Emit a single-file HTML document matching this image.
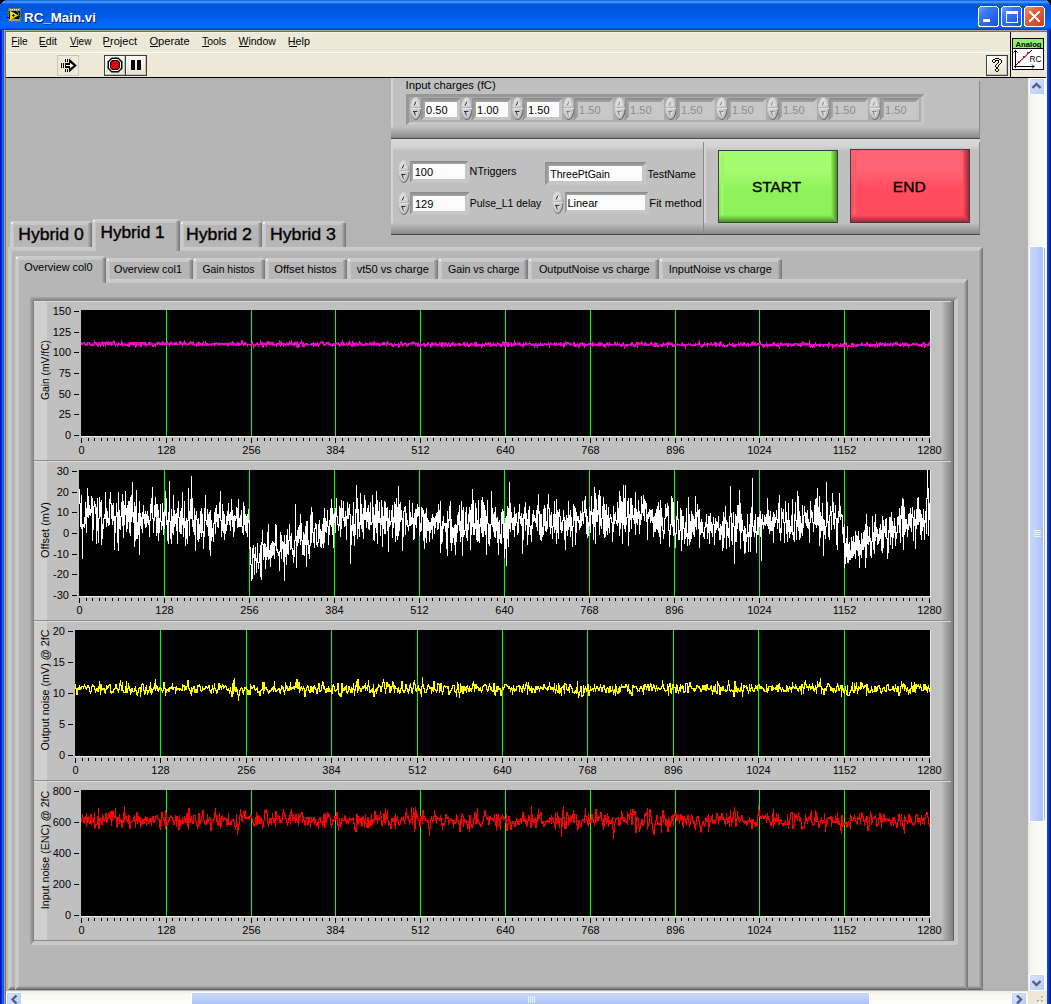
<!DOCTYPE html>
<html><head><meta charset="utf-8"><title>RC_Main.vi</title>
<style>html,body{margin:0;padding:0;background:#000;overflow:hidden;width:1051px;height:1004px}svg{display:block}text{font-family:"Liberation Sans",sans-serif;shape-rendering:auto}</style>
</head><body><svg width="1051" height="1004" viewBox="0 0 1051 1004" shape-rendering="crispEdges"><defs><linearGradient id="g1" x1="0" y1="0" x2="0" y2="1"><stop offset="0" stop-color="#0A3FD8"/><stop offset="0.03333333333333333" stop-color="#3A8DFF"/><stop offset="0.08333333333333333" stop-color="#3D95FF"/><stop offset="0.11666666666666667" stop-color="#0A6EF8"/><stop offset="0.15" stop-color="#0058E0"/><stop offset="0.3" stop-color="#0055DC"/><stop offset="0.6666666666666666" stop-color="#0061EE"/><stop offset="0.7333333333333333" stop-color="#0068FF"/><stop offset="0.9166666666666666" stop-color="#0066FF"/><stop offset="0.95" stop-color="#0052EA"/><stop offset="1" stop-color="#0030C8"/></linearGradient><linearGradient id="g2" x1="0" y1="0" x2="1" y2="0"><stop offset="0" stop-color="#0010D0"/><stop offset="0.25" stop-color="#0010D0"/><stop offset="0.25" stop-color="#0525D0"/><stop offset="0.5" stop-color="#0525D0"/><stop offset="0.5" stop-color="#166AEE"/><stop offset="0.75" stop-color="#166AEE"/><stop offset="0.75" stop-color="#0055E5"/><stop offset="1" stop-color="#0055E5"/></linearGradient><linearGradient id="g3" x1="0" y1="0" x2="1" y2="0"><stop offset="0" stop-color="#0048F0"/><stop offset="0.25" stop-color="#0048F0"/><stop offset="0.25" stop-color="#0040DD"/><stop offset="0.5" stop-color="#0040DD"/><stop offset="0.5" stop-color="#0828B0"/><stop offset="0.75" stop-color="#0828B0"/><stop offset="0.75" stop-color="#001488"/><stop offset="1" stop-color="#001488"/></linearGradient><linearGradient id="g4" x1="0" y1="0" x2="1" y2="1"><stop offset="0" stop-color="#7DA8FF"/><stop offset="0.3" stop-color="#3B78F5"/><stop offset="1" stop-color="#1B4FD8"/></linearGradient><linearGradient id="g5" x1="0" y1="0" x2="1" y2="1"><stop offset="0" stop-color="#7DA8FF"/><stop offset="0.3" stop-color="#3B78F5"/><stop offset="1" stop-color="#1B4FD8"/></linearGradient><linearGradient id="g6" x1="0" y1="0" x2="1" y2="1"><stop offset="0" stop-color="#F39478"/><stop offset="0.35" stop-color="#E3663E"/><stop offset="1" stop-color="#C8401A"/></linearGradient><linearGradient id="g7" x1="0" y1="0" x2="0" y2="1"><stop offset="0" stop-color="#FDFDF8"/><stop offset="1" stop-color="#E6E2D2"/></linearGradient><linearGradient id="g8" x1="0" y1="0" x2="0" y2="1"><stop offset="0" stop-color="#FDFDF8"/><stop offset="1" stop-color="#E6E2D2"/></linearGradient><linearGradient id="g9" x1="0" y1="0" x2="0" y2="1"><stop offset="0" stop-color="#FDFDF8"/><stop offset="1" stop-color="#E6E2D2"/></linearGradient><linearGradient id="g10" x1="0" y1="0" x2="0" y2="1"><stop offset="0" stop-color="#C0C0C0"/><stop offset="1" stop-color="#888888"/></linearGradient><linearGradient id="g11" x1="0" y1="0" x2="0" y2="1"><stop offset="0" stop-color="#D8D8D8"/><stop offset="0.6" stop-color="#D4D4D4"/><stop offset="1" stop-color="#C0C0C0"/></linearGradient><linearGradient id="g12" x1="0" y1="0" x2="0" y2="1"><stop offset="0" stop-color="#C0C0C0"/><stop offset="1" stop-color="#888888"/></linearGradient><linearGradient id="g13" x1="0" y1="0" x2="0" y2="1"><stop offset="0" stop-color="#D8D8D8"/><stop offset="0.6" stop-color="#D4D4D4"/><stop offset="1" stop-color="#C0C0C0"/></linearGradient><linearGradient id="g14" x1="0" y1="0" x2="0" y2="1"><stop offset="0" stop-color="#C0C0C0"/><stop offset="1" stop-color="#888888"/></linearGradient><linearGradient id="g15" x1="0" y1="0" x2="1" y2="1"><stop offset="0" stop-color="#EAEAEA"/><stop offset="0.45" stop-color="#D2D2D2"/><stop offset="1" stop-color="#B0B0B0"/></linearGradient><linearGradient id="g16" x1="0.2" y1="0" x2="0.8" y2="1"><stop offset="0" stop-color="#D8D8D8"/><stop offset="0.5" stop-color="#B0B0B0"/><stop offset="1" stop-color="#404040"/></linearGradient><linearGradient id="g17" x1="0" y1="0" x2="0" y2="1"><stop offset="0" stop-color="#888888"/><stop offset="1" stop-color="#A4A4A4"/></linearGradient><linearGradient id="g18" x1="0" y1="0" x2="1" y2="0"><stop offset="0" stop-color="#909090"/><stop offset="1" stop-color="#A8A8A8"/></linearGradient><linearGradient id="g19" x1="0" y1="0" x2="0" y2="1"><stop offset="0" stop-color="#A4FC70"/><stop offset="0.3" stop-color="#A4FC70"/><stop offset="0.55" stop-color="#8EF25A"/><stop offset="1" stop-color="#8EF25A"/></linearGradient><linearGradient id="g20" x1="0" y1="0" x2="1" y2="0"><stop offset="0" stop-color="#8EF25A"/><stop offset="0.5" stop-color="#A4FC70"/><stop offset="1" stop-color="#8EF25A"/></linearGradient><linearGradient id="g21" x1="0" y1="0" x2="0" y2="1"><stop offset="0" stop-color="#8EF25A"/><stop offset="1" stop-color="#4A9020"/></linearGradient><linearGradient id="g22" x1="0" y1="0" x2="1" y2="0"><stop offset="0" stop-color="#8EF25A"/><stop offset="1" stop-color="#4A9020"/></linearGradient><linearGradient id="g23" x1="0" y1="0" x2="0" y2="1"><stop offset="0" stop-color="#FF6272"/><stop offset="0.3" stop-color="#FF6272"/><stop offset="0.55" stop-color="#FF4C5E"/><stop offset="1" stop-color="#FF4C5E"/></linearGradient><linearGradient id="g24" x1="0" y1="0" x2="1" y2="0"><stop offset="0" stop-color="#FF4C5E"/><stop offset="0.5" stop-color="#FF6272"/><stop offset="1" stop-color="#FF4C5E"/></linearGradient><linearGradient id="g25" x1="0" y1="0" x2="0" y2="1"><stop offset="0" stop-color="#FF4C5E"/><stop offset="1" stop-color="#A02838"/></linearGradient><linearGradient id="g26" x1="0" y1="0" x2="1" y2="0"><stop offset="0" stop-color="#FF4C5E"/><stop offset="1" stop-color="#A02838"/></linearGradient><linearGradient id="g27" x1="0" y1="0" x2="0" y2="1"><stop offset="0" stop-color="#CDCDCD"/><stop offset="1" stop-color="#C6C6C6"/></linearGradient><linearGradient id="g28" x1="0" y1="0" x2="1" y2="0"><stop offset="0" stop-color="#C6C6C6"/><stop offset="0.5" stop-color="#CECECE"/><stop offset="1" stop-color="#C2C2C2"/></linearGradient><linearGradient id="g29" x1="0" y1="0" x2="1" y2="0"><stop offset="0" stop-color="#B0B0B0"/><stop offset="1" stop-color="#727272"/></linearGradient><linearGradient id="g30" x1="0" y1="0" x2="0" y2="1"><stop offset="0" stop-color="#B4B4B4"/><stop offset="1" stop-color="#5C5C5C"/></linearGradient><linearGradient id="g31" x1="0" y1="0" x2="0" y2="1"><stop offset="0" stop-color="#CDCDCD"/><stop offset="1" stop-color="#C6C6C6"/></linearGradient><linearGradient id="g32" x1="0" y1="0" x2="1" y2="0"><stop offset="0" stop-color="#C6C6C6"/><stop offset="0.5" stop-color="#CECECE"/><stop offset="1" stop-color="#C2C2C2"/></linearGradient><linearGradient id="g33" x1="0" y1="0" x2="1" y2="0"><stop offset="0" stop-color="#B0B0B0"/><stop offset="1" stop-color="#747474"/></linearGradient><linearGradient id="g34" x1="0" y1="0" x2="0" y2="1"><stop offset="0" stop-color="#CDCDCD"/><stop offset="1" stop-color="#C6C6C6"/></linearGradient><linearGradient id="g35" x1="0" y1="0" x2="1" y2="0"><stop offset="0" stop-color="#C6C6C6"/><stop offset="0.5" stop-color="#CECECE"/><stop offset="1" stop-color="#C2C2C2"/></linearGradient><linearGradient id="g36" x1="0" y1="0" x2="1" y2="0"><stop offset="0" stop-color="#B0B0B0"/><stop offset="1" stop-color="#747474"/></linearGradient><linearGradient id="g37" x1="0" y1="0" x2="0" y2="1"><stop offset="0" stop-color="#CDCDCD"/><stop offset="1" stop-color="#C6C6C6"/></linearGradient><linearGradient id="g38" x1="0" y1="0" x2="1" y2="0"><stop offset="0" stop-color="#C6C6C6"/><stop offset="0.5" stop-color="#CECECE"/><stop offset="1" stop-color="#C2C2C2"/></linearGradient><linearGradient id="g39" x1="0" y1="0" x2="1" y2="0"><stop offset="0" stop-color="#B0B0B0"/><stop offset="1" stop-color="#747474"/></linearGradient><linearGradient id="g40" x1="0" y1="0" x2="0" y2="1"><stop offset="0" stop-color="#CDCDCD"/><stop offset="1" stop-color="#C6C6C6"/></linearGradient><linearGradient id="g41" x1="0" y1="0" x2="1" y2="0"><stop offset="0" stop-color="#C6C6C6"/><stop offset="0.5" stop-color="#CECECE"/><stop offset="1" stop-color="#C2C2C2"/></linearGradient><linearGradient id="g42" x1="0" y1="0" x2="1" y2="0"><stop offset="0" stop-color="#B0B0B0"/><stop offset="1" stop-color="#747474"/></linearGradient><linearGradient id="g43" x1="0" y1="0" x2="0" y2="1"><stop offset="0" stop-color="#CDCDCD"/><stop offset="1" stop-color="#C6C6C6"/></linearGradient><linearGradient id="g44" x1="0" y1="0" x2="1" y2="0"><stop offset="0" stop-color="#C6C6C6"/><stop offset="0.5" stop-color="#CECECE"/><stop offset="1" stop-color="#C2C2C2"/></linearGradient><linearGradient id="g45" x1="0" y1="0" x2="1" y2="0"><stop offset="0" stop-color="#B0B0B0"/><stop offset="1" stop-color="#727272"/></linearGradient><linearGradient id="g46" x1="0" y1="0" x2="0" y2="1"><stop offset="0" stop-color="#B4B4B4"/><stop offset="1" stop-color="#5C5C5C"/></linearGradient><linearGradient id="g47" x1="0" y1="0" x2="0" y2="1"><stop offset="0" stop-color="#CDCDCD"/><stop offset="1" stop-color="#C6C6C6"/></linearGradient><linearGradient id="g48" x1="0" y1="0" x2="1" y2="0"><stop offset="0" stop-color="#C6C6C6"/><stop offset="0.5" stop-color="#CECECE"/><stop offset="1" stop-color="#C2C2C2"/></linearGradient><linearGradient id="g49" x1="0" y1="0" x2="1" y2="0"><stop offset="0" stop-color="#B0B0B0"/><stop offset="1" stop-color="#747474"/></linearGradient><linearGradient id="g50" x1="0" y1="0" x2="0" y2="1"><stop offset="0" stop-color="#CDCDCD"/><stop offset="1" stop-color="#C6C6C6"/></linearGradient><linearGradient id="g51" x1="0" y1="0" x2="1" y2="0"><stop offset="0" stop-color="#C6C6C6"/><stop offset="0.5" stop-color="#CECECE"/><stop offset="1" stop-color="#C2C2C2"/></linearGradient><linearGradient id="g52" x1="0" y1="0" x2="1" y2="0"><stop offset="0" stop-color="#B0B0B0"/><stop offset="1" stop-color="#747474"/></linearGradient><linearGradient id="g53" x1="0" y1="0" x2="0" y2="1"><stop offset="0" stop-color="#CDCDCD"/><stop offset="1" stop-color="#C6C6C6"/></linearGradient><linearGradient id="g54" x1="0" y1="0" x2="1" y2="0"><stop offset="0" stop-color="#C6C6C6"/><stop offset="0.5" stop-color="#CECECE"/><stop offset="1" stop-color="#C2C2C2"/></linearGradient><linearGradient id="g55" x1="0" y1="0" x2="1" y2="0"><stop offset="0" stop-color="#B0B0B0"/><stop offset="1" stop-color="#747474"/></linearGradient><linearGradient id="g56" x1="0" y1="0" x2="0" y2="1"><stop offset="0" stop-color="#CDCDCD"/><stop offset="1" stop-color="#C6C6C6"/></linearGradient><linearGradient id="g57" x1="0" y1="0" x2="1" y2="0"><stop offset="0" stop-color="#C6C6C6"/><stop offset="0.5" stop-color="#CECECE"/><stop offset="1" stop-color="#C2C2C2"/></linearGradient><linearGradient id="g58" x1="0" y1="0" x2="1" y2="0"><stop offset="0" stop-color="#B0B0B0"/><stop offset="1" stop-color="#747474"/></linearGradient><linearGradient id="g59" x1="0" y1="0" x2="0" y2="1"><stop offset="0" stop-color="#CDCDCD"/><stop offset="1" stop-color="#C6C6C6"/></linearGradient><linearGradient id="g60" x1="0" y1="0" x2="1" y2="0"><stop offset="0" stop-color="#C6C6C6"/><stop offset="0.5" stop-color="#CECECE"/><stop offset="1" stop-color="#C2C2C2"/></linearGradient><linearGradient id="g61" x1="0" y1="0" x2="1" y2="0"><stop offset="0" stop-color="#B0B0B0"/><stop offset="1" stop-color="#747474"/></linearGradient><linearGradient id="g62" x1="0" y1="0" x2="0" y2="1"><stop offset="0" stop-color="#CDCDCD"/><stop offset="1" stop-color="#C6C6C6"/></linearGradient><linearGradient id="g63" x1="0" y1="0" x2="1" y2="0"><stop offset="0" stop-color="#C6C6C6"/><stop offset="0.5" stop-color="#CECECE"/><stop offset="1" stop-color="#C2C2C2"/></linearGradient><linearGradient id="g64" x1="0" y1="0" x2="1" y2="0"><stop offset="0" stop-color="#B0B0B0"/><stop offset="1" stop-color="#747474"/></linearGradient><linearGradient id="g65" x1="0" y1="0" x2="0" y2="1"><stop offset="0" stop-color="#CDCDCD"/><stop offset="1" stop-color="#C6C6C6"/></linearGradient><linearGradient id="g66" x1="0" y1="0" x2="1" y2="0"><stop offset="0" stop-color="#C6C6C6"/><stop offset="0.5" stop-color="#CECECE"/><stop offset="1" stop-color="#C2C2C2"/></linearGradient><linearGradient id="g67" x1="0" y1="0" x2="1" y2="0"><stop offset="0" stop-color="#B0B0B0"/><stop offset="1" stop-color="#747474"/></linearGradient><linearGradient id="g68" x1="0" y1="0" x2="0" y2="1"><stop offset="0" stop-color="#CDCDCD"/><stop offset="1" stop-color="#C6C6C6"/></linearGradient><linearGradient id="g69" x1="0" y1="0" x2="1" y2="0"><stop offset="0" stop-color="#C6C6C6"/><stop offset="0.5" stop-color="#CECECE"/><stop offset="1" stop-color="#C2C2C2"/></linearGradient><linearGradient id="g70" x1="0" y1="0" x2="1" y2="0"><stop offset="0" stop-color="#B0B0B0"/><stop offset="1" stop-color="#747474"/></linearGradient><linearGradient id="g71" x1="0" y1="0" x2="1" y2="0"><stop offset="0" stop-color="#C0C0C0"/><stop offset="1" stop-color="#7A7A7A"/></linearGradient><linearGradient id="g72" x1="0" y1="0" x2="1" y2="0"><stop offset="0" stop-color="#C0C0C0"/><stop offset="1" stop-color="#7A7A7A"/></linearGradient><linearGradient id="g73" x1="0" y1="0" x2="1" y2="0"><stop offset="0" stop-color="#C0C0C0"/><stop offset="1" stop-color="#7A7A7A"/></linearGradient><linearGradient id="g74" x1="0" y1="0" x2="1" y2="0"><stop offset="0" stop-color="#C0C0C0"/><stop offset="1" stop-color="#7A7A7A"/></linearGradient><linearGradient id="g75" x1="0" y1="0" x2="0" y2="1"><stop offset="0" stop-color="#A8A8A8"/><stop offset="1" stop-color="#7E7E7E"/></linearGradient><linearGradient id="g76" x1="0" y1="0" x2="1" y2="0"><stop offset="0" stop-color="#A8A8A8"/><stop offset="1" stop-color="#7E7E7E"/></linearGradient><linearGradient id="g77" x1="0" y1="0" x2="1" y2="0"><stop offset="0" stop-color="#EEEDE5"/><stop offset="0.3" stop-color="#F8F8F2"/><stop offset="1" stop-color="#FEFEFB"/></linearGradient><linearGradient id="g78" x1="0" y1="0" x2="0" y2="1"><stop offset="0" stop-color="#EEEDE5"/><stop offset="0.3" stop-color="#F8F8F2"/><stop offset="1" stop-color="#FEFEFB"/></linearGradient><linearGradient id="g79" x1="0" y1="0" x2="1" y2="1"><stop offset="0" stop-color="#DCE6FE"/><stop offset="1" stop-color="#B6CBF7"/></linearGradient><linearGradient id="g80" x1="0" y1="0" x2="1" y2="1"><stop offset="0" stop-color="#DCE6FE"/><stop offset="1" stop-color="#B6CBF7"/></linearGradient><linearGradient id="g81" x1="0" y1="0" x2="1" y2="0"><stop offset="0" stop-color="#C9D8FC"/><stop offset="0.5" stop-color="#BCCEFA"/><stop offset="1" stop-color="#A9BFF2"/></linearGradient><linearGradient id="g82" x1="0" y1="0" x2="1" y2="1"><stop offset="0" stop-color="#DCE6FE"/><stop offset="1" stop-color="#B6CBF7"/></linearGradient><linearGradient id="g83" x1="0" y1="0" x2="1" y2="1"><stop offset="0" stop-color="#DCE6FE"/><stop offset="1" stop-color="#B6CBF7"/></linearGradient><linearGradient id="g84" x1="0" y1="0" x2="0" y2="1"><stop offset="0" stop-color="#C9D8FC"/><stop offset="0.5" stop-color="#BCCEFA"/><stop offset="1" stop-color="#A9BFF2"/></linearGradient></defs><rect x="0" y="0" width="1051" height="1004" fill="#000" /><path d="M0,30 L0,8 Q0,0 8,0 L1043,0 Q1051,0 1051,8 L1051,30 Z" fill="url(#g1)"/><rect x="0" y="30" width="4" height="974" fill="url(#g2)" /><rect x="1047" y="30" width="4" height="974" fill="url(#g3)" /><rect x="4" y="30" width="1043" height="1" fill="#ACA88F" /><rect x="4" y="31" width="1043" height="1" fill="#716F64" /><rect x="4" y="30" width="1" height="974" fill="#ACA88F" /><rect x="5" y="31" width="1" height="973" fill="#716F64" /><rect x="6" y="32" width="1041" height="20" fill="#ECE9D8" /><rect x="6" y="32" width="1041" height="1" fill="#F5F3EA" /><rect x="6" y="52" width="1005" height="25" fill="#ECE9D8" /><rect x="6" y="52" width="1005" height="1" fill="#FFFFFF" /><rect x="6" y="77" width="1005" height="1" fill="#000000" /><rect x="1011" y="32" width="36" height="46" fill="#ECE9D8" /><rect x="1010" y="32" width="1" height="46" fill="#000000" /><rect x="6" y="77" width="1040" height="1" fill="#000000" /><text x="25.06" y="23" font-family="Liberation Sans" font-size="13" font-weight="bold" fill="#0A1A6A" text-anchor="start" textLength="71.85" lengthAdjust="spacingAndGlyphs" >RC_Main.vi</text><text x="24.06" y="22" font-family="Liberation Sans" font-size="13" font-weight="bold" fill="#FFFFFF" text-anchor="start" textLength="71.85" lengthAdjust="spacingAndGlyphs" >RC_Main.vi</text><rect x="8" y="8" width="13" height="14" fill="#6E6A60" /><rect x="9" y="9" width="11" height="2" fill="#9C9890" /><rect x="10" y="9" width="1" height="1" fill="#F0F0F0" /><rect x="10" y="20" width="1" height="1" fill="#F0F0F0" /><rect x="12" y="9" width="1" height="1" fill="#F0F0F0" /><rect x="12" y="20" width="1" height="1" fill="#F0F0F0" /><rect x="14" y="9" width="1" height="1" fill="#F0F0F0" /><rect x="14" y="20" width="1" height="1" fill="#F0F0F0" /><rect x="16" y="9" width="1" height="1" fill="#F0F0F0" /><rect x="16" y="20" width="1" height="1" fill="#F0F0F0" /><rect x="18" y="9" width="1" height="1" fill="#F0F0F0" /><rect x="18" y="20" width="1" height="1" fill="#F0F0F0" /><rect x="9" y="19" width="11" height="2" fill="#9C9890" /><rect x="9" y="11" width="11" height="8" fill="#000" /><path d="M10,10.5 L18.5,15.5 L10,20 Z" fill="#F8D820" shape-rendering="auto"/><rect x="13" y="14" width="1" height="3" fill="#202020" /><rect x="12" y="15" width="3" height="1" fill="#202020" /><rect x="16" y="11" width="2" height="1" fill="#10A010" /><rect x="18" y="12" width="1" height="3" fill="#10A010" /><rect x="13" y="18" width="2" height="1" fill="#10A010" /><rect x="19" y="17" width="1" height="2" fill="#10A010" /><rect x="6" y="13" width="4" height="1" fill="#FF0000" /><rect x="6" y="17" width="4" height="1" fill="#0000FF" /><rect x="18" y="15" width="4" height="1" fill="#FF0000" /><rect x="978.5" y="6.5" width="20" height="20" rx="3" ry="3" fill="url(#g4)" stroke="#FFFFFF" stroke-width="1"/><rect x="983" y="19" width="7" height="3" fill="#FFFFFF" /><rect x="1001.5" y="6.5" width="20" height="20" rx="3" ry="3" fill="url(#g5)" stroke="#FFFFFF" stroke-width="1"/><rect x="1006" y="11" width="11" height="11" fill="none" stroke="#FFFFFF" stroke-width="1"/><rect x="1006" y="11" width="11" height="3" fill="#FFFFFF" /><rect x="1024.5" y="6.5" width="20" height="20" rx="3" ry="3" fill="url(#g6)" stroke="#FFFFFF" stroke-width="1"/><path d="M1030,12 L1039,21 M1039,12 L1030,21" stroke="#FFFFFF" stroke-width="2.2" stroke-linecap="square"/><text x="11.16" y="45" font-family="Liberation Sans" font-size="11" font-weight="normal" fill="#000" text-anchor="start" textLength="16.51" lengthAdjust="spacingAndGlyphs" >File</text><rect x="12" y="46" width="7" height="1" fill="#000" /><text x="38.84" y="45" font-family="Liberation Sans" font-size="11" font-weight="normal" fill="#000" text-anchor="start" textLength="18.13" lengthAdjust="spacingAndGlyphs" >Edit</text><rect x="40" y="46" width="7" height="1" fill="#000" /><text x="69.96" y="45" font-family="Liberation Sans" font-size="11" font-weight="normal" fill="#000" text-anchor="start" textLength="21.4" lengthAdjust="spacingAndGlyphs" >View</text><rect x="70" y="46" width="8" height="1" fill="#000" /><text x="102.64" y="45" font-family="Liberation Sans" font-size="11" font-weight="normal" fill="#000" text-anchor="start" textLength="34.36" lengthAdjust="spacingAndGlyphs" >Project</text><rect x="104" y="46" width="7" height="1" fill="#000" /><text x="149.42" y="45" font-family="Liberation Sans" font-size="11" font-weight="normal" fill="#000" text-anchor="start" textLength="40.2" lengthAdjust="spacingAndGlyphs" >Operate</text><rect x="150" y="46" width="8" height="1" fill="#000" /><text x="201.92" y="45" font-family="Liberation Sans" font-size="11" font-weight="normal" fill="#000" text-anchor="start" textLength="24.42" lengthAdjust="spacingAndGlyphs" >Tools</text><rect x="202" y="46" width="7" height="1" fill="#000" /><text x="238.49" y="45" font-family="Liberation Sans" font-size="11" font-weight="normal" fill="#000" text-anchor="start" textLength="37.39" lengthAdjust="spacingAndGlyphs" >Window</text><rect x="239" y="46" width="10" height="1" fill="#000" /><text x="287.87" y="45" font-family="Liberation Sans" font-size="11" font-weight="normal" fill="#000" text-anchor="start" textLength="22.08" lengthAdjust="spacingAndGlyphs" >Help</text><rect x="289" y="46" width="8" height="1" fill="#000" /><rect x="57" y="55" width="22" height="21" fill="#ECE9D8" /><rect x="57.5" y="55.5" width="21" height="20" fill="none" stroke="#CAC6B4"/><rect x="61" y="63" width="1" height="5" fill="#000" /><rect x="63" y="63" width="1" height="5" fill="#000" /><rect x="65" y="59" width="1" height="3" fill="#000" /><rect x="67" y="59" width="1" height="3" fill="#000" /><rect x="65" y="69" width="1" height="3" fill="#000" /><rect x="67" y="69" width="1" height="3" fill="#000" /><rect x="65" y="63" width="5" height="5" fill="#000" /><path d="M69,58.5 L76.8,65.5 L69,72.5 Z" fill="#000" shape-rendering="auto"/><rect x="66" y="65" width="5" height="1" fill="#FFF" /><path d="M70,62.8 L73.6,65.5 L70,68.2 Z" fill="#FFF" shape-rendering="auto"/><rect x="104" y="55" width="22" height="21" fill="#3C3C3C" /><rect x="105" y="56" width="20" height="19" fill="url(#g7)" /><rect x="105" y="56" width="20" height="1" fill="#FFFFFF" /><rect x="105" y="56" width="1" height="19" fill="#FFFFFF" /><rect x="105" y="74" width="20" height="1" fill="#C8C4B4" /><rect x="124" y="56" width="1" height="19" fill="#C8C4B4" /><rect x="125" y="55" width="22" height="21" fill="#3C3C3C" /><rect x="126" y="56" width="20" height="19" fill="url(#g8)" /><rect x="126" y="56" width="20" height="1" fill="#FFFFFF" /><rect x="126" y="56" width="1" height="19" fill="#FFFFFF" /><rect x="126" y="74" width="20" height="1" fill="#C8C4B4" /><rect x="145" y="56" width="1" height="19" fill="#C8C4B4" /><rect x="125" y="55" width="1" height="21" fill="#3C3C3C" /><path d="M111.5,57.5 L118.5,57.5 L122.5,61.5 L122.5,68.5 L118.5,72.5 L111.5,72.5 L107.5,68.5 L107.5,61.5 Z" fill="#000" shape-rendering="auto"/><path d="M112,59 L118,59 L121,62 L121,68 L118,71 L112,71 L109,68 L109,62 Z" fill="#FFF" shape-rendering="auto"/><path d="M112.3,60 L117.7,60 L120,62.3 L120,67.7 L117.7,70 L112.3,70 L110,67.7 L110,62.3 Z" fill="#000" shape-rendering="auto"/><path d="M112.7,61 L117.3,61 L119,62.7 L119,67.3 L117.3,69 L112.7,69 L111,67.3 L111,62.7 Z" fill="#E00000" shape-rendering="auto"/><rect x="131" y="60" width="4" height="10" fill="#000" /><rect x="137" y="60" width="4" height="10" fill="#000" /><rect x="986" y="55" width="22" height="21" fill="#3C3C3C" /><rect x="987" y="56" width="20" height="19" fill="url(#g9)" /><rect x="987" y="56" width="20" height="1" fill="#FFFFFF" /><rect x="987" y="56" width="1" height="19" fill="#FFFFFF" /><rect x="987" y="74" width="20" height="1" fill="#C8C4B4" /><rect x="1006" y="56" width="1" height="19" fill="#C8C4B4" /><rect x="995" y="58" width="1" height="1" fill="#000" /><rect x="996" y="58" width="1" height="1" fill="#000" /><rect x="997" y="58" width="1" height="1" fill="#000" /><rect x="998" y="58" width="1" height="1" fill="#000" /><rect x="993" y="59" width="1" height="1" fill="#000" /><rect x="994" y="59" width="1" height="1" fill="#000" /><rect x="995" y="59" width="1" height="1" fill="#F8F890" /><rect x="996" y="59" width="1" height="1" fill="#F8F890" /><rect x="997" y="59" width="1" height="1" fill="#F8F890" /><rect x="998" y="59" width="1" height="1" fill="#F8F890" /><rect x="999" y="59" width="1" height="1" fill="#000" /><rect x="1000" y="59" width="1" height="1" fill="#000" /><rect x="992" y="60" width="1" height="1" fill="#000" /><rect x="993" y="60" width="1" height="1" fill="#F8F890" /><rect x="994" y="60" width="1" height="1" fill="#F8F890" /><rect x="995" y="60" width="1" height="1" fill="#000" /><rect x="996" y="60" width="1" height="1" fill="#000" /><rect x="997" y="60" width="1" height="1" fill="#000" /><rect x="998" y="60" width="1" height="1" fill="#000" /><rect x="999" y="60" width="1" height="1" fill="#F8F890" /><rect x="1000" y="60" width="1" height="1" fill="#F8F890" /><rect x="1001" y="60" width="1" height="1" fill="#000" /><rect x="992" y="61" width="1" height="1" fill="#000" /><rect x="993" y="61" width="1" height="1" fill="#F8F890" /><rect x="994" y="61" width="1" height="1" fill="#F8F890" /><rect x="995" y="61" width="1" height="1" fill="#000" /><rect x="998" y="61" width="1" height="1" fill="#000" /><rect x="999" y="61" width="1" height="1" fill="#F8F890" /><rect x="1000" y="61" width="1" height="1" fill="#F8F890" /><rect x="1001" y="61" width="1" height="1" fill="#000" /><rect x="993" y="62" width="1" height="1" fill="#000" /><rect x="994" y="62" width="1" height="1" fill="#000" /><rect x="998" y="62" width="1" height="1" fill="#000" /><rect x="999" y="62" width="1" height="1" fill="#F8F890" /><rect x="1000" y="62" width="1" height="1" fill="#F8F890" /><rect x="1001" y="62" width="1" height="1" fill="#000" /><rect x="997" y="63" width="1" height="1" fill="#000" /><rect x="998" y="63" width="1" height="1" fill="#F8F890" /><rect x="999" y="63" width="1" height="1" fill="#F8F890" /><rect x="1000" y="63" width="1" height="1" fill="#000" /><rect x="996" y="64" width="1" height="1" fill="#000" /><rect x="997" y="64" width="1" height="1" fill="#F8F890" /><rect x="998" y="64" width="1" height="1" fill="#F8F890" /><rect x="999" y="64" width="1" height="1" fill="#000" /><rect x="995" y="65" width="1" height="1" fill="#000" /><rect x="996" y="65" width="1" height="1" fill="#F8F890" /><rect x="997" y="65" width="1" height="1" fill="#F8F890" /><rect x="998" y="65" width="1" height="1" fill="#000" /><rect x="995" y="66" width="1" height="1" fill="#000" /><rect x="996" y="66" width="1" height="1" fill="#F8F890" /><rect x="997" y="66" width="1" height="1" fill="#F8F890" /><rect x="998" y="66" width="1" height="1" fill="#000" /><rect x="996" y="67" width="1" height="1" fill="#000" /><rect x="997" y="67" width="1" height="1" fill="#000" /><rect x="996" y="68" width="1" height="1" fill="#000" /><rect x="997" y="68" width="1" height="1" fill="#000" /><rect x="995" y="69" width="1" height="1" fill="#000" /><rect x="996" y="69" width="1" height="1" fill="#F8F890" /><rect x="997" y="69" width="1" height="1" fill="#F8F890" /><rect x="998" y="69" width="1" height="1" fill="#000" /><rect x="995" y="70" width="1" height="1" fill="#000" /><rect x="996" y="70" width="1" height="1" fill="#F8F890" /><rect x="997" y="70" width="1" height="1" fill="#F8F890" /><rect x="998" y="70" width="1" height="1" fill="#000" /><rect x="996" y="71" width="1" height="1" fill="#000" /><rect x="997" y="71" width="1" height="1" fill="#000" /><rect x="1012" y="38" width="32" height="32" fill="#000"/><rect x="1013" y="39" width="30" height="9" fill="#90F070"/><rect x="1013" y="49" width="30" height="20" fill="#FFF"/><path d="M1015.5,50 L1015.5,68 M1013.5,52.5 L1015.5,50.5 L1017.5,52.5 M1014,66.5 L1034,66.5 M1032,64.5 L1034,66.5 L1032,68.5 M1016,65 L1032,50" stroke="#000" stroke-width="1" fill="none" shape-rendering="auto"/><rect x="1018" y="61" width="2" height="2" fill="#FF0000" /><rect x="1023" y="56" width="2" height="2" fill="#FF0000" /><rect x="1027" y="52" width="2" height="2" fill="#FF0000" /><text x="1015.57" y="47" font-family="Liberation Sans" font-size="8" font-weight="bold" fill="#000" text-anchor="start" textLength="25.98" lengthAdjust="spacingAndGlyphs" >Analog</text><text x="1029.49" y="62" font-family="Liberation Sans" font-size="8.5" font-weight="normal" fill="#000" text-anchor="start" textLength="11.97" lengthAdjust="spacingAndGlyphs" >RC</text><rect x="6" y="78" width="1022" height="913" fill="#B4B4B4" /><rect x="391" y="78" width="589" height="61" fill="#C0C0C0" /><rect x="391" y="78" width="2" height="61" fill="#D4D4D4" /><rect x="391" y="127" width="589" height="11" fill="url(#g10)" /><rect x="391" y="138" width="589" height="1" fill="#484848" /><rect x="979" y="81" width="1" height="57" fill="#8A8A8A" /><rect x="391" y="139" width="313" height="96" fill="#C0C0C0" /><rect x="391" y="139" width="313" height="12" fill="url(#g11)" /><rect x="391" y="139" width="2" height="96" fill="#D4D4D4" /><rect x="391" y="223" width="313" height="11" fill="url(#g12)" /><rect x="391" y="234" width="313" height="1" fill="#484848" /><rect x="703" y="142" width="1" height="92" fill="#8A8A8A" /><rect x="704" y="139" width="276" height="96" fill="#C0C0C0" /><rect x="704" y="139" width="276" height="12" fill="url(#g13)" /><rect x="704" y="139" width="2" height="96" fill="#D4D4D4" /><rect x="704" y="223" width="276" height="11" fill="url(#g14)" /><rect x="704" y="234" width="276" height="1" fill="#484848" /><rect x="979" y="142" width="1" height="92" fill="#8A8A8A" /><text x="405.64" y="89" font-family="Liberation Sans" font-size="11" font-weight="normal" fill="#000" text-anchor="start" textLength="90.11" lengthAdjust="spacingAndGlyphs" >Input charges (fC)</text><rect x="406" y="94" width="518" height="31" fill="#ACACAC" /><path d="M406,94 L924,94 L921,97 L409,97 L409,122 L406,125 Z" fill="#979797"/><path d="M924,94 L924,125 L406,125 L409,122 L921,122 L921,97 Z" fill="#C8C8C8"/><ellipse cx="415.75" cy="108.5" rx="5.25" ry="11" fill="url(#g15)" stroke="url(#g16)" stroke-width="1" shape-rendering="auto"/><rect x="411" y="107" width="10" height="1" fill="#B4B4B4"/><rect x="411" y="108" width="10" height="1" fill="#E4E4E4"/><path d="M414,105.5 L416,101.5" stroke="#303030" stroke-width="1" shape-rendering="auto"/><path d="M416,101.5 L418,105.5" stroke="#F0F0F0" stroke-width="1" shape-rendering="auto"/><rect x="413" y="111" width="5" height="1" fill="#303030" /><path d="M414,111.5 L415.5,115.5" stroke="#303030" stroke-width="1" shape-rendering="auto"/><path d="M417.5,111.5 L416,115.5" stroke="#F0F0F0" stroke-width="1" shape-rendering="auto"/><rect x="421" y="98" width="39" height="22" fill="#B4B4B4" /><path d="M460,98 L460,120 L421,120 L425,117 L457,117 L457,102 Z" fill="#C6C6C6"/><path d="M421,98 L460,98 L457,102 L421,102 Z" fill="url(#g17)"/><path d="M421,98 L425,102 L425,117 L421,120 Z" fill="url(#g18)"/><rect x="425" y="102" width="32" height="15" fill="#FBFBFB" /><text x="426.09999999999997" y="114" font-family="Liberation Sans" font-size="11" font-weight="normal" fill="#000" text-anchor="start" >0.50</text><ellipse cx="466.75" cy="108.5" rx="5.25" ry="11" fill="url(#g15)" stroke="url(#g16)" stroke-width="1" shape-rendering="auto"/><rect x="462" y="107" width="10" height="1" fill="#B4B4B4"/><rect x="462" y="108" width="10" height="1" fill="#E4E4E4"/><path d="M465,105.5 L467,101.5" stroke="#303030" stroke-width="1" shape-rendering="auto"/><path d="M467,101.5 L469,105.5" stroke="#F0F0F0" stroke-width="1" shape-rendering="auto"/><rect x="464" y="111" width="5" height="1" fill="#303030" /><path d="M465,111.5 L466.5,115.5" stroke="#303030" stroke-width="1" shape-rendering="auto"/><path d="M468.5,111.5 L467,115.5" stroke="#F0F0F0" stroke-width="1" shape-rendering="auto"/><rect x="472" y="98" width="39" height="22" fill="#B4B4B4" /><path d="M511,98 L511,120 L472,120 L476,117 L508,117 L508,102 Z" fill="#C6C6C6"/><path d="M472,98 L511,98 L508,102 L472,102 Z" fill="url(#g17)"/><path d="M472,98 L476,102 L476,117 L472,120 Z" fill="url(#g18)"/><rect x="476" y="102" width="32" height="15" fill="#FBFBFB" /><text x="477.09999999999997" y="114" font-family="Liberation Sans" font-size="11" font-weight="normal" fill="#000" text-anchor="start" >1.00</text><ellipse cx="517.75" cy="108.5" rx="5.25" ry="11" fill="url(#g15)" stroke="url(#g16)" stroke-width="1" shape-rendering="auto"/><rect x="513" y="107" width="10" height="1" fill="#B4B4B4"/><rect x="513" y="108" width="10" height="1" fill="#E4E4E4"/><path d="M516,105.5 L518,101.5" stroke="#303030" stroke-width="1" shape-rendering="auto"/><path d="M518,101.5 L520,105.5" stroke="#F0F0F0" stroke-width="1" shape-rendering="auto"/><rect x="515" y="111" width="5" height="1" fill="#303030" /><path d="M516,111.5 L517.5,115.5" stroke="#303030" stroke-width="1" shape-rendering="auto"/><path d="M519.5,111.5 L518,115.5" stroke="#F0F0F0" stroke-width="1" shape-rendering="auto"/><rect x="523" y="98" width="39" height="22" fill="#B4B4B4" /><path d="M562,98 L562,120 L523,120 L527,117 L559,117 L559,102 Z" fill="#C6C6C6"/><path d="M523,98 L562,98 L559,102 L523,102 Z" fill="url(#g17)"/><path d="M523,98 L527,102 L527,117 L523,120 Z" fill="url(#g18)"/><rect x="527" y="102" width="32" height="15" fill="#FBFBFB" /><text x="528.1" y="114" font-family="Liberation Sans" font-size="11" font-weight="normal" fill="#000" text-anchor="start" >1.50</text><ellipse cx="568.75" cy="108.5" rx="5.25" ry="11" fill="url(#g15)" stroke="url(#g16)" stroke-width="1" shape-rendering="auto"/><rect x="564" y="107" width="10" height="1" fill="#B4B4B4"/><rect x="564" y="108" width="10" height="1" fill="#E4E4E4"/><path d="M567,105.5 L569,101.5" stroke="#8A8A8A" stroke-width="1" shape-rendering="auto"/><path d="M569,101.5 L571,105.5" stroke="#F0F0F0" stroke-width="1" shape-rendering="auto"/><rect x="566" y="111" width="5" height="1" fill="#8A8A8A" /><path d="M567,111.5 L568.5,115.5" stroke="#8A8A8A" stroke-width="1" shape-rendering="auto"/><path d="M570.5,111.5 L569,115.5" stroke="#F0F0F0" stroke-width="1" shape-rendering="auto"/><rect x="574" y="98" width="39" height="22" fill="#B4B4B4" /><path d="M613,98 L613,120 L574,120 L578,117 L610,117 L610,102 Z" fill="#C6C6C6"/><path d="M574,98 L613,98 L610,102 L574,102 Z" fill="url(#g17)"/><path d="M574,98 L578,102 L578,117 L574,120 Z" fill="url(#g18)"/><rect x="578" y="102" width="32" height="15" fill="#C8C8C8" /><text x="579.1" y="114" font-family="Liberation Sans" font-size="11" font-weight="normal" fill="#8C8C8C" text-anchor="start" >1.50</text><ellipse cx="619.75" cy="108.5" rx="5.25" ry="11" fill="url(#g15)" stroke="url(#g16)" stroke-width="1" shape-rendering="auto"/><rect x="615" y="107" width="10" height="1" fill="#B4B4B4"/><rect x="615" y="108" width="10" height="1" fill="#E4E4E4"/><path d="M618,105.5 L620,101.5" stroke="#8A8A8A" stroke-width="1" shape-rendering="auto"/><path d="M620,101.5 L622,105.5" stroke="#F0F0F0" stroke-width="1" shape-rendering="auto"/><rect x="617" y="111" width="5" height="1" fill="#8A8A8A" /><path d="M618,111.5 L619.5,115.5" stroke="#8A8A8A" stroke-width="1" shape-rendering="auto"/><path d="M621.5,111.5 L620,115.5" stroke="#F0F0F0" stroke-width="1" shape-rendering="auto"/><rect x="625" y="98" width="39" height="22" fill="#B4B4B4" /><path d="M664,98 L664,120 L625,120 L629,117 L661,117 L661,102 Z" fill="#C6C6C6"/><path d="M625,98 L664,98 L661,102 L625,102 Z" fill="url(#g17)"/><path d="M625,98 L629,102 L629,117 L625,120 Z" fill="url(#g18)"/><rect x="629" y="102" width="32" height="15" fill="#C8C8C8" /><text x="630.1" y="114" font-family="Liberation Sans" font-size="11" font-weight="normal" fill="#8C8C8C" text-anchor="start" >1.50</text><ellipse cx="670.75" cy="108.5" rx="5.25" ry="11" fill="url(#g15)" stroke="url(#g16)" stroke-width="1" shape-rendering="auto"/><rect x="666" y="107" width="10" height="1" fill="#B4B4B4"/><rect x="666" y="108" width="10" height="1" fill="#E4E4E4"/><path d="M669,105.5 L671,101.5" stroke="#8A8A8A" stroke-width="1" shape-rendering="auto"/><path d="M671,101.5 L673,105.5" stroke="#F0F0F0" stroke-width="1" shape-rendering="auto"/><rect x="668" y="111" width="5" height="1" fill="#8A8A8A" /><path d="M669,111.5 L670.5,115.5" stroke="#8A8A8A" stroke-width="1" shape-rendering="auto"/><path d="M672.5,111.5 L671,115.5" stroke="#F0F0F0" stroke-width="1" shape-rendering="auto"/><rect x="676" y="98" width="39" height="22" fill="#B4B4B4" /><path d="M715,98 L715,120 L676,120 L680,117 L712,117 L712,102 Z" fill="#C6C6C6"/><path d="M676,98 L715,98 L712,102 L676,102 Z" fill="url(#g17)"/><path d="M676,98 L680,102 L680,117 L676,120 Z" fill="url(#g18)"/><rect x="680" y="102" width="32" height="15" fill="#C8C8C8" /><text x="681.1" y="114" font-family="Liberation Sans" font-size="11" font-weight="normal" fill="#8C8C8C" text-anchor="start" >1.50</text><ellipse cx="721.75" cy="108.5" rx="5.25" ry="11" fill="url(#g15)" stroke="url(#g16)" stroke-width="1" shape-rendering="auto"/><rect x="717" y="107" width="10" height="1" fill="#B4B4B4"/><rect x="717" y="108" width="10" height="1" fill="#E4E4E4"/><path d="M720,105.5 L722,101.5" stroke="#8A8A8A" stroke-width="1" shape-rendering="auto"/><path d="M722,101.5 L724,105.5" stroke="#F0F0F0" stroke-width="1" shape-rendering="auto"/><rect x="719" y="111" width="5" height="1" fill="#8A8A8A" /><path d="M720,111.5 L721.5,115.5" stroke="#8A8A8A" stroke-width="1" shape-rendering="auto"/><path d="M723.5,111.5 L722,115.5" stroke="#F0F0F0" stroke-width="1" shape-rendering="auto"/><rect x="727" y="98" width="39" height="22" fill="#B4B4B4" /><path d="M766,98 L766,120 L727,120 L731,117 L763,117 L763,102 Z" fill="#C6C6C6"/><path d="M727,98 L766,98 L763,102 L727,102 Z" fill="url(#g17)"/><path d="M727,98 L731,102 L731,117 L727,120 Z" fill="url(#g18)"/><rect x="731" y="102" width="32" height="15" fill="#C8C8C8" /><text x="732.1" y="114" font-family="Liberation Sans" font-size="11" font-weight="normal" fill="#8C8C8C" text-anchor="start" >1.50</text><ellipse cx="772.75" cy="108.5" rx="5.25" ry="11" fill="url(#g15)" stroke="url(#g16)" stroke-width="1" shape-rendering="auto"/><rect x="768" y="107" width="10" height="1" fill="#B4B4B4"/><rect x="768" y="108" width="10" height="1" fill="#E4E4E4"/><path d="M771,105.5 L773,101.5" stroke="#8A8A8A" stroke-width="1" shape-rendering="auto"/><path d="M773,101.5 L775,105.5" stroke="#F0F0F0" stroke-width="1" shape-rendering="auto"/><rect x="770" y="111" width="5" height="1" fill="#8A8A8A" /><path d="M771,111.5 L772.5,115.5" stroke="#8A8A8A" stroke-width="1" shape-rendering="auto"/><path d="M774.5,111.5 L773,115.5" stroke="#F0F0F0" stroke-width="1" shape-rendering="auto"/><rect x="778" y="98" width="39" height="22" fill="#B4B4B4" /><path d="M817,98 L817,120 L778,120 L782,117 L814,117 L814,102 Z" fill="#C6C6C6"/><path d="M778,98 L817,98 L814,102 L778,102 Z" fill="url(#g17)"/><path d="M778,98 L782,102 L782,117 L778,120 Z" fill="url(#g18)"/><rect x="782" y="102" width="32" height="15" fill="#C8C8C8" /><text x="783.1" y="114" font-family="Liberation Sans" font-size="11" font-weight="normal" fill="#8C8C8C" text-anchor="start" >1.50</text><ellipse cx="823.75" cy="108.5" rx="5.25" ry="11" fill="url(#g15)" stroke="url(#g16)" stroke-width="1" shape-rendering="auto"/><rect x="819" y="107" width="10" height="1" fill="#B4B4B4"/><rect x="819" y="108" width="10" height="1" fill="#E4E4E4"/><path d="M822,105.5 L824,101.5" stroke="#8A8A8A" stroke-width="1" shape-rendering="auto"/><path d="M824,101.5 L826,105.5" stroke="#F0F0F0" stroke-width="1" shape-rendering="auto"/><rect x="821" y="111" width="5" height="1" fill="#8A8A8A" /><path d="M822,111.5 L823.5,115.5" stroke="#8A8A8A" stroke-width="1" shape-rendering="auto"/><path d="M825.5,111.5 L824,115.5" stroke="#F0F0F0" stroke-width="1" shape-rendering="auto"/><rect x="829" y="98" width="39" height="22" fill="#B4B4B4" /><path d="M868,98 L868,120 L829,120 L833,117 L865,117 L865,102 Z" fill="#C6C6C6"/><path d="M829,98 L868,98 L865,102 L829,102 Z" fill="url(#g17)"/><path d="M829,98 L833,102 L833,117 L829,120 Z" fill="url(#g18)"/><rect x="833" y="102" width="32" height="15" fill="#C8C8C8" /><text x="834.1" y="114" font-family="Liberation Sans" font-size="11" font-weight="normal" fill="#8C8C8C" text-anchor="start" >1.50</text><ellipse cx="874.75" cy="108.5" rx="5.25" ry="11" fill="url(#g15)" stroke="url(#g16)" stroke-width="1" shape-rendering="auto"/><rect x="870" y="107" width="10" height="1" fill="#B4B4B4"/><rect x="870" y="108" width="10" height="1" fill="#E4E4E4"/><path d="M873,105.5 L875,101.5" stroke="#8A8A8A" stroke-width="1" shape-rendering="auto"/><path d="M875,101.5 L877,105.5" stroke="#F0F0F0" stroke-width="1" shape-rendering="auto"/><rect x="872" y="111" width="5" height="1" fill="#8A8A8A" /><path d="M873,111.5 L874.5,115.5" stroke="#8A8A8A" stroke-width="1" shape-rendering="auto"/><path d="M876.5,111.5 L875,115.5" stroke="#F0F0F0" stroke-width="1" shape-rendering="auto"/><rect x="880" y="98" width="39" height="22" fill="#B4B4B4" /><path d="M919,98 L919,120 L880,120 L884,117 L916,117 L916,102 Z" fill="#C6C6C6"/><path d="M880,98 L919,98 L916,102 L880,102 Z" fill="url(#g17)"/><path d="M880,98 L884,102 L884,117 L880,120 Z" fill="url(#g18)"/><rect x="884" y="102" width="32" height="15" fill="#C8C8C8" /><text x="885.1" y="114" font-family="Liberation Sans" font-size="11" font-weight="normal" fill="#8C8C8C" text-anchor="start" >1.50</text><ellipse cx="403.75" cy="171.5" rx="5.25" ry="11" fill="url(#g15)" stroke="url(#g16)" stroke-width="1" shape-rendering="auto"/><rect x="399" y="170" width="10" height="1" fill="#B4B4B4"/><rect x="399" y="171" width="10" height="1" fill="#E4E4E4"/><path d="M402,168.5 L404,164.5" stroke="#303030" stroke-width="1" shape-rendering="auto"/><path d="M404,164.5 L406,168.5" stroke="#F0F0F0" stroke-width="1" shape-rendering="auto"/><rect x="401" y="174" width="5" height="1" fill="#303030" /><path d="M402,174.5 L403.5,178.5" stroke="#303030" stroke-width="1" shape-rendering="auto"/><path d="M405.5,174.5 L404,178.5" stroke="#F0F0F0" stroke-width="1" shape-rendering="auto"/><rect x="410" y="161" width="59" height="22" fill="#B4B4B4" /><path d="M469,161 L469,183 L410,183 L413,179 L465,179 L465,164 Z" fill="#C6C6C6"/><path d="M410,161 L469,161 L465,164 L410,164 Z" fill="url(#g17)"/><path d="M410,161 L413,164 L413,179 L410,183 Z" fill="url(#g18)"/><rect x="413" y="164" width="52" height="15" fill="#FBFBFB" /><text x="414.7" y="176" font-family="Liberation Sans" font-size="11" font-weight="normal" fill="#000" text-anchor="start" >100</text><text x="469.62" y="175" font-family="Liberation Sans" font-size="11" font-weight="normal" fill="#000" text-anchor="start" textLength="46.91" lengthAdjust="spacingAndGlyphs" >NTriggers</text><ellipse cx="403.75" cy="203.5" rx="5.25" ry="11" fill="url(#g15)" stroke="url(#g16)" stroke-width="1" shape-rendering="auto"/><rect x="399" y="202" width="10" height="1" fill="#B4B4B4"/><rect x="399" y="203" width="10" height="1" fill="#E4E4E4"/><path d="M402,200.5 L404,196.5" stroke="#303030" stroke-width="1" shape-rendering="auto"/><path d="M404,196.5 L406,200.5" stroke="#F0F0F0" stroke-width="1" shape-rendering="auto"/><rect x="401" y="206" width="5" height="1" fill="#303030" /><path d="M402,206.5 L403.5,210.5" stroke="#303030" stroke-width="1" shape-rendering="auto"/><path d="M405.5,206.5 L404,210.5" stroke="#F0F0F0" stroke-width="1" shape-rendering="auto"/><rect x="410" y="192" width="59" height="23" fill="#B4B4B4" /><path d="M469,192 L469,215 L410,215 L413,211 L465,211 L465,196 Z" fill="#C6C6C6"/><path d="M410,192 L469,192 L465,196 L410,196 Z" fill="url(#g17)"/><path d="M410,192 L413,196 L413,211 L410,215 Z" fill="url(#g18)"/><rect x="413" y="196" width="52" height="15" fill="#FBFBFB" /><text x="414.9" y="208" font-family="Liberation Sans" font-size="11" font-weight="normal" fill="#000" text-anchor="start" >129</text><text x="469.8" y="207" font-family="Liberation Sans" font-size="11" font-weight="normal" fill="#000" text-anchor="start" textLength="71.51" lengthAdjust="spacingAndGlyphs" >Pulse_L1 delay</text><rect x="545" y="162" width="101" height="23" fill="#B4B4B4" /><path d="M646,162 L646,185 L545,185 L549,181 L642,181 L642,166 Z" fill="#C6C6C6"/><path d="M545,162 L646,162 L642,166 L545,166 Z" fill="url(#g17)"/><path d="M545,162 L549,166 L549,181 L545,185 Z" fill="url(#g18)"/><rect x="549" y="166" width="93" height="15" fill="#FBFBFB" /><text x="550.31" y="178" font-family="Liberation Sans" font-size="11" font-weight="normal" fill="#000" text-anchor="start" textLength="59.58" lengthAdjust="spacingAndGlyphs" >ThreePtGain</text><text x="647.51" y="178" font-family="Liberation Sans" font-size="11" font-weight="normal" fill="#000" text-anchor="start" textLength="48.16" lengthAdjust="spacingAndGlyphs" >TestName</text><ellipse cx="557.75" cy="202.5" rx="5.25" ry="11" fill="url(#g15)" stroke="url(#g16)" stroke-width="1" shape-rendering="auto"/><rect x="553" y="201" width="10" height="1" fill="#B4B4B4"/><rect x="553" y="202" width="10" height="1" fill="#E4E4E4"/><path d="M556,199.5 L558,195.5" stroke="#303030" stroke-width="1" shape-rendering="auto"/><path d="M558,195.5 L560,199.5" stroke="#F0F0F0" stroke-width="1" shape-rendering="auto"/><rect x="555" y="205" width="5" height="1" fill="#303030" /><path d="M556,205.5 L557.5,209.5" stroke="#303030" stroke-width="1" shape-rendering="auto"/><path d="M559.5,205.5 L558,209.5" stroke="#F0F0F0" stroke-width="1" shape-rendering="auto"/><rect x="565" y="192" width="84" height="22" fill="#B4B4B4" /><path d="M649,192 L649,214 L565,214 L567,210 L645,210 L645,195 Z" fill="#C6C6C6"/><path d="M565,192 L649,192 L645,195 L565,195 Z" fill="url(#g17)"/><path d="M565,192 L567,195 L567,210 L565,214 Z" fill="url(#g18)"/><rect x="567" y="195" width="78" height="15" fill="#FBFBFB" /><text x="567.4" y="207" font-family="Liberation Sans" font-size="11" font-weight="normal" fill="#000" text-anchor="start" >Linear</text><text x="649.39" y="207" font-family="Liberation Sans" font-size="11" font-weight="normal" fill="#000" text-anchor="start" textLength="52.36" lengthAdjust="spacingAndGlyphs" >Fit method</text><rect x="718" y="150" width="120" height="73" fill="#3E3A44" /><rect x="719" y="151" width="118" height="71" fill="url(#g19)" /><rect x="721" y="154" width="3" height="61" fill="url(#g20)" /><path d="M719,222 L837,222 L831,215 L719,215 Z" fill="url(#g21)" shape-rendering="auto"/><path d="M837,151 L837,222 L831,215 L831,151 Z" fill="url(#g22)" shape-rendering="auto"/><text x="752.04" y="192" font-family="Liberation Sans" font-size="15" font-weight="normal" fill="#000" text-anchor="start" textLength="49.06" lengthAdjust="spacingAndGlyphs" stroke="#000" stroke-width="0.35">START</text><rect x="850" y="149" width="120" height="74" fill="#3E3A44" /><rect x="851" y="150" width="118" height="72" fill="url(#g23)" /><rect x="853" y="153" width="3" height="62" fill="url(#g24)" /><path d="M851,222 L969,222 L963,215 L851,215 Z" fill="url(#g25)" shape-rendering="auto"/><path d="M969,150 L969,222 L963,215 L963,150 Z" fill="url(#g26)" shape-rendering="auto"/><text x="892.84" y="192" font-family="Liberation Sans" font-size="15" font-weight="normal" fill="#000" text-anchor="start" textLength="32.89" lengthAdjust="spacingAndGlyphs" stroke="#000" stroke-width="0.35">END</text><rect x="8" y="247" width="975" height="743" fill="#B6B6B6" /><path d="M8,247 L983,247 L979,251 L12,251 Z" fill="url(#g27)" shape-rendering="auto"/><path d="M8,247 L12,251 L12,986 L8,990 Z" fill="url(#g28)" shape-rendering="auto"/><path d="M983,247 L983,990 L979,986 L979,251 Z" fill="url(#g29)" shape-rendering="auto"/><path d="M8,990 L983,990 L979,986 L12,986 Z" fill="url(#g30)" shape-rendering="auto"/><path d="M10,247 L10,223 Q10,221 12,221 L90,221 Q92,221 92,223 L92,247 Z" fill="#B6B6B6"/><rect x="11" y="221" width="79" height="4" fill="url(#g31)" /><rect x="10" y="222" width="4" height="25" fill="url(#g32)" /><rect x="11" y="222" width="2" height="2" fill="#F0F0F0" /><rect x="88" y="223" width="4" height="24" fill="url(#g33)" /><text x="18.22" y="240" font-family="Liberation Sans" font-size="16" font-weight="normal" fill="#000" text-anchor="start" textLength="65.48" lengthAdjust="spacingAndGlyphs" stroke="#000" stroke-width="0.35">Hybrid 0</text><path d="M180,247 L180,223 Q180,221 182,221 L260,221 Q262,221 262,223 L262,247 Z" fill="#B6B6B6"/><rect x="181" y="221" width="79" height="4" fill="url(#g34)" /><rect x="180" y="222" width="4" height="25" fill="url(#g35)" /><rect x="181" y="222" width="2" height="2" fill="#F0F0F0" /><rect x="258" y="223" width="4" height="24" fill="url(#g36)" /><text x="185.91" y="240" font-family="Liberation Sans" font-size="16" font-weight="normal" fill="#000" text-anchor="start" textLength="65.91" lengthAdjust="spacingAndGlyphs" stroke="#000" stroke-width="0.35">Hybrid 2</text><path d="M262,247 L262,223 Q262,221 264,221 L344,221 Q346,221 346,223 L346,247 Z" fill="#B6B6B6"/><rect x="263" y="221" width="81" height="4" fill="url(#g37)" /><rect x="262" y="222" width="4" height="25" fill="url(#g38)" /><rect x="263" y="222" width="2" height="2" fill="#F0F0F0" /><rect x="342" y="223" width="4" height="24" fill="url(#g39)" /><text x="269.92" y="240" font-family="Liberation Sans" font-size="16" font-weight="normal" fill="#000" text-anchor="start" textLength="66.05" lengthAdjust="spacingAndGlyphs" stroke="#000" stroke-width="0.35">Hybrid 3</text><rect x="92" y="247" width="88" height="5" fill="#B6B6B6" /><path d="M92,251 L92,221 Q92,219 94,219 L178,219 Q180,219 180,221 L180,251 Z" fill="#B6B6B6"/><rect x="93" y="219" width="85" height="4" fill="url(#g40)" /><rect x="92" y="220" width="4" height="31" fill="url(#g41)" /><rect x="93" y="220" width="2" height="2" fill="#F0F0F0" /><rect x="176" y="221" width="4" height="30" fill="url(#g42)" /><text x="100.43" y="238" font-family="Liberation Sans" font-size="16" font-weight="normal" fill="#000" text-anchor="start" textLength="64.26" lengthAdjust="spacingAndGlyphs" stroke="#000" stroke-width="0.35">Hybrid 1</text><rect x="15" y="279" width="953" height="711" fill="#B6B6B6" /><path d="M15,279 L968,279 L964,283 L19,283 Z" fill="url(#g43)" shape-rendering="auto"/><path d="M15,279 L19,283 L19,986 L15,990 Z" fill="url(#g44)" shape-rendering="auto"/><path d="M968,279 L968,990 L964,986 L964,283 Z" fill="url(#g45)" shape-rendering="auto"/><path d="M15,990 L968,990 L964,986 L19,986 Z" fill="url(#g46)" shape-rendering="auto"/><path d="M106,279 L106,260 Q106,258 108,258 L191,258 Q193,258 193,260 L193,279 Z" fill="#B6B6B6"/><rect x="107" y="258" width="84" height="4" fill="url(#g47)" /><rect x="106" y="259" width="4" height="20" fill="url(#g48)" /><rect x="107" y="259" width="2" height="2" fill="#F0F0F0" /><rect x="189" y="260" width="4" height="19" fill="url(#g49)" /><text x="114.06" y="273" font-family="Liberation Sans" font-size="11" font-weight="normal" fill="#000" text-anchor="start" textLength="67.88" lengthAdjust="spacingAndGlyphs" >Overview col1</text><path d="M193,279 L193,260 Q193,258 195,258 L263,258 Q265,258 265,260 L265,279 Z" fill="#B6B6B6"/><rect x="194" y="258" width="69" height="4" fill="url(#g50)" /><rect x="193" y="259" width="4" height="20" fill="url(#g51)" /><rect x="194" y="259" width="2" height="2" fill="#F0F0F0" /><rect x="261" y="260" width="4" height="19" fill="url(#g52)" /><text x="202.49" y="273" font-family="Liberation Sans" font-size="11" font-weight="normal" fill="#000" text-anchor="start" textLength="52.06" lengthAdjust="spacingAndGlyphs" >Gain histos</text><path d="M265,279 L265,260 Q265,258 267,258 L345,258 Q347,258 347,260 L347,279 Z" fill="#B6B6B6"/><rect x="266" y="258" width="79" height="4" fill="url(#g53)" /><rect x="265" y="259" width="4" height="20" fill="url(#g54)" /><rect x="266" y="259" width="2" height="2" fill="#F0F0F0" /><rect x="343" y="260" width="4" height="19" fill="url(#g55)" /><text x="274.24" y="273" font-family="Liberation Sans" font-size="11" font-weight="normal" fill="#000" text-anchor="start" textLength="62.5" lengthAdjust="spacingAndGlyphs" >Offset histos</text><path d="M347,279 L347,260 Q347,258 349,258 L436,258 Q438,258 438,260 L438,279 Z" fill="#B6B6B6"/><rect x="348" y="258" width="88" height="4" fill="url(#g56)" /><rect x="347" y="259" width="4" height="20" fill="url(#g57)" /><rect x="348" y="259" width="2" height="2" fill="#F0F0F0" /><rect x="434" y="260" width="4" height="19" fill="url(#g58)" /><text x="356.7" y="273" font-family="Liberation Sans" font-size="11" font-weight="normal" fill="#000" text-anchor="start" textLength="72.14" lengthAdjust="spacingAndGlyphs" >vt50 vs charge</text><path d="M438,279 L438,260 Q438,258 440,258 L526,258 Q528,258 528,260 L528,279 Z" fill="#B6B6B6"/><rect x="439" y="258" width="87" height="4" fill="url(#g59)" /><rect x="438" y="259" width="4" height="20" fill="url(#g60)" /><rect x="439" y="259" width="2" height="2" fill="#F0F0F0" /><rect x="524" y="260" width="4" height="19" fill="url(#g61)" /><text x="447.93" y="273" font-family="Liberation Sans" font-size="11" font-weight="normal" fill="#000" text-anchor="start" textLength="71.61" lengthAdjust="spacingAndGlyphs" >Gain vs charge</text><path d="M528,279 L528,260 Q528,258 530,258 L657,258 Q659,258 659,260 L659,279 Z" fill="#B6B6B6"/><rect x="529" y="258" width="128" height="4" fill="url(#g62)" /><rect x="528" y="259" width="4" height="20" fill="url(#g63)" /><rect x="529" y="259" width="2" height="2" fill="#F0F0F0" /><rect x="655" y="260" width="4" height="19" fill="url(#g64)" /><text x="538.88" y="273" font-family="Liberation Sans" font-size="11" font-weight="normal" fill="#000" text-anchor="start" textLength="110.8" lengthAdjust="spacingAndGlyphs" >OutputNoise vs charge</text><path d="M659,279 L659,260 Q659,258 661,258 L780,258 Q782,258 782,260 L782,279 Z" fill="#B6B6B6"/><rect x="660" y="258" width="120" height="4" fill="url(#g65)" /><rect x="659" y="259" width="4" height="20" fill="url(#g66)" /><rect x="660" y="259" width="2" height="2" fill="#F0F0F0" /><rect x="778" y="260" width="4" height="19" fill="url(#g67)" /><text x="668.66" y="273" font-family="Liberation Sans" font-size="11" font-weight="normal" fill="#000" text-anchor="start" textLength="103.09" lengthAdjust="spacingAndGlyphs" >InputNoise vs charge</text><rect x="15" y="279" width="91" height="5" fill="#B6B6B6" /><path d="M15,287 L15,258 Q15,256 17,256 L104,256 Q106,256 106,258 L106,287 Z" fill="#B6B6B6"/><rect x="16" y="256" width="88" height="4" fill="url(#g68)" /><rect x="15" y="257" width="4" height="30" fill="url(#g69)" /><rect x="16" y="257" width="2" height="2" fill="#F0F0F0" /><rect x="102" y="258" width="4" height="25" fill="url(#g70)" /><text x="24.16" y="271" font-family="Liberation Sans" font-size="11" font-weight="normal" fill="#000" text-anchor="start" textLength="68.45" lengthAdjust="spacingAndGlyphs" >Overview col0</text><rect x="30" y="297" width="927" height="648" fill="#C6C6C6" /><rect x="34" y="301" width="920" height="160" fill="#C0C0C0" /><rect x="34" y="301" width="13" height="160" fill="#D0D0D0" /><rect x="941" y="301" width="13" height="160" fill="url(#g71)" /><rect x="34" y="301" width="917" height="1" fill="#DCDCDC" /><rect x="34" y="460" width="920" height="1" fill="#8C8C8C" /><rect x="81" y="310" width="849" height="126" fill="#000" /><rect x="930" y="310" width="1" height="127" fill="#E4E4E4" /><rect x="81" y="436" width="850" height="1" fill="#E4E4E4" /><rect x="166" y="310" width="1" height="126" fill="#00FF00" /><rect x="251" y="310" width="1" height="126" fill="#00FF00" /><rect x="335" y="310" width="1" height="126" fill="#00FF00" /><rect x="420" y="310" width="1" height="126" fill="#00FF00" /><rect x="505" y="310" width="1" height="126" fill="#00FF00" /><rect x="590" y="310" width="1" height="126" fill="#00FF00" /><rect x="675" y="310" width="1" height="126" fill="#00FF00" /><rect x="759" y="310" width="1" height="126" fill="#00FF00" /><rect x="844" y="310" width="1" height="126" fill="#00FF00" /><path d="M81,342h1v3h-1zM82,343h1v2h-1zM83,342h1v2h-1zM84,342h1v3h-1zM85,344h1v2h-1zM86,343h1v2h-1zM87,342h1v4h-1zM88,342h1v1h-1zM89,342h1v3h-1zM90,343h1v3h-1zM91,344h1v2h-1zM92,343h1v3h-1zM93,344h1v2h-1zM94,340h1v5h-1zM95,342h1v2h-1zM96,342h1v3h-1zM97,344h1v2h-1zM98,342h1v5h-1zM99,342h1v3h-1zM100,344h1v3h-1zM101,342h1v3h-1zM102,341h1v4h-1zM103,342h1v5h-1zM104,342h1v2h-1zM105,342h1v5h-1zM106,341h1v4h-1zM107,342h1v3h-1zM108,341h1v4h-1zM109,342h1v3h-1zM110,342h1v3h-1zM111,342h1v4h-1zM112,342h1v3h-1zM113,340h1v3h-1zM114,341h1v4h-1zM115,344h1v2h-1zM116,343h1v2h-1zM117,344h1v3h-1zM118,342h1v3h-1zM119,343h1v2h-1zM120,344h1v2h-1zM121,340h1v5h-1zM122,342h1v5h-1zM123,344h1v2h-1zM124,343h1v2h-1zM125,344h1v2h-1zM126,343h1v3h-1zM127,344h1v2h-1zM128,343h1v4h-1zM129,342h1v5h-1zM130,342h1v3h-1zM131,342h1v3h-1zM132,342h1v3h-1zM133,342h1v4h-1zM134,342h1v3h-1zM135,342h1v6h-1zM136,342h1v5h-1zM137,342h1v3h-1zM138,344h1v2h-1zM139,342h1v3h-1zM140,342h1v5h-1zM141,342h1v5h-1zM142,342h1v2h-1zM143,342h1v3h-1zM144,342h1v3h-1zM145,342h1v5h-1zM146,344h1v2h-1zM147,344h1v2h-1zM148,342h1v3h-1zM149,342h1v3h-1zM150,342h1v3h-1zM151,343h1v2h-1zM152,343h1v4h-1zM153,345h1v2h-1zM154,343h1v3h-1zM155,344h1v3h-1zM156,343h1v2h-1zM157,342h1v3h-1zM158,342h1v2h-1zM159,342h1v3h-1zM160,343h1v2h-1zM161,342h1v3h-1zM162,341h1v4h-1zM163,342h1v3h-1zM164,343h1v2h-1zM165,342h1v3h-1zM166,342h1v3h-1zM167,341h1v4h-1zM168,343h1v2h-1zM169,343h1v4h-1zM170,341h1v4h-1zM171,342h1v2h-1zM172,343h1v2h-1zM173,343h1v2h-1zM174,342h1v3h-1zM175,342h1v3h-1zM176,342h1v3h-1zM177,343h1v2h-1zM178,344h1v1h-1zM179,341h1v4h-1zM180,341h1v3h-1zM181,342h1v3h-1zM182,343h1v4h-1zM183,342h1v3h-1zM184,340h1v5h-1zM185,342h1v2h-1zM186,343h1v2h-1zM187,344h1v2h-1zM188,343h1v2h-1zM189,342h1v3h-1zM190,341h1v3h-1zM191,342h1v2h-1zM192,342h1v3h-1zM193,341h1v4h-1zM194,344h1v2h-1zM195,344h1v1h-1zM196,343h1v4h-1zM197,342h1v4h-1zM198,342h1v4h-1zM199,342h1v4h-1zM200,343h1v2h-1zM201,343h1v3h-1zM202,343h1v3h-1zM203,341h1v4h-1zM204,344h1v2h-1zM205,341h1v4h-1zM206,343h1v3h-1zM207,343h1v3h-1zM208,344h1v2h-1zM209,343h1v2h-1zM210,344h1v2h-1zM211,343h1v3h-1zM212,343h1v2h-1zM213,343h1v2h-1zM214,342h1v5h-1zM215,343h1v2h-1zM216,342h1v2h-1zM217,343h1v2h-1zM218,343h1v2h-1zM219,342h1v4h-1zM220,343h1v2h-1zM221,343h1v2h-1zM222,343h1v2h-1zM223,343h1v2h-1zM224,343h1v2h-1zM225,343h1v2h-1zM226,343h1v2h-1zM227,343h1v4h-1zM228,343h1v3h-1zM229,342h1v3h-1zM230,344h1v1h-1zM231,342h1v3h-1zM232,341h1v4h-1zM233,342h1v4h-1zM234,343h1v2h-1zM235,344h1v2h-1zM236,343h1v3h-1zM237,342h1v3h-1zM238,342h1v4h-1zM239,343h1v3h-1zM240,343h1v2h-1zM241,340h1v5h-1zM242,340h1v4h-1zM243,343h1v3h-1zM244,342h1v3h-1zM245,342h1v3h-1zM246,343h1v2h-1zM247,344h1v3h-1zM248,344h1v1h-1zM249,344h1v1h-1zM250,344h1v2h-1zM251,343h1v2h-1zM252,341h1v4h-1zM253,344h1v5h-1zM254,345h1v2h-1zM255,344h1v2h-1zM256,343h1v2h-1zM257,342h1v3h-1zM258,344h1v3h-1zM259,344h1v1h-1zM260,340h1v5h-1zM261,342h1v3h-1zM262,342h1v5h-1zM263,343h1v5h-1zM264,343h1v2h-1zM265,343h1v3h-1zM266,342h1v5h-1zM267,341h1v4h-1zM268,341h1v3h-1zM269,342h1v3h-1zM270,342h1v3h-1zM271,342h1v3h-1zM272,342h1v4h-1zM273,342h1v3h-1zM274,344h1v2h-1zM275,344h1v2h-1zM276,343h1v4h-1zM277,343h1v2h-1zM278,343h1v2h-1zM279,340h1v5h-1zM280,342h1v5h-1zM281,341h1v4h-1zM282,343h1v2h-1zM283,343h1v4h-1zM284,343h1v2h-1zM285,344h1v2h-1zM286,342h1v4h-1zM287,343h1v2h-1zM288,343h1v3h-1zM289,341h1v4h-1zM290,342h1v3h-1zM291,340h1v5h-1zM292,343h1v2h-1zM293,343h1v3h-1zM294,342h1v4h-1zM295,342h1v3h-1zM296,342h1v5h-1zM297,341h1v7h-1zM298,344h1v4h-1zM299,343h1v4h-1zM300,342h1v2h-1zM301,340h1v4h-1zM302,342h1v5h-1zM303,342h1v5h-1zM304,344h1v3h-1zM305,343h1v2h-1zM306,343h1v2h-1zM307,343h1v3h-1zM308,344h1v1h-1zM309,344h1v1h-1zM310,344h1v1h-1zM311,343h1v3h-1zM312,343h1v2h-1zM313,342h1v5h-1zM314,343h1v3h-1zM315,343h1v3h-1zM316,343h1v3h-1zM317,342h1v4h-1zM318,344h1v3h-1zM319,343h1v2h-1zM320,342h1v2h-1zM321,341h1v2h-1zM322,341h1v3h-1zM323,342h1v4h-1zM324,344h1v2h-1zM325,343h1v2h-1zM326,342h1v3h-1zM327,342h1v2h-1zM328,342h1v3h-1zM329,343h1v2h-1zM330,343h1v3h-1zM331,344h1v2h-1zM332,344h1v3h-1zM333,343h1v3h-1zM334,343h1v3h-1zM335,343h1v2h-1zM336,342h1v2h-1zM337,343h1v2h-1zM338,342h1v3h-1zM339,344h1v3h-1zM340,343h1v3h-1zM341,342h1v4h-1zM342,340h1v5h-1zM343,342h1v4h-1zM344,343h1v2h-1zM345,344h1v2h-1zM346,342h1v3h-1zM347,344h1v2h-1zM348,342h1v3h-1zM349,340h1v5h-1zM350,342h1v3h-1zM351,344h1v3h-1zM352,341h1v6h-1zM353,342h1v4h-1zM354,343h1v3h-1zM355,343h1v4h-1zM356,342h1v3h-1zM357,344h1v2h-1zM358,343h1v3h-1zM359,341h1v3h-1zM360,342h1v3h-1zM361,343h1v3h-1zM362,344h1v2h-1zM363,344h1v2h-1zM364,344h1v2h-1zM365,342h1v3h-1zM366,343h1v3h-1zM367,343h1v2h-1zM368,344h1v1h-1zM369,342h1v3h-1zM370,342h1v3h-1zM371,344h1v2h-1zM372,342h1v3h-1zM373,342h1v4h-1zM374,341h1v4h-1zM375,343h1v2h-1zM376,343h1v3h-1zM377,342h1v3h-1zM378,343h1v3h-1zM379,343h1v4h-1zM380,344h1v2h-1zM381,343h1v2h-1zM382,342h1v3h-1zM383,342h1v3h-1zM384,342h1v3h-1zM385,343h1v2h-1zM386,343h1v4h-1zM387,341h1v3h-1zM388,342h1v3h-1zM389,344h1v1h-1zM390,343h1v2h-1zM391,343h1v3h-1zM392,344h1v3h-1zM393,344h1v3h-1zM394,343h1v2h-1zM395,344h1v2h-1zM396,344h1v2h-1zM397,344h1v1h-1zM398,343h1v5h-1zM399,344h1v3h-1zM400,342h1v3h-1zM401,341h1v4h-1zM402,344h1v3h-1zM403,343h1v3h-1zM404,343h1v2h-1zM405,342h1v2h-1zM406,343h1v4h-1zM407,344h1v2h-1zM408,343h1v3h-1zM409,343h1v1h-1zM410,343h1v2h-1zM411,342h1v2h-1zM412,342h1v3h-1zM413,341h1v3h-1zM414,342h1v2h-1zM415,343h1v3h-1zM416,343h1v2h-1zM417,343h1v4h-1zM418,342h1v4h-1zM419,344h1v3h-1zM420,343h1v5h-1zM421,344h1v2h-1zM422,344h1v2h-1zM423,343h1v2h-1zM424,343h1v4h-1zM425,344h1v3h-1zM426,344h1v2h-1zM427,342h1v4h-1zM428,342h1v3h-1zM429,344h1v1h-1zM430,344h1v4h-1zM431,342h1v5h-1zM432,342h1v4h-1zM433,343h1v3h-1zM434,344h1v1h-1zM435,342h1v3h-1zM436,343h1v3h-1zM437,344h1v3h-1zM438,344h1v2h-1zM439,342h1v3h-1zM440,343h1v3h-1zM441,342h1v5h-1zM442,342h1v6h-1zM443,343h1v2h-1zM444,343h1v4h-1zM445,342h1v3h-1zM446,343h1v3h-1zM447,344h1v3h-1zM448,342h1v3h-1zM449,343h1v4h-1zM450,344h1v3h-1zM451,343h1v3h-1zM452,342h1v4h-1zM453,342h1v3h-1zM454,344h1v3h-1zM455,343h1v3h-1zM456,344h1v1h-1zM457,343h1v2h-1zM458,343h1v3h-1zM459,343h1v3h-1zM460,343h1v3h-1zM461,344h1v2h-1zM462,344h1v1h-1zM463,342h1v3h-1zM464,342h1v4h-1zM465,344h1v3h-1zM466,343h1v3h-1zM467,342h1v4h-1zM468,344h1v3h-1zM469,344h1v3h-1zM470,343h1v3h-1zM471,343h1v2h-1zM472,343h1v2h-1zM473,344h1v2h-1zM474,342h1v4h-1zM475,342h1v5h-1zM476,342h1v5h-1zM477,344h1v2h-1zM478,344h1v3h-1zM479,344h1v2h-1zM480,344h1v2h-1zM481,344h1v4h-1zM482,343h1v4h-1zM483,344h1v2h-1zM484,344h1v3h-1zM485,342h1v3h-1zM486,343h1v2h-1zM487,343h1v2h-1zM488,342h1v3h-1zM489,343h1v3h-1zM490,342h1v5h-1zM491,344h1v3h-1zM492,344h1v2h-1zM493,342h1v4h-1zM494,344h1v2h-1zM495,343h1v3h-1zM496,344h1v3h-1zM497,342h1v3h-1zM498,343h1v2h-1zM499,343h1v3h-1zM500,344h1v3h-1zM501,344h1v3h-1zM502,342h1v4h-1zM503,341h1v4h-1zM504,342h1v5h-1zM505,343h1v4h-1zM506,342h1v4h-1zM507,342h1v5h-1zM508,342h1v5h-1zM509,344h1v2h-1zM510,343h1v2h-1zM511,342h1v5h-1zM512,344h1v2h-1zM513,343h1v3h-1zM514,340h1v6h-1zM515,342h1v4h-1zM516,343h1v2h-1zM517,343h1v2h-1zM518,343h1v2h-1zM519,342h1v3h-1zM520,343h1v3h-1zM521,344h1v2h-1zM522,344h1v4h-1zM523,342h1v5h-1zM524,344h1v2h-1zM525,342h1v3h-1zM526,342h1v3h-1zM527,344h1v1h-1zM528,343h1v2h-1zM529,342h1v2h-1zM530,343h1v2h-1zM531,344h1v2h-1zM532,344h1v2h-1zM533,343h1v3h-1zM534,344h1v4h-1zM535,343h1v3h-1zM536,343h1v3h-1zM537,345h1v3h-1zM538,343h1v3h-1zM539,344h1v2h-1zM540,342h1v4h-1zM541,344h1v2h-1zM542,343h1v3h-1zM543,344h1v2h-1zM544,343h1v2h-1zM545,343h1v2h-1zM546,344h1v2h-1zM547,343h1v2h-1zM548,342h1v3h-1zM549,344h1v4h-1zM550,342h1v3h-1zM551,343h1v2h-1zM552,344h1v1h-1zM553,343h1v2h-1zM554,342h1v4h-1zM555,343h1v3h-1zM556,342h1v3h-1zM557,344h1v2h-1zM558,343h1v2h-1zM559,343h1v2h-1zM560,342h1v4h-1zM561,343h1v3h-1zM562,344h1v2h-1zM563,343h1v5h-1zM564,343h1v4h-1zM565,341h1v4h-1zM566,342h1v3h-1zM567,342h1v2h-1zM568,342h1v2h-1zM569,343h1v2h-1zM570,343h1v3h-1zM571,344h1v1h-1zM572,344h1v1h-1zM573,342h1v4h-1zM574,342h1v5h-1zM575,344h1v3h-1zM576,344h1v3h-1zM577,343h1v2h-1zM578,344h1v4h-1zM579,343h1v4h-1zM580,343h1v3h-1zM581,342h1v2h-1zM582,342h1v4h-1zM583,343h1v3h-1zM584,343h1v5h-1zM585,344h1v2h-1zM586,344h1v2h-1zM587,344h1v2h-1zM588,343h1v2h-1zM589,343h1v2h-1zM590,344h1v2h-1zM591,343h1v3h-1zM592,342h1v5h-1zM593,342h1v4h-1zM594,344h1v2h-1zM595,343h1v2h-1zM596,344h1v2h-1zM597,344h1v2h-1zM598,342h1v4h-1zM599,343h1v3h-1zM600,342h1v4h-1zM601,343h1v3h-1zM602,343h1v2h-1zM603,344h1v3h-1zM604,344h1v3h-1zM605,344h1v4h-1zM606,342h1v3h-1zM607,343h1v3h-1zM608,344h1v3h-1zM609,342h1v3h-1zM610,343h1v3h-1zM611,344h1v2h-1zM612,344h1v1h-1zM613,344h1v2h-1zM614,342h1v3h-1zM615,342h1v3h-1zM616,344h1v2h-1zM617,342h1v3h-1zM618,344h1v2h-1zM619,343h1v2h-1zM620,344h1v3h-1zM621,344h1v3h-1zM622,343h1v3h-1zM623,342h1v4h-1zM624,345h1v4h-1zM625,344h1v2h-1zM626,344h1v3h-1zM627,344h1v3h-1zM628,344h1v2h-1zM629,344h1v1h-1zM630,343h1v3h-1zM631,342h1v4h-1zM632,342h1v3h-1zM633,344h1v3h-1zM634,345h1v2h-1zM635,344h1v3h-1zM636,342h1v3h-1zM637,342h1v6h-1zM638,342h1v3h-1zM639,343h1v2h-1zM640,343h1v2h-1zM641,341h1v3h-1zM642,342h1v4h-1zM643,344h1v1h-1zM644,343h1v3h-1zM645,342h1v3h-1zM646,343h1v3h-1zM647,344h1v2h-1zM648,344h1v2h-1zM649,344h1v2h-1zM650,342h1v3h-1zM651,342h1v3h-1zM652,343h1v2h-1zM653,344h1v3h-1zM654,343h1v4h-1zM655,342h1v5h-1zM656,343h1v3h-1zM657,343h1v4h-1zM658,345h1v2h-1zM659,345h1v1h-1zM660,344h1v2h-1zM661,344h1v3h-1zM662,344h1v3h-1zM663,342h1v4h-1zM664,344h1v2h-1zM665,343h1v2h-1zM666,343h1v3h-1zM667,342h1v6h-1zM668,342h1v3h-1zM669,342h1v3h-1zM670,343h1v2h-1zM671,343h1v2h-1zM672,343h1v4h-1zM673,344h1v3h-1zM674,345h1v2h-1zM675,344h1v2h-1zM676,344h1v1h-1zM677,343h1v3h-1zM678,344h1v1h-1zM679,344h1v2h-1zM680,345h1v1h-1zM681,343h1v3h-1zM682,342h1v4h-1zM683,344h1v2h-1zM684,344h1v3h-1zM685,344h1v5h-1zM686,344h1v1h-1zM687,344h1v2h-1zM688,343h1v2h-1zM689,344h1v1h-1zM690,343h1v3h-1zM691,344h1v2h-1zM692,345h1v1h-1zM693,344h1v2h-1zM694,344h1v2h-1zM695,343h1v3h-1zM696,344h1v1h-1zM697,343h1v2h-1zM698,342h1v4h-1zM699,340h1v5h-1zM700,344h1v3h-1zM701,346h1v2h-1zM702,344h1v3h-1zM703,344h1v3h-1zM704,342h1v3h-1zM705,344h1v2h-1zM706,343h1v2h-1zM707,343h1v4h-1zM708,343h1v2h-1zM709,344h1v1h-1zM710,343h1v3h-1zM711,342h1v3h-1zM712,344h1v2h-1zM713,344h1v1h-1zM714,342h1v3h-1zM715,342h1v5h-1zM716,342h1v5h-1zM717,343h1v2h-1zM718,344h1v2h-1zM719,342h1v5h-1zM720,341h1v5h-1zM721,342h1v4h-1zM722,345h1v2h-1zM723,344h1v3h-1zM724,345h1v2h-1zM725,345h1v2h-1zM726,345h1v2h-1zM727,344h1v3h-1zM728,344h1v1h-1zM729,342h1v3h-1zM730,344h1v2h-1zM731,344h1v2h-1zM732,343h1v4h-1zM733,343h1v4h-1zM734,344h1v3h-1zM735,344h1v3h-1zM736,344h1v2h-1zM737,344h1v1h-1zM738,342h1v4h-1zM739,344h1v3h-1zM740,342h1v3h-1zM741,343h1v3h-1zM742,344h1v2h-1zM743,342h1v4h-1zM744,342h1v4h-1zM745,343h1v2h-1zM746,344h1v3h-1zM747,343h1v3h-1zM748,343h1v4h-1zM749,344h1v2h-1zM750,344h1v3h-1zM751,342h1v3h-1zM752,342h1v4h-1zM753,341h1v4h-1zM754,343h1v3h-1zM755,342h1v3h-1zM756,344h1v2h-1zM757,343h1v2h-1zM758,343h1v2h-1zM759,343h1v3h-1zM760,341h1v4h-1zM761,344h1v1h-1zM762,344h1v3h-1zM763,344h1v4h-1zM764,345h1v2h-1zM765,344h1v3h-1zM766,342h1v4h-1zM767,344h1v4h-1zM768,344h1v2h-1zM769,344h1v3h-1zM770,344h1v2h-1zM771,344h1v3h-1zM772,343h1v3h-1zM773,342h1v4h-1zM774,342h1v4h-1zM775,344h1v2h-1zM776,344h1v3h-1zM777,343h1v3h-1zM778,343h1v4h-1zM779,345h1v4h-1zM780,342h1v4h-1zM781,343h1v2h-1zM782,343h1v3h-1zM783,344h1v2h-1zM784,343h1v2h-1zM785,344h1v2h-1zM786,343h1v2h-1zM787,343h1v4h-1zM788,343h1v4h-1zM789,344h1v1h-1zM790,343h1v3h-1zM791,344h1v3h-1zM792,344h1v2h-1zM793,344h1v2h-1zM794,343h1v3h-1zM795,343h1v2h-1zM796,343h1v1h-1zM797,343h1v3h-1zM798,344h1v2h-1zM799,343h1v3h-1zM800,343h1v4h-1zM801,343h1v4h-1zM802,341h1v4h-1zM803,342h1v3h-1zM804,343h1v3h-1zM805,343h1v2h-1zM806,343h1v3h-1zM807,343h1v2h-1zM808,343h1v2h-1zM809,340h1v7h-1zM810,344h1v4h-1zM811,344h1v3h-1zM812,344h1v4h-1zM813,344h1v3h-1zM814,344h1v4h-1zM815,342h1v3h-1zM816,344h1v2h-1zM817,344h1v2h-1zM818,344h1v2h-1zM819,344h1v3h-1zM820,343h1v4h-1zM821,344h1v1h-1zM822,344h1v3h-1zM823,344h1v3h-1zM824,344h1v2h-1zM825,344h1v2h-1zM826,344h1v1h-1zM827,344h1v3h-1zM828,343h1v5h-1zM829,342h1v4h-1zM830,344h1v1h-1zM831,344h1v1h-1zM832,344h1v5h-1zM833,344h1v3h-1zM834,345h1v2h-1zM835,344h1v3h-1zM836,344h1v2h-1zM837,343h1v3h-1zM838,345h1v2h-1zM839,345h1v2h-1zM840,343h1v4h-1zM841,344h1v3h-1zM842,344h1v3h-1zM843,343h1v4h-1zM844,344h1v3h-1zM845,342h1v3h-1zM846,342h1v5h-1zM847,346h1v4h-1zM848,345h1v2h-1zM849,345h1v2h-1zM850,346h1v1h-1zM851,343h1v4h-1zM852,343h1v4h-1zM853,343h1v4h-1zM854,344h1v2h-1zM855,345h1v2h-1zM856,344h1v3h-1zM857,344h1v3h-1zM858,344h1v2h-1zM859,345h1v1h-1zM860,344h1v2h-1zM861,342h1v3h-1zM862,343h1v3h-1zM863,345h1v1h-1zM864,344h1v2h-1zM865,344h1v3h-1zM866,342h1v3h-1zM867,342h1v4h-1zM868,344h1v2h-1zM869,344h1v3h-1zM870,343h1v4h-1zM871,345h1v2h-1zM872,344h1v3h-1zM873,344h1v2h-1zM874,344h1v3h-1zM875,344h1v4h-1zM876,342h1v4h-1zM877,344h1v4h-1zM878,343h1v2h-1zM879,343h1v4h-1zM880,342h1v3h-1zM881,343h1v3h-1zM882,343h1v2h-1zM883,343h1v3h-1zM884,344h1v3h-1zM885,342h1v4h-1zM886,344h1v2h-1zM887,343h1v3h-1zM888,343h1v3h-1zM889,344h1v2h-1zM890,342h1v4h-1zM891,343h1v2h-1zM892,344h1v3h-1zM893,343h1v3h-1zM894,342h1v3h-1zM895,342h1v2h-1zM896,342h1v3h-1zM897,342h1v3h-1zM898,344h1v2h-1zM899,344h1v2h-1zM900,343h1v4h-1zM901,344h1v2h-1zM902,342h1v3h-1zM903,343h1v4h-1zM904,343h1v3h-1zM905,343h1v3h-1zM906,343h1v3h-1zM907,343h1v3h-1zM908,344h1v4h-1zM909,344h1v2h-1zM910,345h1v1h-1zM911,344h1v2h-1zM912,343h1v2h-1zM913,343h1v2h-1zM914,343h1v2h-1zM915,344h1v1h-1zM916,343h1v2h-1zM917,343h1v3h-1zM918,344h1v3h-1zM919,344h1v2h-1zM920,344h1v2h-1zM921,344h1v3h-1zM922,343h1v4h-1zM923,342h1v2h-1zM924,342h1v6h-1zM925,344h1v3h-1zM926,344h1v1h-1zM927,344h1v2h-1zM928,343h1v3h-1zM929,342h1v4h-1z" fill="#FF00D2"/><rect x="74" y="435" width="5" height="1" fill="#000" /><text x="71" y="439" font-family="Liberation Sans" font-size="11" font-weight="normal" fill="#000" text-anchor="end" >0</text><rect x="74" y="414" width="5" height="1" fill="#000" /><text x="71" y="418" font-family="Liberation Sans" font-size="11" font-weight="normal" fill="#000" text-anchor="end" >25</text><rect x="74" y="394" width="5" height="1" fill="#000" /><text x="71" y="398" font-family="Liberation Sans" font-size="11" font-weight="normal" fill="#000" text-anchor="end" >50</text><rect x="74" y="373" width="5" height="1" fill="#000" /><text x="71" y="377" font-family="Liberation Sans" font-size="11" font-weight="normal" fill="#000" text-anchor="end" >75</text><rect x="74" y="352" width="5" height="1" fill="#000" /><text x="71" y="356" font-family="Liberation Sans" font-size="11" font-weight="normal" fill="#000" text-anchor="end" >100</text><rect x="74" y="332" width="5" height="1" fill="#000" /><text x="71" y="336" font-family="Liberation Sans" font-size="11" font-weight="normal" fill="#000" text-anchor="end" >125</text><rect x="74" y="311" width="5" height="1" fill="#000" /><text x="71" y="315" font-family="Liberation Sans" font-size="11" font-weight="normal" fill="#000" text-anchor="end" >150</text><rect x="81" y="438" width="1" height="5" fill="#000" /><text x="81.5" y="454" font-family="Liberation Sans" font-size="11" font-weight="normal" fill="#000" text-anchor="middle" >0</text><rect x="88" y="438" width="1" height="3" fill="#000" /><rect x="94" y="438" width="1" height="3" fill="#000" /><rect x="101" y="438" width="1" height="3" fill="#000" /><rect x="107" y="438" width="1" height="3" fill="#000" /><rect x="114" y="438" width="1" height="3" fill="#000" /><rect x="120" y="438" width="1" height="3" fill="#000" /><rect x="127" y="438" width="1" height="3" fill="#000" /><rect x="133" y="438" width="1" height="3" fill="#000" /><rect x="140" y="438" width="1" height="3" fill="#000" /><rect x="146" y="438" width="1" height="3" fill="#000" /><rect x="153" y="438" width="1" height="3" fill="#000" /><rect x="159" y="438" width="1" height="3" fill="#000" /><rect x="166" y="438" width="1" height="5" fill="#000" /><text x="166.5" y="454" font-family="Liberation Sans" font-size="11" font-weight="normal" fill="#000" text-anchor="middle" >128</text><rect x="172" y="438" width="1" height="3" fill="#000" /><rect x="179" y="438" width="1" height="3" fill="#000" /><rect x="185" y="438" width="1" height="3" fill="#000" /><rect x="192" y="438" width="1" height="3" fill="#000" /><rect x="198" y="438" width="1" height="3" fill="#000" /><rect x="205" y="438" width="1" height="3" fill="#000" /><rect x="211" y="438" width="1" height="3" fill="#000" /><rect x="218" y="438" width="1" height="3" fill="#000" /><rect x="225" y="438" width="1" height="3" fill="#000" /><rect x="231" y="438" width="1" height="3" fill="#000" /><rect x="238" y="438" width="1" height="3" fill="#000" /><rect x="244" y="438" width="1" height="3" fill="#000" /><rect x="251" y="438" width="1" height="5" fill="#000" /><text x="251.5" y="454" font-family="Liberation Sans" font-size="11" font-weight="normal" fill="#000" text-anchor="middle" >256</text><rect x="257" y="438" width="1" height="3" fill="#000" /><rect x="264" y="438" width="1" height="3" fill="#000" /><rect x="270" y="438" width="1" height="3" fill="#000" /><rect x="277" y="438" width="1" height="3" fill="#000" /><rect x="283" y="438" width="1" height="3" fill="#000" /><rect x="290" y="438" width="1" height="3" fill="#000" /><rect x="296" y="438" width="1" height="3" fill="#000" /><rect x="303" y="438" width="1" height="3" fill="#000" /><rect x="309" y="438" width="1" height="3" fill="#000" /><rect x="316" y="438" width="1" height="3" fill="#000" /><rect x="322" y="438" width="1" height="3" fill="#000" /><rect x="329" y="438" width="1" height="3" fill="#000" /><rect x="335" y="438" width="1" height="5" fill="#000" /><text x="335.5" y="454" font-family="Liberation Sans" font-size="11" font-weight="normal" fill="#000" text-anchor="middle" >384</text><rect x="342" y="438" width="1" height="3" fill="#000" /><rect x="348" y="438" width="1" height="3" fill="#000" /><rect x="355" y="438" width="1" height="3" fill="#000" /><rect x="361" y="438" width="1" height="3" fill="#000" /><rect x="368" y="438" width="1" height="3" fill="#000" /><rect x="375" y="438" width="1" height="3" fill="#000" /><rect x="381" y="438" width="1" height="3" fill="#000" /><rect x="388" y="438" width="1" height="3" fill="#000" /><rect x="394" y="438" width="1" height="3" fill="#000" /><rect x="401" y="438" width="1" height="3" fill="#000" /><rect x="407" y="438" width="1" height="3" fill="#000" /><rect x="414" y="438" width="1" height="3" fill="#000" /><rect x="420" y="438" width="1" height="5" fill="#000" /><text x="420.5" y="454" font-family="Liberation Sans" font-size="11" font-weight="normal" fill="#000" text-anchor="middle" >512</text><rect x="427" y="438" width="1" height="3" fill="#000" /><rect x="433" y="438" width="1" height="3" fill="#000" /><rect x="440" y="438" width="1" height="3" fill="#000" /><rect x="446" y="438" width="1" height="3" fill="#000" /><rect x="453" y="438" width="1" height="3" fill="#000" /><rect x="459" y="438" width="1" height="3" fill="#000" /><rect x="466" y="438" width="1" height="3" fill="#000" /><rect x="472" y="438" width="1" height="3" fill="#000" /><rect x="479" y="438" width="1" height="3" fill="#000" /><rect x="485" y="438" width="1" height="3" fill="#000" /><rect x="492" y="438" width="1" height="3" fill="#000" /><rect x="498" y="438" width="1" height="3" fill="#000" /><rect x="505" y="438" width="1" height="5" fill="#000" /><text x="505.5" y="454" font-family="Liberation Sans" font-size="11" font-weight="normal" fill="#000" text-anchor="middle" >640</text><rect x="512" y="438" width="1" height="3" fill="#000" /><rect x="518" y="438" width="1" height="3" fill="#000" /><rect x="525" y="438" width="1" height="3" fill="#000" /><rect x="531" y="438" width="1" height="3" fill="#000" /><rect x="538" y="438" width="1" height="3" fill="#000" /><rect x="544" y="438" width="1" height="3" fill="#000" /><rect x="551" y="438" width="1" height="3" fill="#000" /><rect x="557" y="438" width="1" height="3" fill="#000" /><rect x="564" y="438" width="1" height="3" fill="#000" /><rect x="570" y="438" width="1" height="3" fill="#000" /><rect x="577" y="438" width="1" height="3" fill="#000" /><rect x="583" y="438" width="1" height="3" fill="#000" /><rect x="590" y="438" width="1" height="5" fill="#000" /><text x="590.5" y="454" font-family="Liberation Sans" font-size="11" font-weight="normal" fill="#000" text-anchor="middle" >768</text><rect x="596" y="438" width="1" height="3" fill="#000" /><rect x="603" y="438" width="1" height="3" fill="#000" /><rect x="609" y="438" width="1" height="3" fill="#000" /><rect x="616" y="438" width="1" height="3" fill="#000" /><rect x="622" y="438" width="1" height="3" fill="#000" /><rect x="629" y="438" width="1" height="3" fill="#000" /><rect x="635" y="438" width="1" height="3" fill="#000" /><rect x="642" y="438" width="1" height="3" fill="#000" /><rect x="649" y="438" width="1" height="3" fill="#000" /><rect x="655" y="438" width="1" height="3" fill="#000" /><rect x="662" y="438" width="1" height="3" fill="#000" /><rect x="668" y="438" width="1" height="3" fill="#000" /><rect x="675" y="438" width="1" height="5" fill="#000" /><text x="675.5" y="454" font-family="Liberation Sans" font-size="11" font-weight="normal" fill="#000" text-anchor="middle" >896</text><rect x="681" y="438" width="1" height="3" fill="#000" /><rect x="688" y="438" width="1" height="3" fill="#000" /><rect x="694" y="438" width="1" height="3" fill="#000" /><rect x="701" y="438" width="1" height="3" fill="#000" /><rect x="707" y="438" width="1" height="3" fill="#000" /><rect x="714" y="438" width="1" height="3" fill="#000" /><rect x="720" y="438" width="1" height="3" fill="#000" /><rect x="727" y="438" width="1" height="3" fill="#000" /><rect x="733" y="438" width="1" height="3" fill="#000" /><rect x="740" y="438" width="1" height="3" fill="#000" /><rect x="746" y="438" width="1" height="3" fill="#000" /><rect x="753" y="438" width="1" height="3" fill="#000" /><rect x="759" y="438" width="1" height="5" fill="#000" /><text x="759.5" y="454" font-family="Liberation Sans" font-size="11" font-weight="normal" fill="#000" text-anchor="middle" >1024</text><rect x="766" y="438" width="1" height="3" fill="#000" /><rect x="772" y="438" width="1" height="3" fill="#000" /><rect x="779" y="438" width="1" height="3" fill="#000" /><rect x="785" y="438" width="1" height="3" fill="#000" /><rect x="792" y="438" width="1" height="3" fill="#000" /><rect x="799" y="438" width="1" height="3" fill="#000" /><rect x="805" y="438" width="1" height="3" fill="#000" /><rect x="812" y="438" width="1" height="3" fill="#000" /><rect x="818" y="438" width="1" height="3" fill="#000" /><rect x="825" y="438" width="1" height="3" fill="#000" /><rect x="831" y="438" width="1" height="3" fill="#000" /><rect x="838" y="438" width="1" height="3" fill="#000" /><rect x="844" y="438" width="1" height="5" fill="#000" /><text x="844.5" y="454" font-family="Liberation Sans" font-size="11" font-weight="normal" fill="#000" text-anchor="middle" >1152</text><rect x="851" y="438" width="1" height="3" fill="#000" /><rect x="857" y="438" width="1" height="3" fill="#000" /><rect x="864" y="438" width="1" height="3" fill="#000" /><rect x="870" y="438" width="1" height="3" fill="#000" /><rect x="877" y="438" width="1" height="3" fill="#000" /><rect x="883" y="438" width="1" height="3" fill="#000" /><rect x="890" y="438" width="1" height="3" fill="#000" /><rect x="896" y="438" width="1" height="3" fill="#000" /><rect x="903" y="438" width="1" height="3" fill="#000" /><rect x="909" y="438" width="1" height="3" fill="#000" /><rect x="916" y="438" width="1" height="3" fill="#000" /><rect x="922" y="438" width="1" height="3" fill="#000" /><rect x="929" y="438" width="1" height="5" fill="#000" /><text x="929.5" y="454" font-family="Liberation Sans" font-size="11" font-weight="normal" fill="#000" text-anchor="middle" >1280</text><text x="0" y="0" font-family="Liberation Sans" font-size="11" font-weight="normal" fill="#000" text-anchor="middle" textLength="60" lengthAdjust="spacingAndGlyphs" transform="translate(49,370.0) rotate(-90)">Gain (mV/fC)</text><rect x="34" y="461" width="920" height="160" fill="#C0C0C0" /><rect x="34" y="461" width="13" height="160" fill="#D0D0D0" /><rect x="941" y="461" width="13" height="160" fill="url(#g72)" /><rect x="34" y="461" width="917" height="1" fill="#DCDCDC" /><rect x="34" y="620" width="920" height="1" fill="#8C8C8C" /><rect x="79" y="470" width="851" height="126" fill="#000" /><rect x="930" y="470" width="1" height="127" fill="#E4E4E4" /><rect x="79" y="596" width="852" height="1" fill="#E4E4E4" /><rect x="164" y="470" width="1" height="126" fill="#00FF00" /><rect x="249" y="470" width="1" height="126" fill="#00FF00" /><rect x="334" y="470" width="1" height="126" fill="#00FF00" /><rect x="419" y="470" width="1" height="126" fill="#00FF00" /><rect x="504" y="470" width="1" height="126" fill="#00FF00" /><rect x="589" y="470" width="1" height="126" fill="#00FF00" /><rect x="674" y="470" width="1" height="126" fill="#00FF00" /><rect x="759" y="470" width="1" height="126" fill="#00FF00" /><rect x="844" y="470" width="1" height="126" fill="#00FF00" /><path d="M79,489h1v15h-1zM80,503h1v24h-1zM81,495h1v34h-1zM82,524h1v35h-1zM83,524h1v3h-1zM84,517h1v11h-1zM85,502h1v22h-1zM86,508h1v25h-1zM87,488h1v29h-1zM88,496h1v22h-1zM89,505h1v10h-1zM90,509h1v7h-1zM91,496h1v17h-1zM92,498h1v43h-1zM93,506h1v24h-1zM94,501h1v6h-1zM95,504h1v10h-1zM96,507h1v37h-1zM97,498h1v33h-1zM98,518h1v25h-1zM99,497h1v22h-1zM100,502h1v15h-1zM101,500h1v45h-1zM102,524h1v15h-1zM103,518h1v11h-1zM104,514h1v5h-1zM105,492h1v27h-1zM106,508h1v19h-1zM107,511h1v12h-1zM108,518h1v8h-1zM109,499h1v26h-1zM110,492h1v12h-1zM111,503h1v16h-1zM112,505h1v20h-1zM113,503h1v18h-1zM114,516h1v34h-1zM115,516h1v17h-1zM116,503h1v14h-1zM117,512h1v31h-1zM118,492h1v59h-1zM119,510h1v19h-1zM120,516h1v14h-1zM121,502h1v15h-1zM122,494h1v32h-1zM123,501h1v37h-1zM124,505h1v20h-1zM125,491h1v24h-1zM126,508h1v24h-1zM127,505h1v24h-1zM128,501h1v21h-1zM129,501h1v32h-1zM130,497h1v39h-1zM131,495h1v27h-1zM132,482h1v35h-1zM133,512h1v11h-1zM134,502h1v45h-1zM135,506h1v35h-1zM136,490h1v49h-1zM137,522h1v17h-1zM138,513h1v22h-1zM139,501h1v54h-1zM140,513h1v13h-1zM141,517h1v12h-1zM142,512h1v21h-1zM143,505h1v14h-1zM144,514h1v10h-1zM145,511h1v17h-1zM146,514h1v13h-1zM147,511h1v12h-1zM148,516h1v9h-1zM149,520h1v17h-1zM150,504h1v17h-1zM151,498h1v15h-1zM152,487h1v32h-1zM153,518h1v15h-1zM154,505h1v16h-1zM155,497h1v20h-1zM156,504h1v32h-1zM157,504h1v29h-1zM158,510h1v31h-1zM159,518h1v15h-1zM160,504h1v18h-1zM161,521h1v9h-1zM162,503h1v23h-1zM163,512h1v23h-1zM164,510h1v19h-1zM165,491h1v25h-1zM166,498h1v27h-1zM167,520h1v21h-1zM168,512h1v32h-1zM169,481h1v41h-1zM170,521h1v18h-1zM171,509h1v35h-1zM172,516h1v17h-1zM173,495h1v40h-1zM174,510h1v17h-1zM175,514h1v10h-1zM176,513h1v18h-1zM177,508h1v36h-1zM178,501h1v17h-1zM179,517h1v15h-1zM180,511h1v23h-1zM181,508h1v26h-1zM182,492h1v33h-1zM183,518h1v19h-1zM184,501h1v27h-1zM185,521h1v25h-1zM186,518h1v21h-1zM187,520h1v24h-1zM188,488h1v33h-1zM189,511h1v25h-1zM190,499h1v20h-1zM191,476h1v43h-1zM192,498h1v29h-1zM193,520h1v12h-1zM194,508h1v27h-1zM195,515h1v36h-1zM196,511h1v9h-1zM197,519h1v21h-1zM198,518h1v24h-1zM199,524h1v15h-1zM200,511h1v22h-1zM201,508h1v29h-1zM202,514h1v19h-1zM203,531h1v18h-1zM204,508h1v29h-1zM205,495h1v26h-1zM206,520h1v5h-1zM207,509h1v18h-1zM208,514h1v22h-1zM209,512h1v38h-1zM210,510h1v46h-1zM211,520h1v21h-1zM212,528h1v9h-1zM213,523h1v19h-1zM214,512h1v12h-1zM215,508h1v26h-1zM216,505h1v17h-1zM217,514h1v13h-1zM218,514h1v14h-1zM219,502h1v16h-1zM220,491h1v30h-1zM221,520h1v17h-1zM222,504h1v27h-1zM223,511h1v22h-1zM224,514h1v26h-1zM225,524h1v10h-1zM226,516h1v15h-1zM227,511h1v14h-1zM228,503h1v18h-1zM229,514h1v11h-1zM230,512h1v19h-1zM231,499h1v21h-1zM232,510h1v17h-1zM233,516h1v21h-1zM234,515h1v17h-1zM235,516h1v5h-1zM236,507h1v12h-1zM237,508h1v20h-1zM238,499h1v28h-1zM239,518h1v9h-1zM240,515h1v12h-1zM241,510h1v17h-1zM242,526h1v7h-1zM243,502h1v33h-1zM244,506h1v19h-1zM245,514h1v17h-1zM246,516h1v17h-1zM247,514h1v23h-1zM248,509h1v14h-1zM249,520h1v29h-1zM250,547h1v18h-1zM251,564h1v17h-1zM252,548h1v31h-1zM253,545h1v13h-1zM254,554h1v21h-1zM255,547h1v14h-1zM256,558h1v15h-1zM257,543h1v20h-1zM258,562h1v7h-1zM259,553h1v10h-1zM260,545h1v32h-1zM261,542h1v38h-1zM262,530h1v15h-1zM263,544h1v16h-1zM264,543h1v14h-1zM265,544h1v25h-1zM266,547h1v13h-1zM267,532h1v25h-1zM268,524h1v36h-1zM269,550h1v9h-1zM270,545h1v22h-1zM271,543h1v15h-1zM272,541h1v15h-1zM273,542h1v13h-1zM274,543h1v16h-1zM275,524h1v22h-1zM276,525h1v26h-1zM277,549h1v4h-1zM278,552h1v4h-1zM279,551h1v20h-1zM280,532h1v20h-1zM281,535h1v24h-1zM282,541h1v8h-1zM283,542h1v20h-1zM284,535h1v46h-1zM285,544h1v13h-1zM286,535h1v30h-1zM287,529h1v25h-1zM288,540h1v15h-1zM289,524h1v17h-1zM290,536h1v14h-1zM291,533h1v16h-1zM292,548h1v7h-1zM293,550h1v13h-1zM294,540h1v17h-1zM295,504h1v37h-1zM296,536h1v32h-1zM297,530h1v16h-1zM298,527h1v16h-1zM299,525h1v14h-1zM300,514h1v31h-1zM301,523h1v18h-1zM302,540h1v15h-1zM303,532h1v23h-1zM304,534h1v22h-1zM305,526h1v19h-1zM306,521h1v46h-1zM307,521h1v24h-1zM308,540h1v14h-1zM309,545h1v14h-1zM310,515h1v31h-1zM311,507h1v36h-1zM312,512h1v21h-1zM313,532h1v11h-1zM314,528h1v20h-1zM315,523h1v6h-1zM316,524h1v21h-1zM317,542h1v5h-1zM318,524h1v19h-1zM319,520h1v19h-1zM320,529h1v18h-1zM321,531h1v17h-1zM322,524h1v20h-1zM323,518h1v30h-1zM324,508h1v35h-1zM325,518h1v14h-1zM326,521h1v12h-1zM327,510h1v17h-1zM328,526h1v19h-1zM329,520h1v15h-1zM330,508h1v17h-1zM331,499h1v28h-1zM332,508h1v27h-1zM333,514h1v34h-1zM334,513h1v10h-1zM335,508h1v25h-1zM336,498h1v19h-1zM337,516h1v9h-1zM338,524h1v7h-1zM339,506h1v20h-1zM340,508h1v29h-1zM341,500h1v29h-1zM342,508h1v10h-1zM343,501h1v20h-1zM344,517h1v10h-1zM345,511h1v15h-1zM346,516h1v24h-1zM347,502h1v17h-1zM348,508h1v11h-1zM349,504h1v11h-1zM350,514h1v50h-1zM351,525h1v20h-1zM352,516h1v15h-1zM353,502h1v34h-1zM354,524h1v22h-1zM355,509h1v26h-1zM356,485h1v28h-1zM357,498h1v41h-1zM358,509h1v20h-1zM359,522h1v15h-1zM360,493h1v32h-1zM361,504h1v25h-1zM362,514h1v18h-1zM363,508h1v31h-1zM364,495h1v25h-1zM365,500h1v20h-1zM366,512h1v16h-1zM367,508h1v14h-1zM368,505h1v24h-1zM369,512h1v18h-1zM370,502h1v23h-1zM371,522h1v3h-1zM372,495h1v28h-1zM373,507h1v33h-1zM374,515h1v26h-1zM375,504h1v24h-1zM376,491h1v42h-1zM377,500h1v44h-1zM378,511h1v12h-1zM379,502h1v21h-1zM380,518h1v18h-1zM381,500h1v25h-1zM382,507h1v40h-1zM383,516h1v13h-1zM384,501h1v33h-1zM385,502h1v32h-1zM386,508h1v13h-1zM387,507h1v24h-1zM388,518h1v34h-1zM389,510h1v17h-1zM390,521h1v4h-1zM391,510h1v12h-1zM392,505h1v33h-1zM393,517h1v11h-1zM394,502h1v21h-1zM395,504h1v38h-1zM396,498h1v38h-1zM397,507h1v33h-1zM398,486h1v50h-1zM399,504h1v27h-1zM400,502h1v20h-1zM401,510h1v10h-1zM402,518h1v33h-1zM403,511h1v26h-1zM404,507h1v5h-1zM405,506h1v29h-1zM406,513h1v12h-1zM407,520h1v7h-1zM408,525h1v6h-1zM409,500h1v26h-1zM410,512h1v14h-1zM411,517h1v8h-1zM412,503h1v21h-1zM413,518h1v22h-1zM414,513h1v26h-1zM415,509h1v16h-1zM416,509h1v19h-1zM417,504h1v13h-1zM418,507h1v9h-1zM419,507h1v29h-1zM420,523h1v9h-1zM421,507h1v24h-1zM422,508h1v9h-1zM423,510h1v31h-1zM424,514h1v35h-1zM425,513h1v25h-1zM426,508h1v35h-1zM427,518h1v13h-1zM428,520h1v11h-1zM429,522h1v20h-1zM430,522h1v11h-1zM431,518h1v12h-1zM432,514h1v25h-1zM433,517h1v9h-1zM434,518h1v16h-1zM435,516h1v12h-1zM436,513h1v9h-1zM437,512h1v18h-1zM438,504h1v25h-1zM439,510h1v13h-1zM440,501h1v52h-1zM441,526h1v18h-1zM442,521h1v21h-1zM443,516h1v13h-1zM444,523h1v3h-1zM445,523h1v9h-1zM446,523h1v26h-1zM447,511h1v45h-1zM448,519h1v9h-1zM449,506h1v15h-1zM450,501h1v42h-1zM451,519h1v32h-1zM452,527h1v16h-1zM453,528h1v10h-1zM454,525h1v20h-1zM455,524h1v31h-1zM456,525h1v17h-1zM457,515h1v18h-1zM458,512h1v13h-1zM459,505h1v26h-1zM460,521h1v21h-1zM461,501h1v36h-1zM462,510h1v46h-1zM463,507h1v30h-1zM464,530h1v5h-1zM465,512h1v19h-1zM466,507h1v31h-1zM467,524h1v17h-1zM468,514h1v16h-1zM469,507h1v15h-1zM470,510h1v40h-1zM471,504h1v31h-1zM472,489h1v38h-1zM473,500h1v35h-1zM474,523h1v12h-1zM475,503h1v26h-1zM476,508h1v32h-1zM477,520h1v22h-1zM478,500h1v41h-1zM479,524h1v19h-1zM480,518h1v9h-1zM481,500h1v33h-1zM482,497h1v40h-1zM483,502h1v35h-1zM484,505h1v26h-1zM485,510h1v25h-1zM486,516h1v39h-1zM487,500h1v24h-1zM488,523h1v21h-1zM489,524h1v22h-1zM490,524h1v15h-1zM491,491h1v34h-1zM492,508h1v19h-1zM493,514h1v18h-1zM494,512h1v25h-1zM495,507h1v31h-1zM496,518h1v13h-1zM497,517h1v26h-1zM498,522h1v33h-1zM499,520h1v19h-1zM500,534h1v9h-1zM501,512h1v32h-1zM502,509h1v15h-1zM503,511h1v27h-1zM504,523h1v35h-1zM505,518h1v31h-1zM506,516h1v50h-1zM507,506h1v33h-1zM508,508h1v39h-1zM509,482h1v47h-1zM510,503h1v29h-1zM511,512h1v11h-1zM512,518h1v12h-1zM513,517h1v13h-1zM514,507h1v30h-1zM515,514h1v12h-1zM516,513h1v10h-1zM517,522h1v13h-1zM518,512h1v21h-1zM519,504h1v15h-1zM520,516h1v8h-1zM521,513h1v13h-1zM522,518h1v36h-1zM523,514h1v26h-1zM524,507h1v12h-1zM525,502h1v29h-1zM526,513h1v12h-1zM527,519h1v26h-1zM528,510h1v25h-1zM529,506h1v21h-1zM530,526h1v9h-1zM531,525h1v17h-1zM532,514h1v15h-1zM533,510h1v12h-1zM534,515h1v6h-1zM535,518h1v5h-1zM536,510h1v17h-1zM537,505h1v26h-1zM538,494h1v20h-1zM539,511h1v24h-1zM540,514h1v26h-1zM541,514h1v27h-1zM542,527h1v10h-1zM543,509h1v26h-1zM544,505h1v21h-1zM545,508h1v23h-1zM546,521h1v11h-1zM547,504h1v25h-1zM548,494h1v15h-1zM549,508h1v19h-1zM550,515h1v19h-1zM551,512h1v16h-1zM552,526h1v13h-1zM553,514h1v13h-1zM554,501h1v32h-1zM555,514h1v16h-1zM556,499h1v45h-1zM557,510h1v23h-1zM558,512h1v27h-1zM559,509h1v8h-1zM560,516h1v14h-1zM561,522h1v11h-1zM562,520h1v11h-1zM563,510h1v11h-1zM564,517h1v23h-1zM565,520h1v30h-1zM566,515h1v16h-1zM567,518h1v18h-1zM568,501h1v29h-1zM569,515h1v12h-1zM570,510h1v27h-1zM571,517h1v14h-1zM572,526h1v21h-1zM573,504h1v23h-1zM574,506h1v15h-1zM575,508h1v37h-1zM576,512h1v21h-1zM577,516h1v5h-1zM578,516h1v7h-1zM579,520h1v10h-1zM580,511h1v17h-1zM581,513h1v13h-1zM582,501h1v20h-1zM583,512h1v12h-1zM584,500h1v13h-1zM585,496h1v21h-1zM586,509h1v25h-1zM587,516h1v22h-1zM588,522h1v14h-1zM589,507h1v19h-1zM590,511h1v22h-1zM591,496h1v19h-1zM592,512h1v12h-1zM593,509h1v31h-1zM594,487h1v40h-1zM595,493h1v51h-1zM596,499h1v23h-1zM597,510h1v12h-1zM598,495h1v20h-1zM599,490h1v45h-1zM600,496h1v30h-1zM601,518h1v11h-1zM602,506h1v13h-1zM603,497h1v37h-1zM604,504h1v34h-1zM605,510h1v27h-1zM606,504h1v27h-1zM607,515h1v20h-1zM608,507h1v21h-1zM609,518h1v15h-1zM610,514h1v5h-1zM611,517h1v6h-1zM612,522h1v20h-1zM613,506h1v26h-1zM614,514h1v10h-1zM615,512h1v9h-1zM616,520h1v4h-1zM617,502h1v24h-1zM618,508h1v15h-1zM619,491h1v45h-1zM620,496h1v33h-1zM621,501h1v22h-1zM622,502h1v42h-1zM623,485h1v40h-1zM624,498h1v31h-1zM625,485h1v47h-1zM626,517h1v8h-1zM627,501h1v17h-1zM628,498h1v48h-1zM629,514h1v18h-1zM630,498h1v22h-1zM631,498h1v31h-1zM632,505h1v13h-1zM633,515h1v5h-1zM634,508h1v16h-1zM635,492h1v43h-1zM636,509h1v14h-1zM637,512h1v13h-1zM638,500h1v19h-1zM639,511h1v23h-1zM640,514h1v11h-1zM641,496h1v24h-1zM642,504h1v9h-1zM643,495h1v21h-1zM644,499h1v22h-1zM645,501h1v8h-1zM646,503h1v19h-1zM647,514h1v26h-1zM648,512h1v7h-1zM649,509h1v8h-1zM650,510h1v13h-1zM651,510h1v11h-1zM652,509h1v14h-1zM653,517h1v20h-1zM654,516h1v16h-1zM655,513h1v19h-1zM656,509h1v20h-1zM657,506h1v24h-1zM658,502h1v31h-1zM659,510h1v27h-1zM660,500h1v44h-1zM661,508h1v18h-1zM662,517h1v14h-1zM663,530h1v9h-1zM664,518h1v16h-1zM665,504h1v15h-1zM666,508h1v9h-1zM667,503h1v13h-1zM668,506h1v25h-1zM669,530h1v17h-1zM670,524h1v11h-1zM671,496h1v29h-1zM672,498h1v29h-1zM673,502h1v34h-1zM674,520h1v15h-1zM675,533h1v15h-1zM676,516h1v18h-1zM677,501h1v19h-1zM678,519h1v21h-1zM679,530h1v10h-1zM680,508h1v23h-1zM681,510h1v41h-1zM682,516h1v24h-1zM683,516h1v13h-1zM684,528h1v16h-1zM685,522h1v17h-1zM686,508h1v29h-1zM687,533h1v13h-1zM688,497h1v42h-1zM689,514h1v31h-1zM690,521h1v21h-1zM691,511h1v28h-1zM692,514h1v18h-1zM693,516h1v19h-1zM694,519h1v18h-1zM695,496h1v31h-1zM696,512h1v18h-1zM697,504h1v13h-1zM698,510h1v19h-1zM699,509h1v39h-1zM700,522h1v13h-1zM701,519h1v14h-1zM702,522h1v11h-1zM703,532h1v5h-1zM704,527h1v12h-1zM705,522h1v6h-1zM706,514h1v13h-1zM707,524h1v15h-1zM708,516h1v17h-1zM709,516h1v28h-1zM710,513h1v18h-1zM711,522h1v11h-1zM712,524h1v13h-1zM713,517h1v8h-1zM714,524h1v21h-1zM715,518h1v15h-1zM716,521h1v9h-1zM717,522h1v6h-1zM718,516h1v15h-1zM719,528h1v12h-1zM720,524h1v16h-1zM721,526h1v9h-1zM722,521h1v30h-1zM723,512h1v36h-1zM724,517h1v21h-1zM725,506h1v18h-1zM726,520h1v29h-1zM727,522h1v14h-1zM728,528h1v10h-1zM729,516h1v31h-1zM730,486h1v31h-1zM731,513h1v28h-1zM732,523h1v22h-1zM733,512h1v15h-1zM734,526h1v38h-1zM735,514h1v28h-1zM736,516h1v26h-1zM737,505h1v24h-1zM738,505h1v18h-1zM739,490h1v41h-1zM740,503h1v46h-1zM741,514h1v19h-1zM742,520h1v11h-1zM743,530h1v11h-1zM744,526h1v28h-1zM745,528h1v25h-1zM746,534h1v8h-1zM747,514h1v23h-1zM748,532h1v20h-1zM749,524h1v13h-1zM750,513h1v39h-1zM751,507h1v30h-1zM752,478h1v49h-1zM753,526h1v6h-1zM754,520h1v17h-1zM755,514h1v19h-1zM756,531h1v22h-1zM757,517h1v18h-1zM758,517h1v18h-1zM759,514h1v13h-1zM760,511h1v26h-1zM761,519h1v42h-1zM762,514h1v11h-1zM763,522h1v7h-1zM764,515h1v10h-1zM765,517h1v9h-1zM766,514h1v10h-1zM767,498h1v28h-1zM768,510h1v19h-1zM769,516h1v18h-1zM770,511h1v20h-1zM771,521h1v10h-1zM772,517h1v14h-1zM773,512h1v31h-1zM774,514h1v13h-1zM775,517h1v6h-1zM776,510h1v10h-1zM777,519h1v10h-1zM778,503h1v20h-1zM779,495h1v38h-1zM780,528h1v13h-1zM781,508h1v25h-1zM782,512h1v7h-1zM783,509h1v14h-1zM784,522h1v21h-1zM785,501h1v22h-1zM786,512h1v22h-1zM787,520h1v22h-1zM788,503h1v29h-1zM789,520h1v18h-1zM790,526h1v8h-1zM791,515h1v17h-1zM792,499h1v36h-1zM793,532h1v8h-1zM794,514h1v28h-1zM795,502h1v19h-1zM796,520h1v20h-1zM797,491h1v36h-1zM798,496h1v35h-1zM799,511h1v29h-1zM800,516h1v22h-1zM801,523h1v10h-1zM802,505h1v31h-1zM803,515h1v13h-1zM804,506h1v10h-1zM805,512h1v11h-1zM806,513h1v13h-1zM807,510h1v18h-1zM808,519h1v10h-1zM809,522h1v21h-1zM810,501h1v22h-1zM811,510h1v8h-1zM812,512h1v11h-1zM813,522h1v10h-1zM814,505h1v19h-1zM815,499h1v26h-1zM816,498h1v30h-1zM817,488h1v37h-1zM818,507h1v19h-1zM819,496h1v50h-1zM820,512h1v26h-1zM821,516h1v15h-1zM822,503h1v28h-1zM823,519h1v37h-1zM824,520h1v15h-1zM825,526h1v13h-1zM826,482h1v45h-1zM827,502h1v21h-1zM828,521h1v16h-1zM829,515h1v25h-1zM830,506h1v10h-1zM831,511h1v19h-1zM832,493h1v19h-1zM833,502h1v23h-1zM834,513h1v16h-1zM835,505h1v14h-1zM836,518h1v27h-1zM837,518h1v32h-1zM838,511h1v12h-1zM839,493h1v24h-1zM840,506h1v14h-1zM841,514h1v3h-1zM842,515h1v19h-1zM843,527h1v16h-1zM844,524h1v44h-1zM845,543h1v21h-1zM846,538h1v19h-1zM847,526h1v37h-1zM848,544h1v19h-1zM849,542h1v18h-1zM850,550h1v10h-1zM851,537h1v21h-1zM852,541h1v17h-1zM853,536h1v20h-1zM854,542h1v12h-1zM855,531h1v28h-1zM856,535h1v15h-1zM857,536h1v15h-1zM858,531h1v25h-1zM859,540h1v28h-1zM860,544h1v11h-1zM861,533h1v25h-1zM862,539h1v11h-1zM863,532h1v18h-1zM864,530h1v17h-1zM865,524h1v44h-1zM866,514h1v44h-1zM867,526h1v18h-1zM868,536h1v9h-1zM869,527h1v15h-1zM870,538h1v18h-1zM871,541h1v17h-1zM872,516h1v26h-1zM873,532h1v18h-1zM874,522h1v32h-1zM875,514h1v27h-1zM876,527h1v10h-1zM877,529h1v16h-1zM878,534h1v10h-1zM879,528h1v13h-1zM880,524h1v15h-1zM881,530h1v21h-1zM882,516h1v37h-1zM883,520h1v28h-1zM884,526h1v7h-1zM885,519h1v18h-1zM886,518h1v21h-1zM887,538h1v21h-1zM888,530h1v23h-1zM889,517h1v16h-1zM890,517h1v28h-1zM891,512h1v25h-1zM892,521h1v28h-1zM893,526h1v12h-1zM894,518h1v15h-1zM895,526h1v20h-1zM896,532h1v7h-1zM897,517h1v16h-1zM898,516h1v9h-1zM899,508h1v25h-1zM900,515h1v28h-1zM901,506h1v13h-1zM902,498h1v39h-1zM903,499h1v51h-1zM904,507h1v28h-1zM905,519h1v13h-1zM906,519h1v10h-1zM907,524h1v13h-1zM908,514h1v16h-1zM909,513h1v13h-1zM910,508h1v20h-1zM911,514h1v18h-1zM912,507h1v11h-1zM913,517h1v24h-1zM914,510h1v16h-1zM915,519h1v30h-1zM916,509h1v20h-1zM917,498h1v27h-1zM918,497h1v28h-1zM919,509h1v13h-1zM920,510h1v25h-1zM921,514h1v26h-1zM922,518h1v13h-1zM923,509h1v18h-1zM924,520h1v20h-1zM925,511h1v12h-1zM926,498h1v36h-1zM927,470h1v29h-1zM928,488h1v48h-1zM929,503h1v17h-1z" fill="#FFFFFF"/><rect x="72" y="595" width="5" height="1" fill="#000" /><text x="69" y="599" font-family="Liberation Sans" font-size="11" font-weight="normal" fill="#000" text-anchor="end" >-30</text><rect x="72" y="574" width="5" height="1" fill="#000" /><text x="69" y="578" font-family="Liberation Sans" font-size="11" font-weight="normal" fill="#000" text-anchor="end" >-20</text><rect x="72" y="554" width="5" height="1" fill="#000" /><text x="69" y="558" font-family="Liberation Sans" font-size="11" font-weight="normal" fill="#000" text-anchor="end" >-10</text><rect x="72" y="533" width="5" height="1" fill="#000" /><text x="69" y="537" font-family="Liberation Sans" font-size="11" font-weight="normal" fill="#000" text-anchor="end" >0</text><rect x="72" y="512" width="5" height="1" fill="#000" /><text x="69" y="516" font-family="Liberation Sans" font-size="11" font-weight="normal" fill="#000" text-anchor="end" >10</text><rect x="72" y="492" width="5" height="1" fill="#000" /><text x="69" y="496" font-family="Liberation Sans" font-size="11" font-weight="normal" fill="#000" text-anchor="end" >20</text><rect x="72" y="471" width="5" height="1" fill="#000" /><text x="69" y="475" font-family="Liberation Sans" font-size="11" font-weight="normal" fill="#000" text-anchor="end" >30</text><rect x="79" y="598" width="1" height="5" fill="#000" /><text x="79.5" y="614" font-family="Liberation Sans" font-size="11" font-weight="normal" fill="#000" text-anchor="middle" >0</text><rect x="86" y="598" width="1" height="3" fill="#000" /><rect x="92" y="598" width="1" height="3" fill="#000" /><rect x="99" y="598" width="1" height="3" fill="#000" /><rect x="105" y="598" width="1" height="3" fill="#000" /><rect x="112" y="598" width="1" height="3" fill="#000" /><rect x="118" y="598" width="1" height="3" fill="#000" /><rect x="125" y="598" width="1" height="3" fill="#000" /><rect x="131" y="598" width="1" height="3" fill="#000" /><rect x="138" y="598" width="1" height="3" fill="#000" /><rect x="144" y="598" width="1" height="3" fill="#000" /><rect x="151" y="598" width="1" height="3" fill="#000" /><rect x="157" y="598" width="1" height="3" fill="#000" /><rect x="164" y="598" width="1" height="5" fill="#000" /><text x="164.5" y="614" font-family="Liberation Sans" font-size="11" font-weight="normal" fill="#000" text-anchor="middle" >128</text><rect x="171" y="598" width="1" height="3" fill="#000" /><rect x="177" y="598" width="1" height="3" fill="#000" /><rect x="184" y="598" width="1" height="3" fill="#000" /><rect x="190" y="598" width="1" height="3" fill="#000" /><rect x="197" y="598" width="1" height="3" fill="#000" /><rect x="203" y="598" width="1" height="3" fill="#000" /><rect x="210" y="598" width="1" height="3" fill="#000" /><rect x="216" y="598" width="1" height="3" fill="#000" /><rect x="223" y="598" width="1" height="3" fill="#000" /><rect x="229" y="598" width="1" height="3" fill="#000" /><rect x="236" y="598" width="1" height="3" fill="#000" /><rect x="242" y="598" width="1" height="3" fill="#000" /><rect x="249" y="598" width="1" height="5" fill="#000" /><text x="249.5" y="614" font-family="Liberation Sans" font-size="11" font-weight="normal" fill="#000" text-anchor="middle" >256</text><rect x="256" y="598" width="1" height="3" fill="#000" /><rect x="262" y="598" width="1" height="3" fill="#000" /><rect x="269" y="598" width="1" height="3" fill="#000" /><rect x="275" y="598" width="1" height="3" fill="#000" /><rect x="282" y="598" width="1" height="3" fill="#000" /><rect x="288" y="598" width="1" height="3" fill="#000" /><rect x="295" y="598" width="1" height="3" fill="#000" /><rect x="301" y="598" width="1" height="3" fill="#000" /><rect x="308" y="598" width="1" height="3" fill="#000" /><rect x="314" y="598" width="1" height="3" fill="#000" /><rect x="321" y="598" width="1" height="3" fill="#000" /><rect x="327" y="598" width="1" height="3" fill="#000" /><rect x="334" y="598" width="1" height="5" fill="#000" /><text x="334.5" y="614" font-family="Liberation Sans" font-size="11" font-weight="normal" fill="#000" text-anchor="middle" >384</text><rect x="341" y="598" width="1" height="3" fill="#000" /><rect x="347" y="598" width="1" height="3" fill="#000" /><rect x="354" y="598" width="1" height="3" fill="#000" /><rect x="360" y="598" width="1" height="3" fill="#000" /><rect x="367" y="598" width="1" height="3" fill="#000" /><rect x="373" y="598" width="1" height="3" fill="#000" /><rect x="380" y="598" width="1" height="3" fill="#000" /><rect x="386" y="598" width="1" height="3" fill="#000" /><rect x="393" y="598" width="1" height="3" fill="#000" /><rect x="399" y="598" width="1" height="3" fill="#000" /><rect x="406" y="598" width="1" height="3" fill="#000" /><rect x="412" y="598" width="1" height="3" fill="#000" /><rect x="419" y="598" width="1" height="5" fill="#000" /><text x="419.5" y="614" font-family="Liberation Sans" font-size="11" font-weight="normal" fill="#000" text-anchor="middle" >512</text><rect x="426" y="598" width="1" height="3" fill="#000" /><rect x="432" y="598" width="1" height="3" fill="#000" /><rect x="439" y="598" width="1" height="3" fill="#000" /><rect x="445" y="598" width="1" height="3" fill="#000" /><rect x="452" y="598" width="1" height="3" fill="#000" /><rect x="458" y="598" width="1" height="3" fill="#000" /><rect x="465" y="598" width="1" height="3" fill="#000" /><rect x="471" y="598" width="1" height="3" fill="#000" /><rect x="478" y="598" width="1" height="3" fill="#000" /><rect x="484" y="598" width="1" height="3" fill="#000" /><rect x="491" y="598" width="1" height="3" fill="#000" /><rect x="497" y="598" width="1" height="3" fill="#000" /><rect x="504" y="598" width="1" height="5" fill="#000" /><text x="504.5" y="614" font-family="Liberation Sans" font-size="11" font-weight="normal" fill="#000" text-anchor="middle" >640</text><rect x="511" y="598" width="1" height="3" fill="#000" /><rect x="517" y="598" width="1" height="3" fill="#000" /><rect x="524" y="598" width="1" height="3" fill="#000" /><rect x="530" y="598" width="1" height="3" fill="#000" /><rect x="537" y="598" width="1" height="3" fill="#000" /><rect x="543" y="598" width="1" height="3" fill="#000" /><rect x="550" y="598" width="1" height="3" fill="#000" /><rect x="556" y="598" width="1" height="3" fill="#000" /><rect x="563" y="598" width="1" height="3" fill="#000" /><rect x="569" y="598" width="1" height="3" fill="#000" /><rect x="576" y="598" width="1" height="3" fill="#000" /><rect x="582" y="598" width="1" height="3" fill="#000" /><rect x="589" y="598" width="1" height="5" fill="#000" /><text x="589.5" y="614" font-family="Liberation Sans" font-size="11" font-weight="normal" fill="#000" text-anchor="middle" >768</text><rect x="596" y="598" width="1" height="3" fill="#000" /><rect x="602" y="598" width="1" height="3" fill="#000" /><rect x="609" y="598" width="1" height="3" fill="#000" /><rect x="615" y="598" width="1" height="3" fill="#000" /><rect x="622" y="598" width="1" height="3" fill="#000" /><rect x="628" y="598" width="1" height="3" fill="#000" /><rect x="635" y="598" width="1" height="3" fill="#000" /><rect x="641" y="598" width="1" height="3" fill="#000" /><rect x="648" y="598" width="1" height="3" fill="#000" /><rect x="654" y="598" width="1" height="3" fill="#000" /><rect x="661" y="598" width="1" height="3" fill="#000" /><rect x="667" y="598" width="1" height="3" fill="#000" /><rect x="674" y="598" width="1" height="5" fill="#000" /><text x="674.5" y="614" font-family="Liberation Sans" font-size="11" font-weight="normal" fill="#000" text-anchor="middle" >896</text><rect x="681" y="598" width="1" height="3" fill="#000" /><rect x="687" y="598" width="1" height="3" fill="#000" /><rect x="694" y="598" width="1" height="3" fill="#000" /><rect x="700" y="598" width="1" height="3" fill="#000" /><rect x="707" y="598" width="1" height="3" fill="#000" /><rect x="713" y="598" width="1" height="3" fill="#000" /><rect x="720" y="598" width="1" height="3" fill="#000" /><rect x="726" y="598" width="1" height="3" fill="#000" /><rect x="733" y="598" width="1" height="3" fill="#000" /><rect x="739" y="598" width="1" height="3" fill="#000" /><rect x="746" y="598" width="1" height="3" fill="#000" /><rect x="752" y="598" width="1" height="3" fill="#000" /><rect x="759" y="598" width="1" height="5" fill="#000" /><text x="759.5" y="614" font-family="Liberation Sans" font-size="11" font-weight="normal" fill="#000" text-anchor="middle" >1024</text><rect x="766" y="598" width="1" height="3" fill="#000" /><rect x="772" y="598" width="1" height="3" fill="#000" /><rect x="779" y="598" width="1" height="3" fill="#000" /><rect x="785" y="598" width="1" height="3" fill="#000" /><rect x="792" y="598" width="1" height="3" fill="#000" /><rect x="798" y="598" width="1" height="3" fill="#000" /><rect x="805" y="598" width="1" height="3" fill="#000" /><rect x="811" y="598" width="1" height="3" fill="#000" /><rect x="818" y="598" width="1" height="3" fill="#000" /><rect x="824" y="598" width="1" height="3" fill="#000" /><rect x="831" y="598" width="1" height="3" fill="#000" /><rect x="837" y="598" width="1" height="3" fill="#000" /><rect x="844" y="598" width="1" height="5" fill="#000" /><text x="844.5" y="614" font-family="Liberation Sans" font-size="11" font-weight="normal" fill="#000" text-anchor="middle" >1152</text><rect x="851" y="598" width="1" height="3" fill="#000" /><rect x="857" y="598" width="1" height="3" fill="#000" /><rect x="864" y="598" width="1" height="3" fill="#000" /><rect x="870" y="598" width="1" height="3" fill="#000" /><rect x="877" y="598" width="1" height="3" fill="#000" /><rect x="883" y="598" width="1" height="3" fill="#000" /><rect x="890" y="598" width="1" height="3" fill="#000" /><rect x="896" y="598" width="1" height="3" fill="#000" /><rect x="903" y="598" width="1" height="3" fill="#000" /><rect x="909" y="598" width="1" height="3" fill="#000" /><rect x="916" y="598" width="1" height="3" fill="#000" /><rect x="922" y="598" width="1" height="3" fill="#000" /><rect x="929" y="598" width="1" height="5" fill="#000" /><text x="929.5" y="614" font-family="Liberation Sans" font-size="11" font-weight="normal" fill="#000" text-anchor="middle" >1280</text><text x="0" y="0" font-family="Liberation Sans" font-size="11" font-weight="normal" fill="#000" text-anchor="middle" textLength="56" lengthAdjust="spacingAndGlyphs" transform="translate(49,530.0) rotate(-90)">Offset (mV)</text><rect x="34" y="621" width="920" height="160" fill="#C0C0C0" /><rect x="34" y="621" width="13" height="160" fill="#D0D0D0" /><rect x="941" y="621" width="13" height="160" fill="url(#g73)" /><rect x="34" y="621" width="917" height="1" fill="#DCDCDC" /><rect x="34" y="780" width="920" height="1" fill="#8C8C8C" /><rect x="75" y="630" width="855" height="126" fill="#000" /><rect x="930" y="630" width="1" height="127" fill="#E4E4E4" /><rect x="75" y="756" width="856" height="1" fill="#E4E4E4" /><rect x="160" y="630" width="1" height="126" fill="#00FF00" /><rect x="246" y="630" width="1" height="126" fill="#00FF00" /><rect x="331" y="630" width="1" height="126" fill="#00FF00" /><rect x="417" y="630" width="1" height="126" fill="#00FF00" /><rect x="502" y="630" width="1" height="126" fill="#00FF00" /><rect x="587" y="630" width="1" height="126" fill="#00FF00" /><rect x="673" y="630" width="1" height="126" fill="#00FF00" /><rect x="758" y="630" width="1" height="126" fill="#00FF00" /><rect x="844" y="630" width="1" height="126" fill="#00FF00" /><path d="M75,684h1v5h-1zM76,688h1v7h-1zM77,688h1v7h-1zM78,687h1v3h-1zM79,685h1v5h-1zM80,687h1v3h-1zM81,686h1v3h-1zM82,686h1v1h-1zM83,686h1v3h-1zM84,684h1v3h-1zM85,686h1v3h-1zM86,687h1v3h-1zM87,685h1v3h-1zM88,685h1v3h-1zM89,687h1v5h-1zM90,691h1v3h-1zM91,686h1v6h-1zM92,684h1v3h-1zM93,685h1v2h-1zM94,686h1v4h-1zM95,689h1v4h-1zM96,688h1v3h-1zM97,688h1v4h-1zM98,686h1v6h-1zM99,681h1v8h-1zM100,684h1v11h-1zM101,684h1v7h-1zM102,688h1v2h-1zM103,688h1v2h-1zM104,688h1v5h-1zM105,689h1v5h-1zM106,685h1v5h-1zM107,686h1v3h-1zM108,685h1v3h-1zM109,684h1v2h-1zM110,684h1v9h-1zM111,691h1v3h-1zM112,691h1v2h-1zM113,689h1v4h-1zM114,688h1v2h-1zM115,684h1v5h-1zM116,684h1v5h-1zM117,688h1v3h-1zM118,689h1v4h-1zM119,683h1v7h-1zM120,680h1v6h-1zM121,685h1v6h-1zM122,682h1v9h-1zM123,690h1v3h-1zM124,692h1v1h-1zM125,686h1v7h-1zM126,681h1v12h-1zM127,688h1v5h-1zM128,683h1v6h-1zM129,686h1v5h-1zM130,689h1v6h-1zM131,688h1v5h-1zM132,688h1v4h-1zM133,691h1v1h-1zM134,688h1v4h-1zM135,686h1v5h-1zM136,690h1v5h-1zM137,692h1v4h-1zM138,688h1v5h-1zM139,687h1v2h-1zM140,687h1v10h-1zM141,684h1v8h-1zM142,683h1v2h-1zM143,684h1v7h-1zM144,690h1v5h-1zM145,687h1v7h-1zM146,685h1v6h-1zM147,690h1v5h-1zM148,690h1v3h-1zM149,686h1v5h-1zM150,682h1v11h-1zM151,688h1v7h-1zM152,689h1v4h-1zM153,687h1v3h-1zM154,683h1v6h-1zM155,679h1v12h-1zM156,685h1v4h-1zM157,686h1v5h-1zM158,688h1v4h-1zM159,687h1v3h-1zM160,687h1v2h-1zM161,688h1v3h-1zM162,690h1v3h-1zM163,682h1v9h-1zM164,682h1v7h-1zM165,688h1v8h-1zM166,689h1v4h-1zM167,689h1v2h-1zM168,688h1v4h-1zM169,687h1v5h-1zM170,687h1v2h-1zM171,686h1v3h-1zM172,683h1v7h-1zM173,687h1v3h-1zM174,687h1v1h-1zM175,687h1v7h-1zM176,686h1v5h-1zM177,688h1v2h-1zM178,688h1v2h-1zM179,688h1v3h-1zM180,688h1v2h-1zM181,689h1v2h-1zM182,684h1v7h-1zM183,685h1v2h-1zM184,685h1v6h-1zM185,686h1v4h-1zM186,686h1v4h-1zM187,680h1v7h-1zM188,680h1v9h-1zM189,688h1v3h-1zM190,690h1v4h-1zM191,687h1v9h-1zM192,688h1v4h-1zM193,686h1v3h-1zM194,686h1v7h-1zM195,689h1v4h-1zM196,689h1v4h-1zM197,685h1v8h-1zM198,685h1v2h-1zM199,684h1v3h-1zM200,686h1v5h-1zM201,690h1v2h-1zM202,686h1v5h-1zM203,688h1v2h-1zM204,688h1v2h-1zM205,686h1v3h-1zM206,686h1v2h-1zM207,687h1v2h-1zM208,685h1v3h-1zM209,685h1v6h-1zM210,690h1v3h-1zM211,689h1v5h-1zM212,685h1v5h-1zM213,688h1v5h-1zM214,683h1v6h-1zM215,688h1v3h-1zM216,690h1v4h-1zM217,689h1v4h-1zM218,683h1v7h-1zM219,683h1v7h-1zM220,685h1v3h-1zM221,686h1v4h-1zM222,684h1v3h-1zM223,685h1v4h-1zM224,686h1v2h-1zM225,685h1v2h-1zM226,686h1v4h-1zM227,689h1v2h-1zM228,688h1v3h-1zM229,690h1v4h-1zM230,687h1v5h-1zM231,691h1v6h-1zM232,683h1v14h-1zM233,680h1v14h-1zM234,678h1v13h-1zM235,687h1v5h-1zM236,687h1v5h-1zM237,689h1v6h-1zM238,694h1v7h-1zM239,690h1v6h-1zM240,688h1v3h-1zM241,687h1v2h-1zM242,688h1v5h-1zM243,690h1v5h-1zM244,687h1v4h-1zM245,687h1v2h-1zM246,687h1v3h-1zM247,689h1v6h-1zM248,690h1v5h-1zM249,690h1v5h-1zM250,684h1v11h-1zM251,686h1v3h-1zM252,687h1v2h-1zM253,685h1v3h-1zM254,685h1v5h-1zM255,689h1v2h-1zM256,688h1v2h-1zM257,687h1v6h-1zM258,691h1v2h-1zM259,691h1v5h-1zM260,690h1v6h-1zM261,689h1v2h-1zM262,682h1v8h-1zM263,682h1v12h-1zM264,682h1v9h-1zM265,687h1v2h-1zM266,687h1v3h-1zM267,689h1v3h-1zM268,691h1v3h-1zM269,690h1v3h-1zM270,690h1v2h-1zM271,688h1v3h-1zM272,687h1v3h-1zM273,686h1v6h-1zM274,681h1v9h-1zM275,688h1v4h-1zM276,690h1v2h-1zM277,689h1v2h-1zM278,688h1v2h-1zM279,688h1v5h-1zM280,689h1v5h-1zM281,685h1v5h-1zM282,686h1v3h-1zM283,687h1v5h-1zM284,690h1v5h-1zM285,682h1v9h-1zM286,685h1v4h-1zM287,686h1v5h-1zM288,688h1v3h-1zM289,686h1v5h-1zM290,682h1v8h-1zM291,687h1v3h-1zM292,687h1v2h-1zM293,686h1v3h-1zM294,686h1v4h-1zM295,682h1v6h-1zM296,679h1v9h-1zM297,679h1v10h-1zM298,682h1v7h-1zM299,682h1v11h-1zM300,687h1v4h-1zM301,686h1v3h-1zM302,688h1v3h-1zM303,686h1v3h-1zM304,688h1v9h-1zM305,690h1v7h-1zM306,687h1v4h-1zM307,685h1v3h-1zM308,686h1v5h-1zM309,690h1v3h-1zM310,686h1v7h-1zM311,686h1v6h-1zM312,687h1v5h-1zM313,686h1v7h-1zM314,685h1v4h-1zM315,687h1v3h-1zM316,689h1v5h-1zM317,688h1v6h-1zM318,683h1v6h-1zM319,683h1v9h-1zM320,690h1v2h-1zM321,685h1v6h-1zM322,681h1v5h-1zM323,682h1v7h-1zM324,686h1v4h-1zM325,689h1v4h-1zM326,688h1v5h-1zM327,688h1v4h-1zM328,686h1v6h-1zM329,688h1v4h-1zM330,690h1v2h-1zM331,688h1v6h-1zM332,685h1v9h-1zM333,684h1v3h-1zM334,686h1v5h-1zM335,690h1v2h-1zM336,689h1v2h-1zM337,683h1v7h-1zM338,683h1v12h-1zM339,693h1v3h-1zM340,693h1v4h-1zM341,683h1v14h-1zM342,683h1v10h-1zM343,688h1v3h-1zM344,687h1v4h-1zM345,686h1v4h-1zM346,685h1v8h-1zM347,691h1v3h-1zM348,686h1v6h-1zM349,686h1v4h-1zM350,689h1v4h-1zM351,687h1v6h-1zM352,688h1v5h-1zM353,683h1v7h-1zM354,689h1v7h-1zM355,685h1v6h-1zM356,681h1v6h-1zM357,679h1v14h-1zM358,679h1v12h-1zM359,686h1v3h-1zM360,688h1v4h-1zM361,688h1v4h-1zM362,686h1v3h-1zM363,686h1v3h-1zM364,685h1v3h-1zM365,683h1v8h-1zM366,687h1v2h-1zM367,685h1v6h-1zM368,680h1v7h-1zM369,686h1v7h-1zM370,690h1v3h-1zM371,689h1v3h-1zM372,688h1v5h-1zM373,684h1v13h-1zM374,691h1v6h-1zM375,689h1v3h-1zM376,688h1v6h-1zM377,687h1v4h-1zM378,684h1v4h-1zM379,685h1v2h-1zM380,686h1v6h-1zM381,686h1v6h-1zM382,682h1v5h-1zM383,679h1v4h-1zM384,682h1v7h-1zM385,688h1v6h-1zM386,682h1v7h-1zM387,682h1v5h-1zM388,684h1v3h-1zM389,684h1v9h-1zM390,686h1v7h-1zM391,686h1v5h-1zM392,681h1v6h-1zM393,682h1v7h-1zM394,685h1v8h-1zM395,686h1v3h-1zM396,688h1v1h-1zM397,688h1v5h-1zM398,687h1v5h-1zM399,690h1v4h-1zM400,688h1v5h-1zM401,681h1v8h-1zM402,681h1v10h-1zM403,690h1v3h-1zM404,690h1v3h-1zM405,684h1v7h-1zM406,684h1v5h-1zM407,688h1v4h-1zM408,689h1v5h-1zM409,685h1v6h-1zM410,683h1v5h-1zM411,687h1v6h-1zM412,688h1v6h-1zM413,682h1v7h-1zM414,680h1v5h-1zM415,684h1v7h-1zM416,688h1v4h-1zM417,686h1v3h-1zM418,685h1v6h-1zM419,688h1v3h-1zM420,689h1v5h-1zM421,686h1v11h-1zM422,677h1v10h-1zM423,684h1v5h-1zM424,688h1v5h-1zM425,692h1v1h-1zM426,689h1v4h-1zM427,685h1v5h-1zM428,684h1v3h-1zM429,686h1v3h-1zM430,687h1v2h-1zM431,687h1v7h-1zM432,687h1v4h-1zM433,681h1v11h-1zM434,681h1v9h-1zM435,689h1v2h-1zM436,690h1v3h-1zM437,683h1v8h-1zM438,683h1v2h-1zM439,684h1v9h-1zM440,683h1v8h-1zM441,683h1v9h-1zM442,691h1v4h-1zM443,686h1v6h-1zM444,685h1v2h-1zM445,686h1v2h-1zM446,686h1v1h-1zM447,686h1v3h-1zM448,686h1v9h-1zM449,691h1v4h-1zM450,690h1v3h-1zM451,688h1v3h-1zM452,685h1v4h-1zM453,685h1v1h-1zM454,685h1v7h-1zM455,691h1v2h-1zM456,689h1v8h-1zM457,682h1v8h-1zM458,684h1v9h-1zM459,692h1v6h-1zM460,683h1v10h-1zM461,686h1v6h-1zM462,686h1v8h-1zM463,686h1v8h-1zM464,686h1v5h-1zM465,687h1v4h-1zM466,686h1v7h-1zM467,685h1v4h-1zM468,688h1v4h-1zM469,686h1v6h-1zM470,688h1v3h-1zM471,688h1v4h-1zM472,683h1v6h-1zM473,681h1v5h-1zM474,684h1v8h-1zM475,684h1v5h-1zM476,684h1v5h-1zM477,686h1v2h-1zM478,687h1v4h-1zM479,688h1v3h-1zM480,687h1v4h-1zM481,690h1v3h-1zM482,686h1v5h-1zM483,685h1v2h-1zM484,684h1v2h-1zM485,684h1v2h-1zM486,685h1v5h-1zM487,689h1v3h-1zM488,686h1v5h-1zM489,683h1v4h-1zM490,686h1v4h-1zM491,687h1v4h-1zM492,690h1v2h-1zM493,683h1v9h-1zM494,683h1v12h-1zM495,690h1v6h-1zM496,686h1v6h-1zM497,686h1v6h-1zM498,686h1v4h-1zM499,688h1v2h-1zM500,688h1v8h-1zM501,690h1v6h-1zM502,686h1v5h-1zM503,687h1v3h-1zM504,684h1v4h-1zM505,684h1v1h-1zM506,684h1v2h-1zM507,685h1v2h-1zM508,686h1v3h-1zM509,686h1v3h-1zM510,688h1v4h-1zM511,687h1v3h-1zM512,688h1v7h-1zM513,685h1v6h-1zM514,688h1v4h-1zM515,689h1v2h-1zM516,686h1v5h-1zM517,686h1v1h-1zM518,685h1v2h-1zM519,685h1v7h-1zM520,686h1v3h-1zM521,688h1v4h-1zM522,686h1v7h-1zM523,684h1v5h-1zM524,688h1v3h-1zM525,684h1v5h-1zM526,682h1v4h-1zM527,685h1v10h-1zM528,682h1v7h-1zM529,686h1v5h-1zM530,688h1v3h-1zM531,686h1v7h-1zM532,688h1v5h-1zM533,688h1v2h-1zM534,689h1v4h-1zM535,686h1v7h-1zM536,686h1v4h-1zM537,686h1v4h-1zM538,686h1v3h-1zM539,688h1v4h-1zM540,686h1v3h-1zM541,687h1v2h-1zM542,687h1v3h-1zM543,684h1v6h-1zM544,684h1v4h-1zM545,687h1v2h-1zM546,688h1v2h-1zM547,687h1v4h-1zM548,686h1v4h-1zM549,682h1v5h-1zM550,686h1v4h-1zM551,687h1v3h-1zM552,687h1v3h-1zM553,687h1v5h-1zM554,683h1v7h-1zM555,689h1v5h-1zM556,685h1v6h-1zM557,690h1v3h-1zM558,683h1v10h-1zM559,685h1v9h-1zM560,688h1v5h-1zM561,687h1v9h-1zM562,686h1v2h-1zM563,685h1v5h-1zM564,683h1v11h-1zM565,683h1v2h-1zM566,684h1v6h-1zM567,689h1v2h-1zM568,687h1v4h-1zM569,684h1v9h-1zM570,684h1v3h-1zM571,686h1v3h-1zM572,688h1v5h-1zM573,692h1v1h-1zM574,691h1v3h-1zM575,690h1v3h-1zM576,687h1v7h-1zM577,681h1v12h-1zM578,692h1v6h-1zM579,691h1v5h-1zM580,686h1v6h-1zM581,686h1v11h-1zM582,695h1v2h-1zM583,685h1v11h-1zM584,688h1v5h-1zM585,686h1v4h-1zM586,688h1v4h-1zM587,684h1v7h-1zM588,684h1v12h-1zM589,690h1v6h-1zM590,686h1v5h-1zM591,689h1v2h-1zM592,688h1v2h-1zM593,688h1v4h-1zM594,684h1v5h-1zM595,688h1v4h-1zM596,686h1v3h-1zM597,686h1v3h-1zM598,688h1v3h-1zM599,687h1v4h-1zM600,684h1v4h-1zM601,687h1v5h-1zM602,687h1v5h-1zM603,685h1v3h-1zM604,685h1v5h-1zM605,689h1v4h-1zM606,688h1v5h-1zM607,687h1v2h-1zM608,688h1v5h-1zM609,686h1v7h-1zM610,686h1v6h-1zM611,690h1v2h-1zM612,686h1v5h-1zM613,690h1v5h-1zM614,689h1v4h-1zM615,684h1v12h-1zM616,686h1v6h-1zM617,691h1v3h-1zM618,688h1v6h-1zM619,686h1v7h-1zM620,687h1v5h-1zM621,684h1v4h-1zM622,686h1v2h-1zM623,686h1v2h-1zM624,686h1v2h-1zM625,684h1v4h-1zM626,684h1v3h-1zM627,686h1v6h-1zM628,684h1v7h-1zM629,689h1v5h-1zM630,690h1v4h-1zM631,692h1v4h-1zM632,685h1v11h-1zM633,685h1v3h-1zM634,686h1v2h-1zM635,686h1v1h-1zM636,686h1v3h-1zM637,688h1v4h-1zM638,690h1v1h-1zM639,688h1v4h-1zM640,686h1v3h-1zM641,686h1v3h-1zM642,688h1v4h-1zM643,685h1v10h-1zM644,684h1v6h-1zM645,684h1v3h-1zM646,686h1v4h-1zM647,684h1v4h-1zM648,684h1v7h-1zM649,686h1v5h-1zM650,683h1v4h-1zM651,684h1v7h-1zM652,687h1v4h-1zM653,684h1v4h-1zM654,685h1v4h-1zM655,688h1v4h-1zM656,685h1v4h-1zM657,688h1v3h-1zM658,687h1v2h-1zM659,688h1v2h-1zM660,688h1v2h-1zM661,686h1v3h-1zM662,680h1v7h-1zM663,684h1v5h-1zM664,688h1v3h-1zM665,690h1v2h-1zM666,690h1v1h-1zM667,684h1v7h-1zM668,686h1v10h-1zM669,683h1v4h-1zM670,683h1v10h-1zM671,688h1v6h-1zM672,684h1v6h-1zM673,684h1v4h-1zM674,687h1v1h-1zM675,687h1v6h-1zM676,684h1v9h-1zM677,685h1v6h-1zM678,690h1v4h-1zM679,687h1v4h-1zM680,684h1v8h-1zM681,686h1v3h-1zM682,685h1v4h-1zM683,686h1v7h-1zM684,691h1v2h-1zM685,683h1v9h-1zM686,683h1v1h-1zM687,683h1v10h-1zM688,686h1v7h-1zM689,682h1v5h-1zM690,682h1v5h-1zM691,686h1v3h-1zM692,688h1v1h-1zM693,688h1v3h-1zM694,688h1v4h-1zM695,688h1v3h-1zM696,685h1v4h-1zM697,685h1v2h-1zM698,686h1v2h-1zM699,686h1v3h-1zM700,688h1v4h-1zM701,689h1v3h-1zM702,685h1v5h-1zM703,685h1v5h-1zM704,685h1v5h-1zM705,685h1v6h-1zM706,684h1v7h-1zM707,684h1v5h-1zM708,688h1v2h-1zM709,688h1v2h-1zM710,686h1v3h-1zM711,685h1v6h-1zM712,690h1v5h-1zM713,686h1v6h-1zM714,686h1v6h-1zM715,684h1v8h-1zM716,691h1v3h-1zM717,681h1v13h-1zM718,683h1v3h-1zM719,685h1v10h-1zM720,687h1v8h-1zM721,687h1v4h-1zM722,686h1v5h-1zM723,686h1v5h-1zM724,690h1v1h-1zM725,689h1v3h-1zM726,690h1v2h-1zM727,685h1v6h-1zM728,680h1v6h-1zM729,684h1v7h-1zM730,690h1v2h-1zM731,689h1v2h-1zM732,690h1v2h-1zM733,690h1v7h-1zM734,681h1v16h-1zM735,681h1v11h-1zM736,686h1v6h-1zM737,688h1v5h-1zM738,688h1v3h-1zM739,690h1v2h-1zM740,687h1v5h-1zM741,683h1v8h-1zM742,690h1v7h-1zM743,685h1v7h-1zM744,685h1v3h-1zM745,686h1v1h-1zM746,685h1v4h-1zM747,687h1v4h-1zM748,690h1v4h-1zM749,684h1v7h-1zM750,688h1v4h-1zM751,684h1v5h-1zM752,687h1v4h-1zM753,690h1v2h-1zM754,688h1v4h-1zM755,685h1v4h-1zM756,686h1v3h-1zM757,685h1v6h-1zM758,684h1v2h-1zM759,684h1v5h-1zM760,686h1v3h-1zM761,686h1v3h-1zM762,687h1v2h-1zM763,688h1v3h-1zM764,689h1v3h-1zM765,691h1v1h-1zM766,684h1v8h-1zM767,688h1v5h-1zM768,686h1v5h-1zM769,686h1v1h-1zM770,686h1v1h-1zM771,686h1v5h-1zM772,685h1v6h-1zM773,687h1v3h-1zM774,688h1v1h-1zM775,687h1v3h-1zM776,685h1v5h-1zM777,685h1v7h-1zM778,684h1v8h-1zM779,683h1v6h-1zM780,687h1v3h-1zM781,689h1v3h-1zM782,687h1v3h-1zM783,689h1v3h-1zM784,690h1v2h-1zM785,690h1v2h-1zM786,685h1v7h-1zM787,686h1v5h-1zM788,688h1v4h-1zM789,686h1v3h-1zM790,687h1v3h-1zM791,687h1v6h-1zM792,682h1v7h-1zM793,686h1v2h-1zM794,687h1v2h-1zM795,684h1v5h-1zM796,686h1v3h-1zM797,688h1v3h-1zM798,688h1v4h-1zM799,686h1v3h-1zM800,686h1v5h-1zM801,684h1v11h-1zM802,684h1v4h-1zM803,687h1v7h-1zM804,682h1v7h-1zM805,680h1v5h-1zM806,684h1v4h-1zM807,686h1v2h-1zM808,686h1v5h-1zM809,684h1v4h-1zM810,686h1v4h-1zM811,686h1v3h-1zM812,683h1v6h-1zM813,686h1v5h-1zM814,688h1v4h-1zM815,685h1v5h-1zM816,687h1v7h-1zM817,681h1v7h-1zM818,684h1v3h-1zM819,682h1v5h-1zM820,678h1v9h-1zM821,686h1v8h-1zM822,688h1v2h-1zM823,689h1v6h-1zM824,688h1v7h-1zM825,688h1v3h-1zM826,686h1v5h-1zM827,683h1v4h-1zM828,683h1v2h-1zM829,684h1v3h-1zM830,686h1v5h-1zM831,687h1v4h-1zM832,688h1v4h-1zM833,688h1v5h-1zM834,688h1v3h-1zM835,690h1v3h-1zM836,686h1v6h-1zM837,683h1v4h-1zM838,685h1v6h-1zM839,688h1v3h-1zM840,685h1v4h-1zM841,685h1v12h-1zM842,685h1v6h-1zM843,688h1v5h-1zM844,690h1v4h-1zM845,686h1v5h-1zM846,690h1v5h-1zM847,685h1v11h-1zM848,695h1v1h-1zM849,692h1v4h-1zM850,690h1v3h-1zM851,686h1v5h-1zM852,682h1v9h-1zM853,690h1v3h-1zM854,683h1v10h-1zM855,686h1v5h-1zM856,682h1v7h-1zM857,688h1v6h-1zM858,686h1v5h-1zM859,687h1v2h-1zM860,682h1v8h-1zM861,682h1v7h-1zM862,683h1v4h-1zM863,686h1v3h-1zM864,685h1v3h-1zM865,685h1v2h-1zM866,684h1v12h-1zM867,684h1v7h-1zM868,688h1v5h-1zM869,691h1v2h-1zM870,690h1v3h-1zM871,686h1v5h-1zM872,689h1v4h-1zM873,691h1v1h-1zM874,686h1v6h-1zM875,686h1v6h-1zM876,687h1v5h-1zM877,686h1v5h-1zM878,685h1v2h-1zM879,685h1v4h-1zM880,688h1v5h-1zM881,691h1v3h-1zM882,688h1v4h-1zM883,687h1v2h-1zM884,687h1v4h-1zM885,690h1v2h-1zM886,685h1v7h-1zM887,684h1v2h-1zM888,684h1v6h-1zM889,689h1v2h-1zM890,689h1v2h-1zM891,689h1v1h-1zM892,686h1v4h-1zM893,686h1v5h-1zM894,688h1v4h-1zM895,684h1v5h-1zM896,688h1v4h-1zM897,686h1v6h-1zM898,686h1v10h-1zM899,692h1v4h-1zM900,686h1v7h-1zM901,681h1v6h-1zM902,684h1v5h-1zM903,683h1v4h-1zM904,684h1v7h-1zM905,685h1v4h-1zM906,688h1v4h-1zM907,687h1v4h-1zM908,690h1v5h-1zM909,689h1v4h-1zM910,688h1v6h-1zM911,682h1v7h-1zM912,686h1v6h-1zM913,685h1v7h-1zM914,682h1v10h-1zM915,684h1v9h-1zM916,684h1v5h-1zM917,685h1v2h-1zM918,684h1v3h-1zM919,686h1v3h-1zM920,684h1v4h-1zM921,687h1v4h-1zM922,690h1v1h-1zM923,684h1v7h-1zM924,684h1v6h-1zM925,684h1v6h-1zM926,686h1v5h-1zM927,687h1v6h-1zM928,685h1v4h-1zM929,688h1v4h-1z" fill="#FFFF00"/><rect x="68" y="755" width="5" height="1" fill="#000" /><text x="65" y="759" font-family="Liberation Sans" font-size="11" font-weight="normal" fill="#000" text-anchor="end" >0</text><rect x="68" y="724" width="5" height="1" fill="#000" /><text x="65" y="728" font-family="Liberation Sans" font-size="11" font-weight="normal" fill="#000" text-anchor="end" >5</text><rect x="68" y="693" width="5" height="1" fill="#000" /><text x="65" y="697" font-family="Liberation Sans" font-size="11" font-weight="normal" fill="#000" text-anchor="end" >10</text><rect x="68" y="662" width="5" height="1" fill="#000" /><text x="65" y="666" font-family="Liberation Sans" font-size="11" font-weight="normal" fill="#000" text-anchor="end" >15</text><rect x="68" y="631" width="5" height="1" fill="#000" /><text x="65" y="635" font-family="Liberation Sans" font-size="11" font-weight="normal" fill="#000" text-anchor="end" >20</text><rect x="75" y="758" width="1" height="5" fill="#000" /><text x="75.5" y="774" font-family="Liberation Sans" font-size="11" font-weight="normal" fill="#000" text-anchor="middle" >0</text><rect x="82" y="758" width="1" height="3" fill="#000" /><rect x="88" y="758" width="1" height="3" fill="#000" /><rect x="95" y="758" width="1" height="3" fill="#000" /><rect x="101" y="758" width="1" height="3" fill="#000" /><rect x="108" y="758" width="1" height="3" fill="#000" /><rect x="114" y="758" width="1" height="3" fill="#000" /><rect x="121" y="758" width="1" height="3" fill="#000" /><rect x="128" y="758" width="1" height="3" fill="#000" /><rect x="134" y="758" width="1" height="3" fill="#000" /><rect x="141" y="758" width="1" height="3" fill="#000" /><rect x="147" y="758" width="1" height="3" fill="#000" /><rect x="154" y="758" width="1" height="3" fill="#000" /><rect x="160" y="758" width="1" height="5" fill="#000" /><text x="160.5" y="774" font-family="Liberation Sans" font-size="11" font-weight="normal" fill="#000" text-anchor="middle" >128</text><rect x="167" y="758" width="1" height="3" fill="#000" /><rect x="174" y="758" width="1" height="3" fill="#000" /><rect x="180" y="758" width="1" height="3" fill="#000" /><rect x="187" y="758" width="1" height="3" fill="#000" /><rect x="193" y="758" width="1" height="3" fill="#000" /><rect x="200" y="758" width="1" height="3" fill="#000" /><rect x="206" y="758" width="1" height="3" fill="#000" /><rect x="213" y="758" width="1" height="3" fill="#000" /><rect x="220" y="758" width="1" height="3" fill="#000" /><rect x="226" y="758" width="1" height="3" fill="#000" /><rect x="233" y="758" width="1" height="3" fill="#000" /><rect x="239" y="758" width="1" height="3" fill="#000" /><rect x="246" y="758" width="1" height="5" fill="#000" /><text x="246.5" y="774" font-family="Liberation Sans" font-size="11" font-weight="normal" fill="#000" text-anchor="middle" >256</text><rect x="252" y="758" width="1" height="3" fill="#000" /><rect x="259" y="758" width="1" height="3" fill="#000" /><rect x="266" y="758" width="1" height="3" fill="#000" /><rect x="272" y="758" width="1" height="3" fill="#000" /><rect x="279" y="758" width="1" height="3" fill="#000" /><rect x="285" y="758" width="1" height="3" fill="#000" /><rect x="292" y="758" width="1" height="3" fill="#000" /><rect x="298" y="758" width="1" height="3" fill="#000" /><rect x="305" y="758" width="1" height="3" fill="#000" /><rect x="311" y="758" width="1" height="3" fill="#000" /><rect x="318" y="758" width="1" height="3" fill="#000" /><rect x="325" y="758" width="1" height="3" fill="#000" /><rect x="331" y="758" width="1" height="5" fill="#000" /><text x="331.5" y="774" font-family="Liberation Sans" font-size="11" font-weight="normal" fill="#000" text-anchor="middle" >384</text><rect x="338" y="758" width="1" height="3" fill="#000" /><rect x="344" y="758" width="1" height="3" fill="#000" /><rect x="351" y="758" width="1" height="3" fill="#000" /><rect x="357" y="758" width="1" height="3" fill="#000" /><rect x="364" y="758" width="1" height="3" fill="#000" /><rect x="371" y="758" width="1" height="3" fill="#000" /><rect x="377" y="758" width="1" height="3" fill="#000" /><rect x="384" y="758" width="1" height="3" fill="#000" /><rect x="390" y="758" width="1" height="3" fill="#000" /><rect x="397" y="758" width="1" height="3" fill="#000" /><rect x="403" y="758" width="1" height="3" fill="#000" /><rect x="410" y="758" width="1" height="3" fill="#000" /><rect x="417" y="758" width="1" height="5" fill="#000" /><text x="417.5" y="774" font-family="Liberation Sans" font-size="11" font-weight="normal" fill="#000" text-anchor="middle" >512</text><rect x="423" y="758" width="1" height="3" fill="#000" /><rect x="430" y="758" width="1" height="3" fill="#000" /><rect x="436" y="758" width="1" height="3" fill="#000" /><rect x="443" y="758" width="1" height="3" fill="#000" /><rect x="449" y="758" width="1" height="3" fill="#000" /><rect x="456" y="758" width="1" height="3" fill="#000" /><rect x="463" y="758" width="1" height="3" fill="#000" /><rect x="469" y="758" width="1" height="3" fill="#000" /><rect x="476" y="758" width="1" height="3" fill="#000" /><rect x="482" y="758" width="1" height="3" fill="#000" /><rect x="489" y="758" width="1" height="3" fill="#000" /><rect x="495" y="758" width="1" height="3" fill="#000" /><rect x="502" y="758" width="1" height="5" fill="#000" /><text x="502.5" y="774" font-family="Liberation Sans" font-size="11" font-weight="normal" fill="#000" text-anchor="middle" >640</text><rect x="509" y="758" width="1" height="3" fill="#000" /><rect x="515" y="758" width="1" height="3" fill="#000" /><rect x="522" y="758" width="1" height="3" fill="#000" /><rect x="528" y="758" width="1" height="3" fill="#000" /><rect x="535" y="758" width="1" height="3" fill="#000" /><rect x="541" y="758" width="1" height="3" fill="#000" /><rect x="548" y="758" width="1" height="3" fill="#000" /><rect x="555" y="758" width="1" height="3" fill="#000" /><rect x="561" y="758" width="1" height="3" fill="#000" /><rect x="568" y="758" width="1" height="3" fill="#000" /><rect x="574" y="758" width="1" height="3" fill="#000" /><rect x="581" y="758" width="1" height="3" fill="#000" /><rect x="587" y="758" width="1" height="5" fill="#000" /><text x="587.5" y="774" font-family="Liberation Sans" font-size="11" font-weight="normal" fill="#000" text-anchor="middle" >768</text><rect x="594" y="758" width="1" height="3" fill="#000" /><rect x="601" y="758" width="1" height="3" fill="#000" /><rect x="607" y="758" width="1" height="3" fill="#000" /><rect x="614" y="758" width="1" height="3" fill="#000" /><rect x="620" y="758" width="1" height="3" fill="#000" /><rect x="627" y="758" width="1" height="3" fill="#000" /><rect x="633" y="758" width="1" height="3" fill="#000" /><rect x="640" y="758" width="1" height="3" fill="#000" /><rect x="647" y="758" width="1" height="3" fill="#000" /><rect x="653" y="758" width="1" height="3" fill="#000" /><rect x="660" y="758" width="1" height="3" fill="#000" /><rect x="666" y="758" width="1" height="3" fill="#000" /><rect x="673" y="758" width="1" height="5" fill="#000" /><text x="673.5" y="774" font-family="Liberation Sans" font-size="11" font-weight="normal" fill="#000" text-anchor="middle" >896</text><rect x="679" y="758" width="1" height="3" fill="#000" /><rect x="686" y="758" width="1" height="3" fill="#000" /><rect x="693" y="758" width="1" height="3" fill="#000" /><rect x="699" y="758" width="1" height="3" fill="#000" /><rect x="706" y="758" width="1" height="3" fill="#000" /><rect x="712" y="758" width="1" height="3" fill="#000" /><rect x="719" y="758" width="1" height="3" fill="#000" /><rect x="725" y="758" width="1" height="3" fill="#000" /><rect x="732" y="758" width="1" height="3" fill="#000" /><rect x="738" y="758" width="1" height="3" fill="#000" /><rect x="745" y="758" width="1" height="3" fill="#000" /><rect x="752" y="758" width="1" height="3" fill="#000" /><rect x="758" y="758" width="1" height="5" fill="#000" /><text x="758.5" y="774" font-family="Liberation Sans" font-size="11" font-weight="normal" fill="#000" text-anchor="middle" >1024</text><rect x="765" y="758" width="1" height="3" fill="#000" /><rect x="771" y="758" width="1" height="3" fill="#000" /><rect x="778" y="758" width="1" height="3" fill="#000" /><rect x="784" y="758" width="1" height="3" fill="#000" /><rect x="791" y="758" width="1" height="3" fill="#000" /><rect x="798" y="758" width="1" height="3" fill="#000" /><rect x="804" y="758" width="1" height="3" fill="#000" /><rect x="811" y="758" width="1" height="3" fill="#000" /><rect x="817" y="758" width="1" height="3" fill="#000" /><rect x="824" y="758" width="1" height="3" fill="#000" /><rect x="830" y="758" width="1" height="3" fill="#000" /><rect x="837" y="758" width="1" height="3" fill="#000" /><rect x="844" y="758" width="1" height="5" fill="#000" /><text x="844.5" y="774" font-family="Liberation Sans" font-size="11" font-weight="normal" fill="#000" text-anchor="middle" >1152</text><rect x="850" y="758" width="1" height="3" fill="#000" /><rect x="857" y="758" width="1" height="3" fill="#000" /><rect x="863" y="758" width="1" height="3" fill="#000" /><rect x="870" y="758" width="1" height="3" fill="#000" /><rect x="876" y="758" width="1" height="3" fill="#000" /><rect x="883" y="758" width="1" height="3" fill="#000" /><rect x="890" y="758" width="1" height="3" fill="#000" /><rect x="896" y="758" width="1" height="3" fill="#000" /><rect x="903" y="758" width="1" height="3" fill="#000" /><rect x="909" y="758" width="1" height="3" fill="#000" /><rect x="916" y="758" width="1" height="3" fill="#000" /><rect x="922" y="758" width="1" height="3" fill="#000" /><rect x="929" y="758" width="1" height="5" fill="#000" /><text x="929.5" y="774" font-family="Liberation Sans" font-size="11" font-weight="normal" fill="#000" text-anchor="middle" >1280</text><text x="0" y="0" font-family="Liberation Sans" font-size="11" font-weight="normal" fill="#000" text-anchor="middle" textLength="121" lengthAdjust="spacingAndGlyphs" transform="translate(49,690.0) rotate(-90)">Output noise (mV) @ 2fC</text><rect x="34" y="781" width="920" height="160" fill="#C0C0C0" /><rect x="34" y="781" width="13" height="160" fill="#D0D0D0" /><rect x="941" y="781" width="13" height="160" fill="url(#g74)" /><rect x="34" y="781" width="917" height="1" fill="#DCDCDC" /><rect x="34" y="940" width="920" height="1" fill="#8C8C8C" /><rect x="81" y="790" width="849" height="126" fill="#000" /><rect x="930" y="790" width="1" height="127" fill="#E4E4E4" /><rect x="81" y="916" width="850" height="1" fill="#E4E4E4" /><rect x="166" y="790" width="1" height="126" fill="#00FF00" /><rect x="251" y="790" width="1" height="126" fill="#00FF00" /><rect x="335" y="790" width="1" height="126" fill="#00FF00" /><rect x="420" y="790" width="1" height="126" fill="#00FF00" /><rect x="505" y="790" width="1" height="126" fill="#00FF00" /><rect x="590" y="790" width="1" height="126" fill="#00FF00" /><rect x="675" y="790" width="1" height="126" fill="#00FF00" /><rect x="759" y="790" width="1" height="126" fill="#00FF00" /><rect x="844" y="790" width="1" height="126" fill="#00FF00" /><path d="M81,818h1v4h-1zM82,814h1v5h-1zM83,818h1v5h-1zM84,817h1v7h-1zM85,816h1v5h-1zM86,813h1v14h-1zM87,817h1v6h-1zM88,816h1v5h-1zM89,820h1v4h-1zM90,814h1v10h-1zM91,814h1v11h-1zM92,820h1v3h-1zM93,817h1v6h-1zM94,812h1v17h-1zM95,824h1v4h-1zM96,824h1v1h-1zM97,816h1v9h-1zM98,808h1v21h-1zM99,818h1v11h-1zM100,817h1v5h-1zM101,821h1v4h-1zM102,814h1v11h-1zM103,816h1v5h-1zM104,820h1v2h-1zM105,813h1v8h-1zM106,813h1v10h-1zM107,817h1v6h-1zM108,812h1v6h-1zM109,814h1v5h-1zM110,811h1v9h-1zM111,811h1v15h-1zM112,811h1v10h-1zM113,811h1v6h-1zM114,816h1v2h-1zM115,808h1v11h-1zM116,817h1v10h-1zM117,817h1v11h-1zM118,817h1v4h-1zM119,814h1v10h-1zM120,819h1v4h-1zM121,819h1v8h-1zM122,820h1v8h-1zM123,812h1v11h-1zM124,806h1v16h-1zM125,814h1v5h-1zM126,816h1v5h-1zM127,820h1v3h-1zM128,815h1v9h-1zM129,815h1v14h-1zM130,822h1v7h-1zM131,821h1v2h-1zM132,820h1v2h-1zM133,817h1v4h-1zM134,815h1v7h-1zM135,820h1v8h-1zM136,812h1v9h-1zM137,812h1v12h-1zM138,816h1v5h-1zM139,817h1v6h-1zM140,817h1v11h-1zM141,820h1v5h-1zM142,819h1v6h-1zM143,819h1v5h-1zM144,818h1v6h-1zM145,816h1v5h-1zM146,817h1v9h-1zM147,817h1v4h-1zM148,820h1v4h-1zM149,818h1v5h-1zM150,817h1v5h-1zM151,818h1v8h-1zM152,816h1v5h-1zM153,816h1v7h-1zM154,820h1v3h-1zM155,816h1v5h-1zM156,815h1v2h-1zM157,815h1v4h-1zM158,818h1v2h-1zM159,819h1v9h-1zM160,820h1v10h-1zM161,812h1v14h-1zM162,812h1v6h-1zM163,817h1v4h-1zM164,819h1v6h-1zM165,810h1v19h-1zM166,813h1v13h-1zM167,822h1v4h-1zM168,819h1v4h-1zM169,817h1v4h-1zM170,815h1v3h-1zM171,816h1v3h-1zM172,817h1v4h-1zM173,820h1v5h-1zM174,820h1v5h-1zM175,815h1v6h-1zM176,816h1v11h-1zM177,816h1v6h-1zM178,819h1v11h-1zM179,815h1v15h-1zM180,820h1v6h-1zM181,820h1v4h-1zM182,817h1v7h-1zM183,820h1v4h-1zM184,816h1v5h-1zM185,818h1v5h-1zM186,813h1v10h-1zM187,813h1v14h-1zM188,808h1v22h-1zM189,808h1v15h-1zM190,818h1v5h-1zM191,816h1v5h-1zM192,820h1v4h-1zM193,815h1v9h-1zM194,815h1v1h-1zM195,815h1v7h-1zM196,821h1v5h-1zM197,825h1v4h-1zM198,813h1v14h-1zM199,813h1v12h-1zM200,820h1v4h-1zM201,816h1v5h-1zM202,810h1v7h-1zM203,810h1v11h-1zM204,820h1v4h-1zM205,822h1v3h-1zM206,819h1v6h-1zM207,814h1v9h-1zM208,819h1v4h-1zM209,817h1v3h-1zM210,818h1v13h-1zM211,822h1v9h-1zM212,820h1v3h-1zM213,818h1v3h-1zM214,812h1v7h-1zM215,808h1v9h-1zM216,815h1v7h-1zM217,815h1v10h-1zM218,821h1v5h-1zM219,813h1v13h-1zM220,818h1v11h-1zM221,816h1v10h-1zM222,815h1v4h-1zM223,818h1v4h-1zM224,817h1v3h-1zM225,818h1v2h-1zM226,819h1v6h-1zM227,818h1v9h-1zM228,813h1v12h-1zM229,822h1v3h-1zM230,822h1v3h-1zM231,820h1v5h-1zM232,819h1v2h-1zM233,819h1v3h-1zM234,821h1v6h-1zM235,826h1v4h-1zM236,814h1v13h-1zM237,824h1v11h-1zM238,824h1v7h-1zM239,815h1v10h-1zM240,809h1v7h-1zM241,814h1v7h-1zM242,816h1v6h-1zM243,811h1v6h-1zM244,811h1v8h-1zM245,810h1v9h-1zM246,817h1v2h-1zM247,817h1v2h-1zM248,816h1v3h-1zM249,816h1v4h-1zM250,814h1v3h-1zM251,815h1v4h-1zM252,818h1v5h-1zM253,822h1v4h-1zM254,824h1v3h-1zM255,817h1v8h-1zM256,812h1v13h-1zM257,815h1v10h-1zM258,815h1v9h-1zM259,816h1v8h-1zM260,818h1v6h-1zM261,817h1v6h-1zM262,822h1v7h-1zM263,820h1v7h-1zM264,810h1v11h-1zM265,810h1v3h-1zM266,809h1v5h-1zM267,813h1v10h-1zM268,822h1v5h-1zM269,818h1v6h-1zM270,818h1v5h-1zM271,818h1v7h-1zM272,813h1v6h-1zM273,818h1v5h-1zM274,818h1v5h-1zM275,811h1v16h-1zM276,811h1v8h-1zM277,818h1v3h-1zM278,815h1v4h-1zM279,816h1v7h-1zM280,819h1v4h-1zM281,820h1v3h-1zM282,813h1v8h-1zM283,809h1v5h-1zM284,812h1v5h-1zM285,815h1v4h-1zM286,818h1v5h-1zM287,822h1v4h-1zM288,818h1v5h-1zM289,815h1v6h-1zM290,812h1v13h-1zM291,809h1v6h-1zM292,814h1v7h-1zM293,815h1v4h-1zM294,817h1v4h-1zM295,814h1v9h-1zM296,814h1v7h-1zM297,820h1v3h-1zM298,813h1v13h-1zM299,816h1v5h-1zM300,814h1v4h-1zM301,812h1v3h-1zM302,812h1v11h-1zM303,816h1v5h-1zM304,820h1v5h-1zM305,818h1v8h-1zM306,817h1v2h-1zM307,817h1v8h-1zM308,817h1v8h-1zM309,817h1v5h-1zM310,821h1v7h-1zM311,817h1v6h-1zM312,819h1v3h-1zM313,817h1v4h-1zM314,817h1v8h-1zM315,819h1v4h-1zM316,822h1v5h-1zM317,822h1v4h-1zM318,819h1v10h-1zM319,817h1v3h-1zM320,817h1v6h-1zM321,820h1v3h-1zM322,821h1v6h-1zM323,814h1v11h-1zM324,814h1v14h-1zM325,813h1v15h-1zM326,817h1v6h-1zM327,812h1v6h-1zM328,813h1v4h-1zM329,814h1v4h-1zM330,817h1v8h-1zM331,824h1v4h-1zM332,819h1v6h-1zM333,820h1v2h-1zM334,816h1v5h-1zM335,816h1v4h-1zM336,812h1v7h-1zM337,812h1v14h-1zM338,824h1v7h-1zM339,818h1v7h-1zM340,822h1v5h-1zM341,818h1v7h-1zM342,818h1v3h-1zM343,820h1v2h-1zM344,815h1v6h-1zM345,816h1v5h-1zM346,820h1v4h-1zM347,819h1v4h-1zM348,820h1v5h-1zM349,817h1v4h-1zM350,818h1v2h-1zM351,819h1v2h-1zM352,818h1v2h-1zM353,817h1v7h-1zM354,823h1v7h-1zM355,827h1v5h-1zM356,814h1v18h-1zM357,814h1v10h-1zM358,816h1v9h-1zM359,818h1v4h-1zM360,818h1v5h-1zM361,817h1v10h-1zM362,817h1v9h-1zM363,816h1v5h-1zM364,820h1v8h-1zM365,814h1v10h-1zM366,823h1v5h-1zM367,817h1v11h-1zM368,817h1v11h-1zM369,820h1v8h-1zM370,820h1v6h-1zM371,814h1v12h-1zM372,819h1v6h-1zM373,819h1v4h-1zM374,811h1v10h-1zM375,811h1v9h-1zM376,815h1v5h-1zM377,815h1v9h-1zM378,818h1v3h-1zM379,815h1v5h-1zM380,811h1v6h-1zM381,816h1v9h-1zM382,821h1v6h-1zM383,813h1v9h-1zM384,813h1v10h-1zM385,808h1v17h-1zM386,814h1v6h-1zM387,810h1v11h-1zM388,820h1v6h-1zM389,822h1v3h-1zM390,824h1v5h-1zM391,818h1v11h-1zM392,818h1v4h-1zM393,818h1v4h-1zM394,816h1v10h-1zM395,814h1v15h-1zM396,818h1v5h-1zM397,816h1v5h-1zM398,820h1v5h-1zM399,824h1v2h-1zM400,820h1v5h-1zM401,817h1v4h-1zM402,818h1v2h-1zM403,816h1v5h-1zM404,820h1v4h-1zM405,812h1v9h-1zM406,809h1v8h-1zM407,816h1v3h-1zM408,815h1v6h-1zM409,820h1v5h-1zM410,819h1v4h-1zM411,807h1v13h-1zM412,816h1v9h-1zM413,808h1v9h-1zM414,812h1v20h-1zM415,807h1v22h-1zM416,811h1v7h-1zM417,814h1v5h-1zM418,818h1v3h-1zM419,820h1v7h-1zM420,816h1v11h-1zM421,816h1v5h-1zM422,810h1v14h-1zM423,810h1v9h-1zM424,816h1v3h-1zM425,818h1v3h-1zM426,820h1v1h-1zM427,820h1v3h-1zM428,820h1v9h-1zM429,828h1v8h-1zM430,819h1v10h-1zM431,816h1v4h-1zM432,819h1v4h-1zM433,816h1v5h-1zM434,810h1v7h-1zM435,814h1v7h-1zM436,816h1v8h-1zM437,817h1v2h-1zM438,817h1v2h-1zM439,818h1v3h-1zM440,815h1v6h-1zM441,818h1v8h-1zM442,823h1v7h-1zM443,823h1v3h-1zM444,821h1v5h-1zM445,814h1v8h-1zM446,814h1v5h-1zM447,817h1v2h-1zM448,817h1v8h-1zM449,820h1v3h-1zM450,819h1v2h-1zM451,818h1v3h-1zM452,820h1v4h-1zM453,820h1v8h-1zM454,819h1v5h-1zM455,822h1v2h-1zM456,814h1v9h-1zM457,816h1v5h-1zM458,820h1v4h-1zM459,823h1v9h-1zM460,819h1v13h-1zM461,814h1v11h-1zM462,813h1v4h-1zM463,816h1v11h-1zM464,818h1v5h-1zM465,820h1v3h-1zM466,820h1v5h-1zM467,824h1v5h-1zM468,821h1v8h-1zM469,815h1v17h-1zM470,815h1v10h-1zM471,824h1v4h-1zM472,825h1v3h-1zM473,818h1v8h-1zM474,812h1v7h-1zM475,812h1v12h-1zM476,814h1v10h-1zM477,808h1v15h-1zM478,819h1v4h-1zM479,822h1v3h-1zM480,824h1v3h-1zM481,823h1v4h-1zM482,820h1v4h-1zM483,816h1v5h-1zM484,811h1v6h-1zM485,810h1v6h-1zM486,815h1v5h-1zM487,817h1v3h-1zM488,817h1v8h-1zM489,816h1v9h-1zM490,816h1v4h-1zM491,818h1v2h-1zM492,818h1v2h-1zM493,818h1v4h-1zM494,814h1v7h-1zM495,820h1v6h-1zM496,814h1v17h-1zM497,814h1v13h-1zM498,814h1v6h-1zM499,819h1v8h-1zM500,817h1v13h-1zM501,816h1v3h-1zM502,814h1v3h-1zM503,816h1v4h-1zM504,817h1v2h-1zM505,818h1v5h-1zM506,814h1v17h-1zM507,824h1v7h-1zM508,816h1v9h-1zM509,816h1v6h-1zM510,821h1v9h-1zM511,823h1v7h-1zM512,821h1v3h-1zM513,821h1v3h-1zM514,823h1v4h-1zM515,821h1v6h-1zM516,818h1v4h-1zM517,820h1v5h-1zM518,819h1v6h-1zM519,821h1v4h-1zM520,818h1v4h-1zM521,818h1v6h-1zM522,812h1v7h-1zM523,812h1v10h-1zM524,815h1v7h-1zM525,819h1v5h-1zM526,819h1v8h-1zM527,820h1v6h-1zM528,815h1v6h-1zM529,816h1v5h-1zM530,820h1v8h-1zM531,806h1v22h-1zM532,814h1v8h-1zM533,818h1v7h-1zM534,819h1v4h-1zM535,817h1v11h-1zM536,819h1v9h-1zM537,814h1v8h-1zM538,808h1v11h-1zM539,815h1v5h-1zM540,812h1v4h-1zM541,812h1v12h-1zM542,821h1v3h-1zM543,821h1v6h-1zM544,824h1v3h-1zM545,821h1v4h-1zM546,820h1v3h-1zM547,820h1v2h-1zM548,820h1v3h-1zM549,817h1v6h-1zM550,817h1v4h-1zM551,815h1v9h-1zM552,817h1v3h-1zM553,819h1v4h-1zM554,822h1v5h-1zM555,813h1v17h-1zM556,818h1v6h-1zM557,812h1v11h-1zM558,816h1v9h-1zM559,819h1v9h-1zM560,818h1v2h-1zM561,818h1v19h-1zM562,810h1v17h-1zM563,806h1v12h-1zM564,817h1v12h-1zM565,821h1v8h-1zM566,812h1v17h-1zM567,812h1v4h-1zM568,815h1v11h-1zM569,818h1v5h-1zM570,815h1v7h-1zM571,816h1v6h-1zM572,814h1v5h-1zM573,810h1v13h-1zM574,814h1v9h-1zM575,814h1v1h-1zM576,814h1v11h-1zM577,824h1v7h-1zM578,820h1v9h-1zM579,820h1v6h-1zM580,825h1v3h-1zM581,821h1v5h-1zM582,819h1v3h-1zM583,819h1v2h-1zM584,815h1v8h-1zM585,808h1v9h-1zM586,816h1v5h-1zM587,820h1v5h-1zM588,813h1v14h-1zM589,818h1v6h-1zM590,819h1v4h-1zM591,814h1v9h-1zM592,814h1v6h-1zM593,819h1v4h-1zM594,822h1v4h-1zM595,809h1v14h-1zM596,809h1v13h-1zM597,815h1v6h-1zM598,817h1v4h-1zM599,816h1v3h-1zM600,812h1v5h-1zM601,812h1v9h-1zM602,820h1v6h-1zM603,818h1v12h-1zM604,815h1v12h-1zM605,815h1v5h-1zM606,818h1v6h-1zM607,813h1v9h-1zM608,816h1v11h-1zM609,820h1v4h-1zM610,821h1v3h-1zM611,819h1v5h-1zM612,817h1v12h-1zM613,828h1v11h-1zM614,822h1v11h-1zM615,818h1v5h-1zM616,818h1v2h-1zM617,817h1v2h-1zM618,817h1v9h-1zM619,819h1v7h-1zM620,818h1v7h-1zM621,811h1v9h-1zM622,813h1v6h-1zM623,817h1v5h-1zM624,817h1v5h-1zM625,819h1v4h-1zM626,821h1v2h-1zM627,812h1v13h-1zM628,814h1v3h-1zM629,814h1v6h-1zM630,809h1v6h-1zM631,813h1v12h-1zM632,809h1v16h-1zM633,809h1v6h-1zM634,811h1v4h-1zM635,811h1v22h-1zM636,817h1v16h-1zM637,817h1v2h-1zM638,818h1v9h-1zM639,826h1v6h-1zM640,823h1v6h-1zM641,819h1v5h-1zM642,819h1v7h-1zM643,822h1v4h-1zM644,814h1v9h-1zM645,813h1v3h-1zM646,812h1v4h-1zM647,808h1v22h-1zM648,822h1v5h-1zM649,809h1v14h-1zM650,809h1v8h-1zM651,816h1v8h-1zM652,823h1v8h-1zM653,830h1v5h-1zM654,824h1v11h-1zM655,820h1v5h-1zM656,815h1v6h-1zM657,815h1v10h-1zM658,822h1v3h-1zM659,823h1v3h-1zM660,816h1v9h-1zM661,817h1v16h-1zM662,810h1v8h-1zM663,810h1v13h-1zM664,815h1v4h-1zM665,818h1v8h-1zM666,819h1v7h-1zM667,820h1v12h-1zM668,817h1v15h-1zM669,820h1v7h-1zM670,822h1v5h-1zM671,816h1v7h-1zM672,815h1v6h-1zM673,815h1v11h-1zM674,813h1v3h-1zM675,813h1v5h-1zM676,813h1v8h-1zM677,815h1v6h-1zM678,815h1v4h-1zM679,818h1v6h-1zM680,814h1v6h-1zM681,814h1v7h-1zM682,816h1v10h-1zM683,816h1v12h-1zM684,816h1v4h-1zM685,819h1v4h-1zM686,819h1v6h-1zM687,815h1v5h-1zM688,815h1v8h-1zM689,822h1v6h-1zM690,818h1v7h-1zM691,814h1v5h-1zM692,816h1v6h-1zM693,820h1v4h-1zM694,821h1v7h-1zM695,824h1v6h-1zM696,817h1v8h-1zM697,816h1v2h-1zM698,816h1v5h-1zM699,820h1v7h-1zM700,826h1v6h-1zM701,825h1v8h-1zM702,821h1v5h-1zM703,821h1v4h-1zM704,824h1v3h-1zM705,817h1v8h-1zM706,818h1v4h-1zM707,816h1v6h-1zM708,814h1v18h-1zM709,821h1v6h-1zM710,819h1v3h-1zM711,816h1v4h-1zM712,814h1v10h-1zM713,820h1v3h-1zM714,820h1v4h-1zM715,819h1v5h-1zM716,813h1v7h-1zM717,813h1v5h-1zM718,817h1v8h-1zM719,816h1v5h-1zM720,816h1v4h-1zM721,813h1v7h-1zM722,813h1v7h-1zM723,817h1v3h-1zM724,819h1v5h-1zM725,819h1v7h-1zM726,813h1v7h-1zM727,818h1v6h-1zM728,817h1v6h-1zM729,816h1v11h-1zM730,810h1v9h-1zM731,818h1v9h-1zM732,817h1v6h-1zM733,812h1v7h-1zM734,807h1v6h-1zM735,812h1v15h-1zM736,818h1v9h-1zM737,811h1v8h-1zM738,816h1v5h-1zM739,820h1v2h-1zM740,818h1v4h-1zM741,815h1v4h-1zM742,815h1v6h-1zM743,820h1v3h-1zM744,821h1v3h-1zM745,820h1v3h-1zM746,821h1v5h-1zM747,821h1v4h-1zM748,820h1v2h-1zM749,817h1v5h-1zM750,820h1v3h-1zM751,819h1v10h-1zM752,819h1v10h-1zM753,819h1v4h-1zM754,822h1v3h-1zM755,822h1v5h-1zM756,822h1v5h-1zM757,815h1v11h-1zM758,805h1v11h-1zM759,810h1v7h-1zM760,816h1v3h-1zM761,816h1v3h-1zM762,815h1v2h-1zM763,816h1v3h-1zM764,816h1v4h-1zM765,814h1v4h-1zM766,817h1v6h-1zM767,813h1v6h-1zM768,816h1v4h-1zM769,819h1v3h-1zM770,821h1v5h-1zM771,822h1v4h-1zM772,813h1v10h-1zM773,809h1v19h-1zM774,818h1v7h-1zM775,817h1v5h-1zM776,813h1v9h-1zM777,817h1v5h-1zM778,814h1v11h-1zM779,820h1v5h-1zM780,819h1v2h-1zM781,819h1v5h-1zM782,823h1v3h-1zM783,823h1v3h-1zM784,822h1v3h-1zM785,820h1v5h-1zM786,824h1v1h-1zM787,814h1v11h-1zM788,821h1v8h-1zM789,819h1v6h-1zM790,813h1v7h-1zM791,812h1v2h-1zM792,812h1v17h-1zM793,825h1v4h-1zM794,813h1v13h-1zM795,816h1v4h-1zM796,814h1v4h-1zM797,816h1v5h-1zM798,812h1v5h-1zM799,816h1v6h-1zM800,817h1v5h-1zM801,821h1v9h-1zM802,826h1v3h-1zM803,827h1v2h-1zM804,822h1v6h-1zM805,814h1v9h-1zM806,817h1v4h-1zM807,819h1v5h-1zM808,817h1v4h-1zM809,816h1v3h-1zM810,813h1v7h-1zM811,810h1v13h-1zM812,822h1v4h-1zM813,824h1v1h-1zM814,817h1v8h-1zM815,810h1v12h-1zM816,812h1v10h-1zM817,816h1v6h-1zM818,821h1v7h-1zM819,824h1v4h-1zM820,820h1v5h-1zM821,817h1v4h-1zM822,820h1v4h-1zM823,820h1v3h-1zM824,813h1v10h-1zM825,822h1v10h-1zM826,819h1v8h-1zM827,818h1v6h-1zM828,817h1v2h-1zM829,817h1v2h-1zM830,816h1v4h-1zM831,816h1v11h-1zM832,817h1v6h-1zM833,820h1v3h-1zM834,821h1v2h-1zM835,815h1v8h-1zM836,818h1v5h-1zM837,812h1v12h-1zM838,818h1v7h-1zM839,821h1v4h-1zM840,824h1v7h-1zM841,815h1v19h-1zM842,815h1v12h-1zM843,823h1v2h-1zM844,823h1v2h-1zM845,822h1v2h-1zM846,822h1v6h-1zM847,822h1v5h-1zM848,821h1v2h-1zM849,822h1v5h-1zM850,814h1v15h-1zM851,816h1v5h-1zM852,820h1v1h-1zM853,817h1v4h-1zM854,815h1v4h-1zM855,818h1v4h-1zM856,821h1v3h-1zM857,817h1v8h-1zM858,817h1v3h-1zM859,813h1v7h-1zM860,818h1v7h-1zM861,812h1v7h-1zM862,813h1v4h-1zM863,816h1v6h-1zM864,820h1v6h-1zM865,818h1v3h-1zM866,816h1v7h-1zM867,816h1v15h-1zM868,826h1v5h-1zM869,817h1v10h-1zM870,811h1v7h-1zM871,814h1v11h-1zM872,818h1v5h-1zM873,817h1v2h-1zM874,816h1v2h-1zM875,815h1v4h-1zM876,818h1v9h-1zM877,824h1v2h-1zM878,818h1v7h-1zM879,813h1v6h-1zM880,813h1v9h-1zM881,816h1v12h-1zM882,818h1v5h-1zM883,814h1v6h-1zM884,814h1v8h-1zM885,818h1v4h-1zM886,818h1v3h-1zM887,820h1v1h-1zM888,819h1v2h-1zM889,818h1v3h-1zM890,820h1v5h-1zM891,822h1v4h-1zM892,818h1v5h-1zM893,817h1v9h-1zM894,817h1v4h-1zM895,820h1v4h-1zM896,823h1v5h-1zM897,821h1v7h-1zM898,814h1v8h-1zM899,814h1v7h-1zM900,820h1v6h-1zM901,814h1v7h-1zM902,820h1v7h-1zM903,825h1v5h-1zM904,815h1v19h-1zM905,817h1v4h-1zM906,820h1v2h-1zM907,821h1v3h-1zM908,814h1v8h-1zM909,814h1v9h-1zM910,816h1v7h-1zM911,818h1v5h-1zM912,822h1v3h-1zM913,824h1v2h-1zM914,822h1v3h-1zM915,815h1v8h-1zM916,814h1v2h-1zM917,814h1v8h-1zM918,818h1v6h-1zM919,817h1v5h-1zM920,819h1v7h-1zM921,815h1v5h-1zM922,818h1v6h-1zM923,817h1v4h-1zM924,819h1v6h-1zM925,814h1v6h-1zM926,812h1v3h-1zM927,812h1v6h-1zM928,817h1v7h-1zM929,823h1v4h-1z" fill="#FF0000"/><rect x="74" y="915" width="5" height="1" fill="#000" /><text x="71" y="919" font-family="Liberation Sans" font-size="11" font-weight="normal" fill="#000" text-anchor="end" >0</text><rect x="74" y="884" width="5" height="1" fill="#000" /><text x="71" y="888" font-family="Liberation Sans" font-size="11" font-weight="normal" fill="#000" text-anchor="end" >200</text><rect x="74" y="853" width="5" height="1" fill="#000" /><text x="71" y="857" font-family="Liberation Sans" font-size="11" font-weight="normal" fill="#000" text-anchor="end" >400</text><rect x="74" y="822" width="5" height="1" fill="#000" /><text x="71" y="826" font-family="Liberation Sans" font-size="11" font-weight="normal" fill="#000" text-anchor="end" >600</text><rect x="74" y="791" width="5" height="1" fill="#000" /><text x="71" y="795" font-family="Liberation Sans" font-size="11" font-weight="normal" fill="#000" text-anchor="end" >800</text><rect x="81" y="918" width="1" height="5" fill="#000" /><text x="81.5" y="934" font-family="Liberation Sans" font-size="11" font-weight="normal" fill="#000" text-anchor="middle" >0</text><rect x="88" y="918" width="1" height="3" fill="#000" /><rect x="94" y="918" width="1" height="3" fill="#000" /><rect x="101" y="918" width="1" height="3" fill="#000" /><rect x="107" y="918" width="1" height="3" fill="#000" /><rect x="114" y="918" width="1" height="3" fill="#000" /><rect x="120" y="918" width="1" height="3" fill="#000" /><rect x="127" y="918" width="1" height="3" fill="#000" /><rect x="133" y="918" width="1" height="3" fill="#000" /><rect x="140" y="918" width="1" height="3" fill="#000" /><rect x="146" y="918" width="1" height="3" fill="#000" /><rect x="153" y="918" width="1" height="3" fill="#000" /><rect x="159" y="918" width="1" height="3" fill="#000" /><rect x="166" y="918" width="1" height="5" fill="#000" /><text x="166.5" y="934" font-family="Liberation Sans" font-size="11" font-weight="normal" fill="#000" text-anchor="middle" >128</text><rect x="172" y="918" width="1" height="3" fill="#000" /><rect x="179" y="918" width="1" height="3" fill="#000" /><rect x="185" y="918" width="1" height="3" fill="#000" /><rect x="192" y="918" width="1" height="3" fill="#000" /><rect x="198" y="918" width="1" height="3" fill="#000" /><rect x="205" y="918" width="1" height="3" fill="#000" /><rect x="211" y="918" width="1" height="3" fill="#000" /><rect x="218" y="918" width="1" height="3" fill="#000" /><rect x="225" y="918" width="1" height="3" fill="#000" /><rect x="231" y="918" width="1" height="3" fill="#000" /><rect x="238" y="918" width="1" height="3" fill="#000" /><rect x="244" y="918" width="1" height="3" fill="#000" /><rect x="251" y="918" width="1" height="5" fill="#000" /><text x="251.5" y="934" font-family="Liberation Sans" font-size="11" font-weight="normal" fill="#000" text-anchor="middle" >256</text><rect x="257" y="918" width="1" height="3" fill="#000" /><rect x="264" y="918" width="1" height="3" fill="#000" /><rect x="270" y="918" width="1" height="3" fill="#000" /><rect x="277" y="918" width="1" height="3" fill="#000" /><rect x="283" y="918" width="1" height="3" fill="#000" /><rect x="290" y="918" width="1" height="3" fill="#000" /><rect x="296" y="918" width="1" height="3" fill="#000" /><rect x="303" y="918" width="1" height="3" fill="#000" /><rect x="309" y="918" width="1" height="3" fill="#000" /><rect x="316" y="918" width="1" height="3" fill="#000" /><rect x="322" y="918" width="1" height="3" fill="#000" /><rect x="329" y="918" width="1" height="3" fill="#000" /><rect x="335" y="918" width="1" height="5" fill="#000" /><text x="335.5" y="934" font-family="Liberation Sans" font-size="11" font-weight="normal" fill="#000" text-anchor="middle" >384</text><rect x="342" y="918" width="1" height="3" fill="#000" /><rect x="348" y="918" width="1" height="3" fill="#000" /><rect x="355" y="918" width="1" height="3" fill="#000" /><rect x="361" y="918" width="1" height="3" fill="#000" /><rect x="368" y="918" width="1" height="3" fill="#000" /><rect x="375" y="918" width="1" height="3" fill="#000" /><rect x="381" y="918" width="1" height="3" fill="#000" /><rect x="388" y="918" width="1" height="3" fill="#000" /><rect x="394" y="918" width="1" height="3" fill="#000" /><rect x="401" y="918" width="1" height="3" fill="#000" /><rect x="407" y="918" width="1" height="3" fill="#000" /><rect x="414" y="918" width="1" height="3" fill="#000" /><rect x="420" y="918" width="1" height="5" fill="#000" /><text x="420.5" y="934" font-family="Liberation Sans" font-size="11" font-weight="normal" fill="#000" text-anchor="middle" >512</text><rect x="427" y="918" width="1" height="3" fill="#000" /><rect x="433" y="918" width="1" height="3" fill="#000" /><rect x="440" y="918" width="1" height="3" fill="#000" /><rect x="446" y="918" width="1" height="3" fill="#000" /><rect x="453" y="918" width="1" height="3" fill="#000" /><rect x="459" y="918" width="1" height="3" fill="#000" /><rect x="466" y="918" width="1" height="3" fill="#000" /><rect x="472" y="918" width="1" height="3" fill="#000" /><rect x="479" y="918" width="1" height="3" fill="#000" /><rect x="485" y="918" width="1" height="3" fill="#000" /><rect x="492" y="918" width="1" height="3" fill="#000" /><rect x="498" y="918" width="1" height="3" fill="#000" /><rect x="505" y="918" width="1" height="5" fill="#000" /><text x="505.5" y="934" font-family="Liberation Sans" font-size="11" font-weight="normal" fill="#000" text-anchor="middle" >640</text><rect x="512" y="918" width="1" height="3" fill="#000" /><rect x="518" y="918" width="1" height="3" fill="#000" /><rect x="525" y="918" width="1" height="3" fill="#000" /><rect x="531" y="918" width="1" height="3" fill="#000" /><rect x="538" y="918" width="1" height="3" fill="#000" /><rect x="544" y="918" width="1" height="3" fill="#000" /><rect x="551" y="918" width="1" height="3" fill="#000" /><rect x="557" y="918" width="1" height="3" fill="#000" /><rect x="564" y="918" width="1" height="3" fill="#000" /><rect x="570" y="918" width="1" height="3" fill="#000" /><rect x="577" y="918" width="1" height="3" fill="#000" /><rect x="583" y="918" width="1" height="3" fill="#000" /><rect x="590" y="918" width="1" height="5" fill="#000" /><text x="590.5" y="934" font-family="Liberation Sans" font-size="11" font-weight="normal" fill="#000" text-anchor="middle" >768</text><rect x="596" y="918" width="1" height="3" fill="#000" /><rect x="603" y="918" width="1" height="3" fill="#000" /><rect x="609" y="918" width="1" height="3" fill="#000" /><rect x="616" y="918" width="1" height="3" fill="#000" /><rect x="622" y="918" width="1" height="3" fill="#000" /><rect x="629" y="918" width="1" height="3" fill="#000" /><rect x="635" y="918" width="1" height="3" fill="#000" /><rect x="642" y="918" width="1" height="3" fill="#000" /><rect x="649" y="918" width="1" height="3" fill="#000" /><rect x="655" y="918" width="1" height="3" fill="#000" /><rect x="662" y="918" width="1" height="3" fill="#000" /><rect x="668" y="918" width="1" height="3" fill="#000" /><rect x="675" y="918" width="1" height="5" fill="#000" /><text x="675.5" y="934" font-family="Liberation Sans" font-size="11" font-weight="normal" fill="#000" text-anchor="middle" >896</text><rect x="681" y="918" width="1" height="3" fill="#000" /><rect x="688" y="918" width="1" height="3" fill="#000" /><rect x="694" y="918" width="1" height="3" fill="#000" /><rect x="701" y="918" width="1" height="3" fill="#000" /><rect x="707" y="918" width="1" height="3" fill="#000" /><rect x="714" y="918" width="1" height="3" fill="#000" /><rect x="720" y="918" width="1" height="3" fill="#000" /><rect x="727" y="918" width="1" height="3" fill="#000" /><rect x="733" y="918" width="1" height="3" fill="#000" /><rect x="740" y="918" width="1" height="3" fill="#000" /><rect x="746" y="918" width="1" height="3" fill="#000" /><rect x="753" y="918" width="1" height="3" fill="#000" /><rect x="759" y="918" width="1" height="5" fill="#000" /><text x="759.5" y="934" font-family="Liberation Sans" font-size="11" font-weight="normal" fill="#000" text-anchor="middle" >1024</text><rect x="766" y="918" width="1" height="3" fill="#000" /><rect x="772" y="918" width="1" height="3" fill="#000" /><rect x="779" y="918" width="1" height="3" fill="#000" /><rect x="785" y="918" width="1" height="3" fill="#000" /><rect x="792" y="918" width="1" height="3" fill="#000" /><rect x="799" y="918" width="1" height="3" fill="#000" /><rect x="805" y="918" width="1" height="3" fill="#000" /><rect x="812" y="918" width="1" height="3" fill="#000" /><rect x="818" y="918" width="1" height="3" fill="#000" /><rect x="825" y="918" width="1" height="3" fill="#000" /><rect x="831" y="918" width="1" height="3" fill="#000" /><rect x="838" y="918" width="1" height="3" fill="#000" /><rect x="844" y="918" width="1" height="5" fill="#000" /><text x="844.5" y="934" font-family="Liberation Sans" font-size="11" font-weight="normal" fill="#000" text-anchor="middle" >1152</text><rect x="851" y="918" width="1" height="3" fill="#000" /><rect x="857" y="918" width="1" height="3" fill="#000" /><rect x="864" y="918" width="1" height="3" fill="#000" /><rect x="870" y="918" width="1" height="3" fill="#000" /><rect x="877" y="918" width="1" height="3" fill="#000" /><rect x="883" y="918" width="1" height="3" fill="#000" /><rect x="890" y="918" width="1" height="3" fill="#000" /><rect x="896" y="918" width="1" height="3" fill="#000" /><rect x="903" y="918" width="1" height="3" fill="#000" /><rect x="909" y="918" width="1" height="3" fill="#000" /><rect x="916" y="918" width="1" height="3" fill="#000" /><rect x="922" y="918" width="1" height="3" fill="#000" /><rect x="929" y="918" width="1" height="5" fill="#000" /><text x="929.5" y="934" font-family="Liberation Sans" font-size="11" font-weight="normal" fill="#000" text-anchor="middle" >1280</text><text x="0" y="0" font-family="Liberation Sans" font-size="11" font-weight="normal" fill="#000" text-anchor="middle" textLength="118.6" lengthAdjust="spacingAndGlyphs" transform="translate(49,850.0) rotate(-90)">Input noise (ENC) @ 2fC</text><rect x="953" y="301" width="1" height="640" fill="#606060" /><path d="M958,297 L958,945 L954,941 L954,301 Z" fill="#C8C8C8" shape-rendering="auto"/><path d="M30,945 L958,945 L954,941 L34,941 Z" fill="#C8C8C8" shape-rendering="auto"/><path d="M30,297 L958,297 L954,301 L34,301 Z" fill="url(#g75)" shape-rendering="auto"/><path d="M30,297 L34,301 L34,941 L30,945 Z" fill="url(#g76)" shape-rendering="auto"/><rect x="1028" y="78" width="19" height="913" fill="url(#g77)" /><rect x="6" y="991" width="1022" height="13" fill="url(#g78)" /><rect x="1028" y="991" width="19" height="13" fill="#ECE9D8" /><rect x="1029.5" y="78.5" width="15" height="16" rx="2" fill="url(#g79)" stroke="#FFFFFF"/><rect x="1030.5" y="79.5" width="13" height="14" rx="2" fill="none" stroke="#B8CCF2" stroke-width="0.6"/><path d="M1032.5,88 L1036.5,84 L1040.5,88" stroke="#4D6185" stroke-width="2.4" fill="none" shape-rendering="auto"/><rect x="1029.5" y="974.5" width="15" height="16" rx="2" fill="url(#g80)" stroke="#FFFFFF"/><rect x="1030.5" y="975.5" width="13" height="14" rx="2" fill="none" stroke="#B8CCF2" stroke-width="0.6"/><path d="M1032.5,981 L1036.5,985 L1040.5,981" stroke="#4D6185" stroke-width="2.4" fill="none" shape-rendering="auto"/><rect x="1029.5" y="246.5" width="14" height="575" rx="2" fill="url(#g81)" stroke="#FFFFFF"/><rect x="1044" y="248" width="1" height="572" fill="#A4B6D8" /><rect x="1034" y="530" width="7" height="1" fill="#EEF4FE" /><rect x="1034" y="532" width="7" height="1" fill="#EEF4FE" /><rect x="1034" y="534" width="7" height="1" fill="#EEF4FE" /><rect x="1034" y="536" width="7" height="1" fill="#EEF4FE" /><rect x="6.5" y="992.5" width="15" height="14" rx="2" fill="url(#g82)" stroke="#FFFFFF"/><rect x="7.5" y="993.5" width="13" height="12" rx="2" fill="none" stroke="#B8CCF2" stroke-width="0.6"/><path d="M16.5,995.5 L12.5,999.5 L16.5,1003.5" stroke="#4D6185" stroke-width="2.4" fill="none" shape-rendering="auto"/><rect x="1011.5" y="992.5" width="15" height="14" rx="2" fill="url(#g83)" stroke="#FFFFFF"/><rect x="1012.5" y="993.5" width="13" height="12" rx="2" fill="none" stroke="#B8CCF2" stroke-width="0.6"/><path d="M1017,995.5 L1021,999.5 L1017,1003.5" stroke="#4D6185" stroke-width="2.4" fill="none" shape-rendering="auto"/><rect x="191.5" y="992.5" width="678" height="13" rx="2" fill="url(#g84)" stroke="#FFFFFF"/><rect x="528" y="996" width="1" height="7" fill="#EEF4FE" /><rect x="530" y="996" width="1" height="7" fill="#EEF4FE" /><rect x="532" y="996" width="1" height="7" fill="#EEF4FE" /><rect x="534" y="996" width="1" height="7" fill="#EEF4FE" /><rect x="1042" y="997" width="2" height="2" fill="#FFFFFF" /><rect x="1041" y="996" width="2" height="2" fill="#B8B4A0" /><rect x="1038" y="1001" width="2" height="2" fill="#FFFFFF" /><rect x="1037" y="1000" width="2" height="2" fill="#B8B4A0" /><rect x="1042" y="1001" width="2" height="2" fill="#FFFFFF" /><rect x="1041" y="1000" width="2" height="2" fill="#B8B4A0" /></svg></body></html>
